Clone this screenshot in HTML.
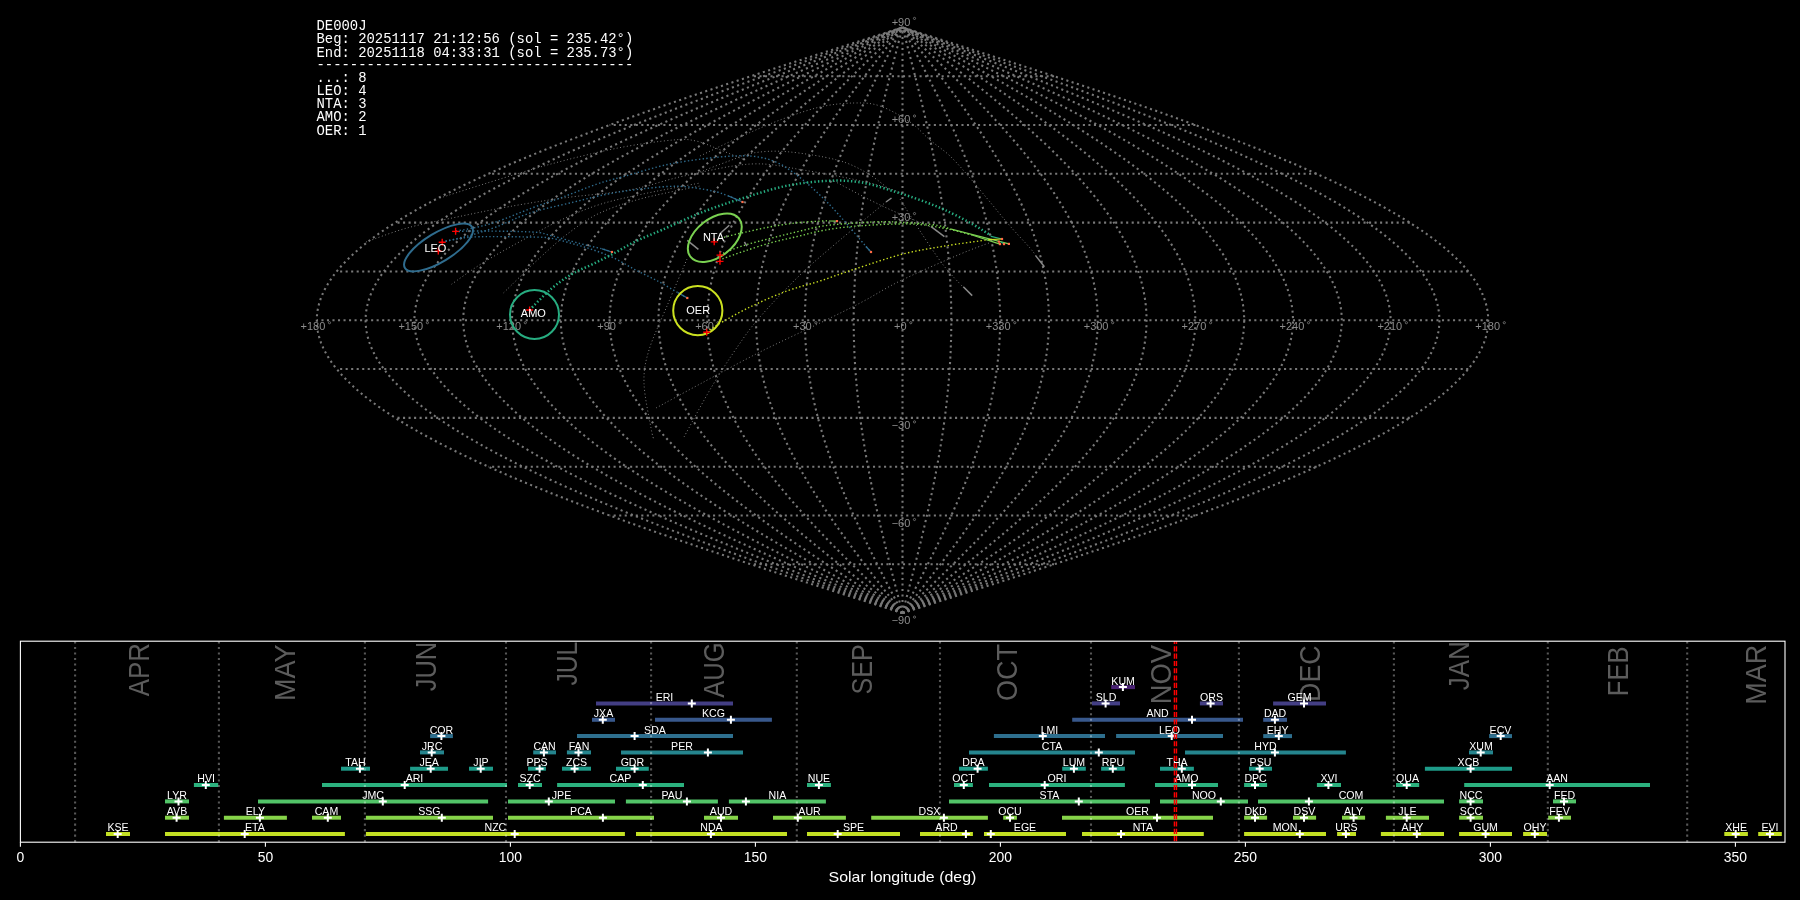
<!DOCTYPE html>
<html><head><meta charset="utf-8"><style>
html,body{margin:0;padding:0;background:#000;width:1800px;height:900px;overflow:hidden}
svg{display:block;will-change:transform}
text{font-family:"Liberation Sans",sans-serif}
.mono{font-family:"Liberation Mono",monospace}
</style></head><body>
<svg width="1800" height="900" viewBox="0 0 1800 900">
<rect x="0" y="0" width="1800" height="900" fill="#000"/>

<g fill="none" stroke="#787878" stroke-width="2.08" stroke-dasharray="2.08 3.44">
<path d="M902.50,613.11 L907.61,611.48 L912.72,609.86 L917.83,608.23 L922.94,606.60 L928.05,604.98 L933.15,603.35 L938.26,601.72 L943.36,600.09 L948.46,598.47 L953.55,596.84 L958.64,595.21 L963.72,593.59 L968.81,591.96 L973.88,590.33 L978.95,588.70 L984.02,587.08 L989.07,585.45 L994.13,583.82 L999.17,582.20 L1004.21,580.57 L1009.24,578.94 L1014.26,577.32 L1019.27,575.69 L1024.28,574.06 L1029.27,572.43 L1034.26,570.81 L1039.23,569.18 L1044.20,567.55 L1049.15,565.93 L1054.10,564.30 L1059.03,562.67 L1063.95,561.05 L1068.85,559.42 L1073.75,557.79 L1078.63,556.16 L1083.50,554.54 L1088.35,552.91 L1093.19,551.28 L1098.02,549.66 L1102.83,548.03 L1107.62,546.40 L1112.40,544.78 L1117.17,543.15 L1121.91,541.52 L1126.65,539.89 L1131.36,538.27 L1136.06,536.64 L1140.73,535.01 L1145.39,533.39 L1150.04,531.76 L1154.66,530.13 L1159.26,528.51 L1163.85,526.88 L1168.41,525.25 L1172.96,523.62 L1177.48,522.00 L1181.98,520.37 L1186.46,518.74 L1190.92,517.12 L1195.36,515.49 L1199.78,513.86 L1204.17,512.24 L1208.54,510.61 L1212.88,508.98 L1217.21,507.36 L1221.51,505.73 L1225.78,504.10 L1230.03,502.47 L1234.26,500.85 L1238.46,499.22 L1242.63,497.59 L1246.78,495.97 L1250.90,494.34 L1255.00,492.71 L1259.06,491.09 L1263.11,489.46 L1267.12,487.83 L1271.11,486.20 L1275.06,484.58 L1278.99,482.95 L1282.89,481.32 L1286.77,479.70 L1290.61,478.07 L1294.42,476.44 L1298.21,474.81 L1301.96,473.19 L1305.68,471.56 L1309.38,469.93 L1313.04,468.31 L1316.67,466.68 L1320.27,465.05 L1323.83,463.43 L1327.37,461.80 L1330.87,460.17 L1334.34,458.54 L1337.77,456.92 L1341.18,455.29 L1344.55,453.66 L1347.88,452.04 L1351.19,450.41 L1354.46,448.78 L1357.69,447.16 L1360.89,445.53 L1364.05,443.90 L1367.18,442.27 L1370.28,440.65 L1373.34,439.02 L1376.36,437.39 L1379.34,435.77 L1382.29,434.14 L1385.21,432.51 L1388.08,430.89 L1390.92,429.26 L1393.73,427.63 L1396.49,426.00 L1399.22,424.38 L1401.91,422.75 L1404.56,421.12 L1407.17,419.50 L1409.75,417.87 L1412.28,416.24 L1414.78,414.62 L1417.24,412.99 L1419.66,411.36 L1422.04,409.74 L1424.38,408.11 L1426.68,406.48 L1428.94,404.85 L1431.16,403.23 L1433.34,401.60 L1435.48,399.97 L1437.58,398.35 L1439.64,396.72 L1441.66,395.09 L1443.63,393.47 L1445.57,391.84 L1447.46,390.21 L1449.32,388.58 L1451.13,386.96 L1452.90,385.33 L1454.62,383.70 L1456.31,382.08 L1457.95,380.45 L1459.55,378.82 L1461.11,377.19 L1462.63,375.57 L1464.10,373.94 L1465.53,372.31 L1466.92,370.69 L1468.26,369.06 L1469.56,367.43 L1470.82,365.81 L1472.04,364.18 L1473.21,362.55 L1474.34,360.93 L1475.42,359.30 L1476.46,357.67 L1477.46,356.04 L1478.41,354.42 L1479.32,352.79 L1480.19,351.16 L1481.01,349.54 L1481.79,347.91 L1482.52,346.28 L1483.21,344.65 L1483.85,343.03 L1484.45,341.40 L1485.01,339.77 L1485.52,338.15 L1485.99,336.52 L1486.41,334.89 L1486.79,333.27 L1487.13,331.64 L1487.42,330.01 L1487.66,328.38 L1487.86,326.76 L1488.02,325.13 L1488.13,323.50 L1488.20,321.88 L1488.22,320.25 L1488.20,318.62 L1488.13,317.00 L1488.02,315.37 L1487.86,313.74 L1487.66,312.12 L1487.42,310.49 L1487.13,308.86 L1486.79,307.23 L1486.41,305.61 L1485.99,303.98 L1485.52,302.35 L1485.01,300.73 L1484.45,299.10 L1483.85,297.47 L1483.21,295.85 L1482.52,294.22 L1481.79,292.59 L1481.01,290.96 L1480.19,289.34 L1479.32,287.71 L1478.41,286.08 L1477.46,284.46 L1476.46,282.83 L1475.42,281.20 L1474.34,279.57 L1473.21,277.95 L1472.04,276.32 L1470.82,274.69 L1469.56,273.07 L1468.26,271.44 L1466.92,269.81 L1465.53,268.19 L1464.10,266.56 L1462.63,264.93 L1461.11,263.31 L1459.55,261.68 L1457.95,260.05 L1456.31,258.42 L1454.62,256.80 L1452.90,255.17 L1451.13,253.54 L1449.32,251.92 L1447.46,250.29 L1445.57,248.66 L1443.63,247.03 L1441.66,245.41 L1439.64,243.78 L1437.58,242.15 L1435.48,240.53 L1433.34,238.90 L1431.16,237.27 L1428.94,235.65 L1426.68,234.02 L1424.38,232.39 L1422.04,230.76 L1419.66,229.14 L1417.24,227.51 L1414.78,225.88 L1412.28,224.26 L1409.75,222.63 L1407.17,221.00 L1404.56,219.38 L1401.91,217.75 L1399.22,216.12 L1396.49,214.50 L1393.73,212.87 L1390.92,211.24 L1388.08,209.61 L1385.21,207.99 L1382.29,206.36 L1379.34,204.73 L1376.36,203.11 L1373.34,201.48 L1370.28,199.85 L1367.18,198.22 L1364.05,196.60 L1360.89,194.97 L1357.69,193.34 L1354.46,191.72 L1351.19,190.09 L1347.88,188.46 L1344.55,186.84 L1341.18,185.21 L1337.77,183.58 L1334.34,181.96 L1330.87,180.33 L1327.37,178.70 L1323.83,177.07 L1320.27,175.45 L1316.67,173.82 L1313.04,172.19 L1309.38,170.57 L1305.68,168.94 L1301.96,167.31 L1298.21,165.69 L1294.42,164.06 L1290.61,162.43 L1286.77,160.80 L1282.89,159.18 L1278.99,157.55 L1275.06,155.92 L1271.11,154.30 L1267.12,152.67 L1263.11,151.04 L1259.06,149.41 L1255.00,147.79 L1250.90,146.16 L1246.78,144.53 L1242.63,142.91 L1238.46,141.28 L1234.26,139.65 L1230.03,138.03 L1225.78,136.40 L1221.51,134.77 L1217.21,133.15 L1212.88,131.52 L1208.54,129.89 L1204.17,128.26 L1199.78,126.64 L1195.36,125.01 L1190.92,123.38 L1186.46,121.76 L1181.98,120.13 L1177.48,118.50 L1172.96,116.88 L1168.41,115.25 L1163.85,113.62 L1159.26,111.99 L1154.66,110.37 L1150.04,108.74 L1145.39,107.11 L1140.73,105.49 L1136.06,103.86 L1131.36,102.23 L1126.65,100.60 L1121.91,98.98 L1117.17,97.35 L1112.40,95.72 L1107.62,94.10 L1102.83,92.47 L1098.02,90.84 L1093.19,89.22 L1088.35,87.59 L1083.50,85.96 L1078.63,84.34 L1073.75,82.71 L1068.85,81.08 L1063.95,79.45 L1059.03,77.83 L1054.10,76.20 L1049.15,74.57 L1044.20,72.95 L1039.23,71.32 L1034.26,69.69 L1029.27,68.06 L1024.28,66.44 L1019.27,64.81 L1014.26,63.18 L1009.24,61.56 L1004.21,59.93 L999.17,58.30 L994.13,56.68 L989.07,55.05 L984.02,53.42 L978.95,51.80 L973.88,50.17 L968.81,48.54 L963.72,46.91 L958.64,45.29 L953.55,43.66 L948.46,42.03 L943.36,40.41 L938.26,38.78 L933.15,37.15 L928.05,35.52 L922.94,33.90 L917.83,32.27 L912.72,30.64 L907.61,29.02 L902.50,27.39"/>
<path d="M902.50,613.11 L907.19,611.48 L911.87,609.86 L916.55,608.23 L921.24,606.60 L925.92,604.98 L930.60,603.35 L935.28,601.72 L939.95,600.09 L944.63,598.47 L949.29,596.84 L953.96,595.21 L958.62,593.59 L963.28,591.96 L967.93,590.33 L972.58,588.70 L977.22,587.08 L981.86,585.45 L986.49,583.82 L991.12,582.20 L995.73,580.57 L1000.34,578.94 L1004.95,577.32 L1009.54,575.69 L1014.13,574.06 L1018.71,572.43 L1023.28,570.81 L1027.84,569.18 L1032.39,567.55 L1036.93,565.93 L1041.46,564.30 L1045.98,562.67 L1050.49,561.05 L1054.99,559.42 L1059.48,557.79 L1063.95,556.16 L1068.41,554.54 L1072.86,552.91 L1077.30,551.28 L1081.72,549.66 L1086.13,548.03 L1090.53,546.40 L1094.91,544.78 L1099.28,543.15 L1103.63,541.52 L1107.97,539.89 L1112.29,538.27 L1116.59,536.64 L1120.88,535.01 L1125.15,533.39 L1129.41,531.76 L1133.65,530.13 L1137.87,528.51 L1142.07,526.88 L1146.25,525.25 L1150.42,523.62 L1154.56,522.00 L1158.69,520.37 L1162.80,518.74 L1166.89,517.12 L1170.95,515.49 L1175.00,513.86 L1179.03,512.24 L1183.03,510.61 L1187.02,508.98 L1190.98,507.36 L1194.92,505.73 L1198.84,504.10 L1202.74,502.47 L1206.61,500.85 L1210.46,499.22 L1214.29,497.59 L1218.09,495.97 L1221.87,494.34 L1225.62,492.71 L1229.35,491.09 L1233.05,489.46 L1236.73,487.83 L1240.39,486.20 L1244.02,484.58 L1247.62,482.95 L1251.20,481.32 L1254.74,479.70 L1258.27,478.07 L1261.76,476.44 L1265.23,474.81 L1268.67,473.19 L1272.08,471.56 L1275.47,469.93 L1278.83,468.31 L1282.15,466.68 L1285.45,465.05 L1288.72,463.43 L1291.96,461.80 L1295.17,460.17 L1298.35,458.54 L1301.50,456.92 L1304.62,455.29 L1307.71,453.66 L1310.77,452.04 L1313.80,450.41 L1316.79,448.78 L1319.76,447.16 L1322.69,445.53 L1325.59,443.90 L1328.46,442.27 L1331.30,440.65 L1334.10,439.02 L1336.87,437.39 L1339.61,435.77 L1342.31,434.14 L1344.98,432.51 L1347.62,430.89 L1350.22,429.26 L1352.79,427.63 L1355.33,426.00 L1357.83,424.38 L1360.29,422.75 L1362.72,421.12 L1365.12,419.50 L1367.48,417.87 L1369.80,416.24 L1372.09,414.62 L1374.35,412.99 L1376.56,411.36 L1378.74,409.74 L1380.89,408.11 L1383.00,406.48 L1385.07,404.85 L1387.11,403.23 L1389.11,401.60 L1391.07,399.97 L1392.99,398.35 L1394.88,396.72 L1396.73,395.09 L1398.54,393.47 L1400.31,391.84 L1402.05,390.21 L1403.75,388.58 L1405.41,386.96 L1407.03,385.33 L1408.61,383.70 L1410.16,382.08 L1411.66,380.45 L1413.13,378.82 L1414.56,377.19 L1415.95,375.57 L1417.30,373.94 L1418.61,372.31 L1419.88,370.69 L1421.12,369.06 L1422.31,367.43 L1423.46,365.81 L1424.58,364.18 L1425.65,362.55 L1426.68,360.93 L1427.68,359.30 L1428.63,357.67 L1429.55,356.04 L1430.42,354.42 L1431.25,352.79 L1432.05,351.16 L1432.80,349.54 L1433.51,347.91 L1434.18,346.28 L1434.82,344.65 L1435.41,343.03 L1435.96,341.40 L1436.47,339.77 L1436.94,338.15 L1437.37,336.52 L1437.75,334.89 L1438.10,333.27 L1438.41,331.64 L1438.67,330.01 L1438.90,328.38 L1439.08,326.76 L1439.23,325.13 L1439.33,323.50 L1439.39,321.88 L1439.41,320.25 L1439.39,318.62 L1439.33,317.00 L1439.23,315.37 L1439.08,313.74 L1438.90,312.12 L1438.67,310.49 L1438.41,308.86 L1438.10,307.23 L1437.75,305.61 L1437.37,303.98 L1436.94,302.35 L1436.47,300.73 L1435.96,299.10 L1435.41,297.47 L1434.82,295.85 L1434.18,294.22 L1433.51,292.59 L1432.80,290.96 L1432.05,289.34 L1431.25,287.71 L1430.42,286.08 L1429.55,284.46 L1428.63,282.83 L1427.68,281.20 L1426.68,279.57 L1425.65,277.95 L1424.58,276.32 L1423.46,274.69 L1422.31,273.07 L1421.12,271.44 L1419.88,269.81 L1418.61,268.19 L1417.30,266.56 L1415.95,264.93 L1414.56,263.31 L1413.13,261.68 L1411.66,260.05 L1410.16,258.42 L1408.61,256.80 L1407.03,255.17 L1405.41,253.54 L1403.75,251.92 L1402.05,250.29 L1400.31,248.66 L1398.54,247.03 L1396.73,245.41 L1394.88,243.78 L1392.99,242.15 L1391.07,240.53 L1389.11,238.90 L1387.11,237.27 L1385.07,235.65 L1383.00,234.02 L1380.89,232.39 L1378.74,230.76 L1376.56,229.14 L1374.35,227.51 L1372.09,225.88 L1369.80,224.26 L1367.48,222.63 L1365.12,221.00 L1362.72,219.38 L1360.29,217.75 L1357.83,216.12 L1355.33,214.50 L1352.79,212.87 L1350.22,211.24 L1347.62,209.61 L1344.98,207.99 L1342.31,206.36 L1339.61,204.73 L1336.87,203.11 L1334.10,201.48 L1331.30,199.85 L1328.46,198.22 L1325.59,196.60 L1322.69,194.97 L1319.76,193.34 L1316.79,191.72 L1313.80,190.09 L1310.77,188.46 L1307.71,186.84 L1304.62,185.21 L1301.50,183.58 L1298.35,181.96 L1295.17,180.33 L1291.96,178.70 L1288.72,177.07 L1285.45,175.45 L1282.15,173.82 L1278.83,172.19 L1275.47,170.57 L1272.08,168.94 L1268.67,167.31 L1265.23,165.69 L1261.76,164.06 L1258.27,162.43 L1254.74,160.80 L1251.20,159.18 L1247.62,157.55 L1244.02,155.92 L1240.39,154.30 L1236.73,152.67 L1233.05,151.04 L1229.35,149.41 L1225.62,147.79 L1221.87,146.16 L1218.09,144.53 L1214.29,142.91 L1210.46,141.28 L1206.61,139.65 L1202.74,138.03 L1198.84,136.40 L1194.92,134.77 L1190.98,133.15 L1187.02,131.52 L1183.03,129.89 L1179.03,128.26 L1175.00,126.64 L1170.95,125.01 L1166.89,123.38 L1162.80,121.76 L1158.69,120.13 L1154.56,118.50 L1150.42,116.88 L1146.25,115.25 L1142.07,113.62 L1137.87,111.99 L1133.65,110.37 L1129.41,108.74 L1125.15,107.11 L1120.88,105.49 L1116.59,103.86 L1112.29,102.23 L1107.97,100.60 L1103.63,98.98 L1099.28,97.35 L1094.91,95.72 L1090.53,94.10 L1086.13,92.47 L1081.72,90.84 L1077.30,89.22 L1072.86,87.59 L1068.41,85.96 L1063.95,84.34 L1059.48,82.71 L1054.99,81.08 L1050.49,79.45 L1045.98,77.83 L1041.46,76.20 L1036.93,74.57 L1032.39,72.95 L1027.84,71.32 L1023.28,69.69 L1018.71,68.06 L1014.13,66.44 L1009.54,64.81 L1004.95,63.18 L1000.34,61.56 L995.73,59.93 L991.12,58.30 L986.49,56.68 L981.86,55.05 L977.22,53.42 L972.58,51.80 L967.93,50.17 L963.28,48.54 L958.62,46.91 L953.96,45.29 L949.29,43.66 L944.63,42.03 L939.95,40.41 L935.28,38.78 L930.60,37.15 L925.92,35.52 L921.24,33.90 L916.55,32.27 L911.87,30.64 L907.19,29.02 L902.50,27.39"/>
<path d="M902.50,613.11 L906.76,611.48 L911.02,609.86 L915.28,608.23 L919.53,606.60 L923.79,604.98 L928.05,603.35 L932.30,601.72 L936.55,600.09 L940.80,598.47 L945.04,596.84 L949.28,595.21 L953.52,593.59 L957.75,591.96 L961.98,590.33 L966.21,588.70 L970.43,587.08 L974.65,585.45 L978.86,583.82 L983.06,582.20 L987.26,580.57 L991.45,578.94 L995.63,577.32 L999.81,575.69 L1003.98,574.06 L1008.14,572.43 L1012.30,570.81 L1016.44,569.18 L1020.58,567.55 L1024.71,565.93 L1028.83,564.30 L1032.94,562.67 L1037.04,561.05 L1041.13,559.42 L1045.21,557.79 L1049.27,556.16 L1053.33,554.54 L1057.38,552.91 L1061.41,551.28 L1065.43,549.66 L1069.44,548.03 L1073.44,546.40 L1077.42,544.78 L1081.39,543.15 L1085.35,541.52 L1089.29,539.89 L1093.22,538.27 L1097.13,536.64 L1101.03,535.01 L1104.91,533.39 L1108.78,531.76 L1112.63,530.13 L1116.47,528.51 L1120.29,526.88 L1124.09,525.25 L1127.88,523.62 L1131.65,522.00 L1135.40,520.37 L1139.14,518.74 L1142.85,517.12 L1146.55,515.49 L1150.23,513.86 L1153.89,512.24 L1157.53,510.61 L1161.15,508.98 L1164.76,507.36 L1168.34,505.73 L1171.90,504.10 L1175.44,502.47 L1178.96,500.85 L1182.46,499.22 L1185.94,497.59 L1189.40,495.97 L1192.83,494.34 L1196.25,492.71 L1199.64,491.09 L1203.00,489.46 L1206.35,487.83 L1209.67,486.20 L1212.97,484.58 L1216.24,482.95 L1219.50,481.32 L1222.72,479.70 L1225.92,478.07 L1229.10,476.44 L1232.26,474.81 L1235.38,473.19 L1238.49,471.56 L1241.56,469.93 L1244.61,468.31 L1247.64,466.68 L1250.64,465.05 L1253.61,463.43 L1256.56,461.80 L1259.47,460.17 L1262.37,458.54 L1265.23,456.92 L1268.07,455.29 L1270.87,453.66 L1273.65,452.04 L1276.41,450.41 L1279.13,448.78 L1281.82,447.16 L1284.49,445.53 L1287.13,443.90 L1289.74,442.27 L1292.31,440.65 L1294.86,439.02 L1297.38,437.39 L1299.87,435.77 L1302.33,434.14 L1304.76,432.51 L1307.15,430.89 L1309.52,429.26 L1311.86,427.63 L1314.16,426.00 L1316.43,424.38 L1318.67,422.75 L1320.88,421.12 L1323.06,419.50 L1325.21,417.87 L1327.32,416.24 L1329.40,414.62 L1331.45,412.99 L1333.47,411.36 L1335.45,409.74 L1337.40,408.11 L1339.32,406.48 L1341.20,404.85 L1343.05,403.23 L1344.87,401.60 L1346.65,399.97 L1348.40,398.35 L1350.12,396.72 L1351.80,395.09 L1353.45,393.47 L1355.06,391.84 L1356.64,390.21 L1358.18,388.58 L1359.69,386.96 L1361.16,385.33 L1362.60,383.70 L1364.01,382.08 L1365.38,380.45 L1366.71,378.82 L1368.01,377.19 L1369.27,375.57 L1370.50,373.94 L1371.69,372.31 L1372.85,370.69 L1373.97,369.06 L1375.05,367.43 L1376.10,365.81 L1377.11,364.18 L1378.09,362.55 L1379.03,360.93 L1379.93,359.30 L1380.80,357.67 L1381.63,356.04 L1382.43,354.42 L1383.18,352.79 L1383.91,351.16 L1384.59,349.54 L1385.24,347.91 L1385.85,346.28 L1386.42,344.65 L1386.96,343.03 L1387.46,341.40 L1387.93,339.77 L1388.35,338.15 L1388.74,336.52 L1389.10,334.89 L1389.41,333.27 L1389.69,331.64 L1389.93,330.01 L1390.14,328.38 L1390.30,326.76 L1390.43,325.13 L1390.53,323.50 L1390.58,321.88 L1390.60,320.25 L1390.58,318.62 L1390.53,317.00 L1390.43,315.37 L1390.30,313.74 L1390.14,312.12 L1389.93,310.49 L1389.69,308.86 L1389.41,307.23 L1389.10,305.61 L1388.74,303.98 L1388.35,302.35 L1387.93,300.73 L1387.46,299.10 L1386.96,297.47 L1386.42,295.85 L1385.85,294.22 L1385.24,292.59 L1384.59,290.96 L1383.91,289.34 L1383.18,287.71 L1382.43,286.08 L1381.63,284.46 L1380.80,282.83 L1379.93,281.20 L1379.03,279.57 L1378.09,277.95 L1377.11,276.32 L1376.10,274.69 L1375.05,273.07 L1373.97,271.44 L1372.85,269.81 L1371.69,268.19 L1370.50,266.56 L1369.27,264.93 L1368.01,263.31 L1366.71,261.68 L1365.38,260.05 L1364.01,258.42 L1362.60,256.80 L1361.16,255.17 L1359.69,253.54 L1358.18,251.92 L1356.64,250.29 L1355.06,248.66 L1353.45,247.03 L1351.80,245.41 L1350.12,243.78 L1348.40,242.15 L1346.65,240.53 L1344.87,238.90 L1343.05,237.27 L1341.20,235.65 L1339.32,234.02 L1337.40,232.39 L1335.45,230.76 L1333.47,229.14 L1331.45,227.51 L1329.40,225.88 L1327.32,224.26 L1325.21,222.63 L1323.06,221.00 L1320.88,219.38 L1318.67,217.75 L1316.43,216.12 L1314.16,214.50 L1311.86,212.87 L1309.52,211.24 L1307.15,209.61 L1304.76,207.99 L1302.33,206.36 L1299.87,204.73 L1297.38,203.11 L1294.86,201.48 L1292.31,199.85 L1289.74,198.22 L1287.13,196.60 L1284.49,194.97 L1281.82,193.34 L1279.13,191.72 L1276.41,190.09 L1273.65,188.46 L1270.87,186.84 L1268.07,185.21 L1265.23,183.58 L1262.37,181.96 L1259.47,180.33 L1256.56,178.70 L1253.61,177.07 L1250.64,175.45 L1247.64,173.82 L1244.61,172.19 L1241.56,170.57 L1238.49,168.94 L1235.38,167.31 L1232.26,165.69 L1229.10,164.06 L1225.92,162.43 L1222.72,160.80 L1219.50,159.18 L1216.24,157.55 L1212.97,155.92 L1209.67,154.30 L1206.35,152.67 L1203.00,151.04 L1199.64,149.41 L1196.25,147.79 L1192.83,146.16 L1189.40,144.53 L1185.94,142.91 L1182.46,141.28 L1178.96,139.65 L1175.44,138.03 L1171.90,136.40 L1168.34,134.77 L1164.76,133.15 L1161.15,131.52 L1157.53,129.89 L1153.89,128.26 L1150.23,126.64 L1146.55,125.01 L1142.85,123.38 L1139.14,121.76 L1135.40,120.13 L1131.65,118.50 L1127.88,116.88 L1124.09,115.25 L1120.29,113.62 L1116.47,111.99 L1112.63,110.37 L1108.78,108.74 L1104.91,107.11 L1101.03,105.49 L1097.13,103.86 L1093.22,102.23 L1089.29,100.60 L1085.35,98.98 L1081.39,97.35 L1077.42,95.72 L1073.44,94.10 L1069.44,92.47 L1065.43,90.84 L1061.41,89.22 L1057.38,87.59 L1053.33,85.96 L1049.27,84.34 L1045.21,82.71 L1041.13,81.08 L1037.04,79.45 L1032.94,77.83 L1028.83,76.20 L1024.71,74.57 L1020.58,72.95 L1016.44,71.32 L1012.30,69.69 L1008.14,68.06 L1003.98,66.44 L999.81,64.81 L995.63,63.18 L991.45,61.56 L987.26,59.93 L983.06,58.30 L978.86,56.68 L974.65,55.05 L970.43,53.42 L966.21,51.80 L961.98,50.17 L957.75,48.54 L953.52,46.91 L949.28,45.29 L945.04,43.66 L940.80,42.03 L936.55,40.41 L932.30,38.78 L928.05,37.15 L923.79,35.52 L919.53,33.90 L915.28,32.27 L911.02,30.64 L906.76,29.02 L902.50,27.39"/>
<path d="M902.50,613.11 L906.33,611.48 L910.17,609.86 L914.00,608.23 L917.83,606.60 L921.66,604.98 L925.49,603.35 L929.32,601.72 L933.14,600.09 L936.97,598.47 L940.79,596.84 L944.60,595.21 L948.42,593.59 L952.23,591.96 L956.04,590.33 L959.84,588.70 L963.64,587.08 L967.43,585.45 L971.22,583.82 L975.00,582.20 L978.78,580.57 L982.55,578.94 L986.32,577.32 L990.08,575.69 L993.83,574.06 L997.58,572.43 L1001.32,570.81 L1005.05,569.18 L1008.77,567.55 L1012.49,565.93 L1016.20,564.30 L1019.90,562.67 L1023.58,561.05 L1027.27,559.42 L1030.94,557.79 L1034.60,556.16 L1038.25,554.54 L1041.89,552.91 L1045.52,551.28 L1049.14,549.66 L1052.75,548.03 L1056.34,546.40 L1059.93,544.78 L1063.50,543.15 L1067.06,541.52 L1070.61,539.89 L1074.14,538.27 L1077.67,536.64 L1081.18,535.01 L1084.67,533.39 L1088.15,531.76 L1091.62,530.13 L1095.07,528.51 L1098.51,526.88 L1101.93,525.25 L1105.34,523.62 L1108.73,522.00 L1112.11,520.37 L1115.47,518.74 L1118.82,517.12 L1122.14,515.49 L1125.46,513.86 L1128.75,512.24 L1132.03,510.61 L1135.29,508.98 L1138.53,507.36 L1141.75,505.73 L1144.96,504.10 L1148.15,502.47 L1151.32,500.85 L1154.47,499.22 L1157.60,497.59 L1160.71,495.97 L1163.80,494.34 L1166.87,492.71 L1169.92,491.09 L1172.95,489.46 L1175.96,487.83 L1178.95,486.20 L1181.92,484.58 L1184.87,482.95 L1187.80,481.32 L1190.70,479.70 L1193.58,478.07 L1196.44,476.44 L1199.28,474.81 L1202.10,473.19 L1204.89,471.56 L1207.66,469.93 L1210.40,468.31 L1213.12,466.68 L1215.82,465.05 L1218.50,463.43 L1221.15,461.80 L1223.78,460.17 L1226.38,458.54 L1228.96,456.92 L1231.51,455.29 L1234.04,453.66 L1236.54,452.04 L1239.02,450.41 L1241.47,448.78 L1243.89,447.16 L1246.29,445.53 L1248.67,443.90 L1251.01,442.27 L1253.33,440.65 L1255.63,439.02 L1257.89,437.39 L1260.13,435.77 L1262.35,434.14 L1264.53,432.51 L1266.69,430.89 L1268.82,429.26 L1270.92,427.63 L1272.99,426.00 L1275.04,424.38 L1277.06,422.75 L1279.05,421.12 L1281.01,419.50 L1282.94,417.87 L1284.84,416.24 L1286.71,414.62 L1288.56,412.99 L1290.37,411.36 L1292.15,409.74 L1293.91,408.11 L1295.64,406.48 L1297.33,404.85 L1299.00,403.23 L1300.63,401.60 L1302.24,399.97 L1303.81,398.35 L1305.36,396.72 L1306.87,395.09 L1308.35,393.47 L1309.80,391.84 L1311.22,390.21 L1312.61,388.58 L1313.97,386.96 L1315.30,385.33 L1316.59,383.70 L1317.86,382.08 L1319.09,380.45 L1320.29,378.82 L1321.46,377.19 L1322.60,375.57 L1323.70,373.94 L1324.77,372.31 L1325.81,370.69 L1326.82,369.06 L1327.80,367.43 L1328.74,365.81 L1329.65,364.18 L1330.53,362.55 L1331.38,360.93 L1332.19,359.30 L1332.97,357.67 L1333.72,356.04 L1334.43,354.42 L1335.12,352.79 L1335.77,351.16 L1336.38,349.54 L1336.96,347.91 L1337.51,346.28 L1338.03,344.65 L1338.52,343.03 L1338.97,341.40 L1339.38,339.77 L1339.77,338.15 L1340.12,336.52 L1340.44,334.89 L1340.72,333.27 L1340.97,331.64 L1341.19,330.01 L1341.37,328.38 L1341.52,326.76 L1341.64,325.13 L1341.72,323.50 L1341.77,321.88 L1341.79,320.25 L1341.77,318.62 L1341.72,317.00 L1341.64,315.37 L1341.52,313.74 L1341.37,312.12 L1341.19,310.49 L1340.97,308.86 L1340.72,307.23 L1340.44,305.61 L1340.12,303.98 L1339.77,302.35 L1339.38,300.73 L1338.97,299.10 L1338.52,297.47 L1338.03,295.85 L1337.51,294.22 L1336.96,292.59 L1336.38,290.96 L1335.77,289.34 L1335.12,287.71 L1334.43,286.08 L1333.72,284.46 L1332.97,282.83 L1332.19,281.20 L1331.38,279.57 L1330.53,277.95 L1329.65,276.32 L1328.74,274.69 L1327.80,273.07 L1326.82,271.44 L1325.81,269.81 L1324.77,268.19 L1323.70,266.56 L1322.60,264.93 L1321.46,263.31 L1320.29,261.68 L1319.09,260.05 L1317.86,258.42 L1316.59,256.80 L1315.30,255.17 L1313.97,253.54 L1312.61,251.92 L1311.22,250.29 L1309.80,248.66 L1308.35,247.03 L1306.87,245.41 L1305.36,243.78 L1303.81,242.15 L1302.24,240.53 L1300.63,238.90 L1299.00,237.27 L1297.33,235.65 L1295.64,234.02 L1293.91,232.39 L1292.15,230.76 L1290.37,229.14 L1288.56,227.51 L1286.71,225.88 L1284.84,224.26 L1282.94,222.63 L1281.01,221.00 L1279.05,219.38 L1277.06,217.75 L1275.04,216.12 L1272.99,214.50 L1270.92,212.87 L1268.82,211.24 L1266.69,209.61 L1264.53,207.99 L1262.35,206.36 L1260.13,204.73 L1257.89,203.11 L1255.63,201.48 L1253.33,199.85 L1251.01,198.22 L1248.67,196.60 L1246.29,194.97 L1243.89,193.34 L1241.47,191.72 L1239.02,190.09 L1236.54,188.46 L1234.04,186.84 L1231.51,185.21 L1228.96,183.58 L1226.38,181.96 L1223.78,180.33 L1221.15,178.70 L1218.50,177.07 L1215.82,175.45 L1213.12,173.82 L1210.40,172.19 L1207.66,170.57 L1204.89,168.94 L1202.10,167.31 L1199.28,165.69 L1196.44,164.06 L1193.58,162.43 L1190.70,160.80 L1187.80,159.18 L1184.87,157.55 L1181.92,155.92 L1178.95,154.30 L1175.96,152.67 L1172.95,151.04 L1169.92,149.41 L1166.87,147.79 L1163.80,146.16 L1160.71,144.53 L1157.60,142.91 L1154.47,141.28 L1151.32,139.65 L1148.15,138.03 L1144.96,136.40 L1141.75,134.77 L1138.53,133.15 L1135.29,131.52 L1132.03,129.89 L1128.75,128.26 L1125.46,126.64 L1122.14,125.01 L1118.82,123.38 L1115.47,121.76 L1112.11,120.13 L1108.73,118.50 L1105.34,116.88 L1101.93,115.25 L1098.51,113.62 L1095.07,111.99 L1091.62,110.37 L1088.15,108.74 L1084.67,107.11 L1081.18,105.49 L1077.67,103.86 L1074.14,102.23 L1070.61,100.60 L1067.06,98.98 L1063.50,97.35 L1059.93,95.72 L1056.34,94.10 L1052.75,92.47 L1049.14,90.84 L1045.52,89.22 L1041.89,87.59 L1038.25,85.96 L1034.60,84.34 L1030.94,82.71 L1027.27,81.08 L1023.58,79.45 L1019.90,77.83 L1016.20,76.20 L1012.49,74.57 L1008.77,72.95 L1005.05,71.32 L1001.32,69.69 L997.58,68.06 L993.83,66.44 L990.08,64.81 L986.32,63.18 L982.55,61.56 L978.78,59.93 L975.00,58.30 L971.22,56.68 L967.43,55.05 L963.64,53.42 L959.84,51.80 L956.04,50.17 L952.23,48.54 L948.42,46.91 L944.60,45.29 L940.79,43.66 L936.97,42.03 L933.14,40.41 L929.32,38.78 L925.49,37.15 L921.66,35.52 L917.83,33.90 L914.00,32.27 L910.17,30.64 L906.33,29.02 L902.50,27.39"/>
<path d="M902.50,613.11 L905.91,611.48 L909.31,609.86 L912.72,608.23 L916.13,606.60 L919.53,604.98 L922.94,603.35 L926.34,601.72 L929.74,600.09 L933.14,598.47 L936.53,596.84 L939.93,595.21 L943.32,593.59 L946.70,591.96 L950.09,590.33 L953.47,588.70 L956.84,587.08 L960.22,585.45 L963.58,583.82 L966.95,582.20 L970.31,580.57 L973.66,578.94 L977.01,577.32 L980.35,575.69 L983.69,574.06 L987.02,572.43 L990.34,570.81 L993.66,569.18 L996.97,567.55 L1000.27,565.93 L1003.56,564.30 L1006.85,562.67 L1010.13,561.05 L1013.40,559.42 L1016.67,557.79 L1019.92,556.16 L1023.16,554.54 L1026.40,552.91 L1029.63,551.28 L1032.84,549.66 L1036.05,548.03 L1039.25,546.40 L1042.44,544.78 L1045.61,543.15 L1048.78,541.52 L1051.93,539.89 L1055.07,538.27 L1058.20,536.64 L1061.32,535.01 L1064.43,533.39 L1067.52,531.76 L1070.61,530.13 L1073.68,528.51 L1076.73,526.88 L1079.77,525.25 L1082.80,523.62 L1085.82,522.00 L1088.82,520.37 L1091.81,518.74 L1094.78,517.12 L1097.74,515.49 L1100.68,513.86 L1103.61,512.24 L1106.53,510.61 L1109.42,508.98 L1112.30,507.36 L1115.17,505.73 L1118.02,504.10 L1120.85,502.47 L1123.67,500.85 L1126.47,499.22 L1129.25,497.59 L1132.02,495.97 L1134.77,494.34 L1137.50,492.71 L1140.21,491.09 L1142.90,489.46 L1145.58,487.83 L1148.24,486.20 L1150.88,484.58 L1153.50,482.95 L1156.10,481.32 L1158.68,479.70 L1161.24,478.07 L1163.78,476.44 L1166.30,474.81 L1168.81,473.19 L1171.29,471.56 L1173.75,469.93 L1176.19,468.31 L1178.61,466.68 L1181.01,465.05 L1183.39,463.43 L1185.74,461.80 L1188.08,460.17 L1190.39,458.54 L1192.68,456.92 L1194.95,455.29 L1197.20,453.66 L1199.42,452.04 L1201.63,450.41 L1203.80,448.78 L1205.96,447.16 L1208.09,445.53 L1210.20,443.90 L1212.29,442.27 L1214.35,440.65 L1216.39,439.02 L1218.40,437.39 L1220.40,435.77 L1222.36,434.14 L1224.30,432.51 L1226.22,430.89 L1228.12,429.26 L1229.98,427.63 L1231.83,426.00 L1233.65,424.38 L1235.44,422.75 L1237.21,421.12 L1238.95,419.50 L1240.67,417.87 L1242.36,416.24 L1244.02,414.62 L1245.66,412.99 L1247.27,411.36 L1248.86,409.74 L1250.42,408.11 L1251.95,406.48 L1253.46,404.85 L1254.94,403.23 L1256.40,401.60 L1257.82,399.97 L1259.22,398.35 L1260.59,396.72 L1261.94,395.09 L1263.26,393.47 L1264.55,391.84 L1265.81,390.21 L1267.04,388.58 L1268.25,386.96 L1269.43,385.33 L1270.58,383.70 L1271.71,382.08 L1272.80,380.45 L1273.87,378.82 L1274.91,377.19 L1275.92,375.57 L1276.90,373.94 L1277.85,372.31 L1278.78,370.69 L1279.67,369.06 L1280.54,367.43 L1281.38,365.81 L1282.19,364.18 L1282.97,362.55 L1283.72,360.93 L1284.45,359.30 L1285.14,357.67 L1285.81,356.04 L1286.44,354.42 L1287.05,352.79 L1287.62,351.16 L1288.17,349.54 L1288.69,347.91 L1289.18,346.28 L1289.64,344.65 L1290.07,343.03 L1290.47,341.40 L1290.84,339.77 L1291.18,338.15 L1291.49,336.52 L1291.78,334.89 L1292.03,333.27 L1292.25,331.64 L1292.44,330.01 L1292.61,328.38 L1292.74,326.76 L1292.85,325.13 L1292.92,323.50 L1292.97,321.88 L1292.98,320.25 L1292.97,318.62 L1292.92,317.00 L1292.85,315.37 L1292.74,313.74 L1292.61,312.12 L1292.44,310.49 L1292.25,308.86 L1292.03,307.23 L1291.78,305.61 L1291.49,303.98 L1291.18,302.35 L1290.84,300.73 L1290.47,299.10 L1290.07,297.47 L1289.64,295.85 L1289.18,294.22 L1288.69,292.59 L1288.17,290.96 L1287.62,289.34 L1287.05,287.71 L1286.44,286.08 L1285.81,284.46 L1285.14,282.83 L1284.45,281.20 L1283.72,279.57 L1282.97,277.95 L1282.19,276.32 L1281.38,274.69 L1280.54,273.07 L1279.67,271.44 L1278.78,269.81 L1277.85,268.19 L1276.90,266.56 L1275.92,264.93 L1274.91,263.31 L1273.87,261.68 L1272.80,260.05 L1271.71,258.42 L1270.58,256.80 L1269.43,255.17 L1268.25,253.54 L1267.04,251.92 L1265.81,250.29 L1264.55,248.66 L1263.26,247.03 L1261.94,245.41 L1260.59,243.78 L1259.22,242.15 L1257.82,240.53 L1256.40,238.90 L1254.94,237.27 L1253.46,235.65 L1251.95,234.02 L1250.42,232.39 L1248.86,230.76 L1247.27,229.14 L1245.66,227.51 L1244.02,225.88 L1242.36,224.26 L1240.67,222.63 L1238.95,221.00 L1237.21,219.38 L1235.44,217.75 L1233.65,216.12 L1231.83,214.50 L1229.98,212.87 L1228.12,211.24 L1226.22,209.61 L1224.30,207.99 L1222.36,206.36 L1220.40,204.73 L1218.40,203.11 L1216.39,201.48 L1214.35,199.85 L1212.29,198.22 L1210.20,196.60 L1208.09,194.97 L1205.96,193.34 L1203.80,191.72 L1201.63,190.09 L1199.42,188.46 L1197.20,186.84 L1194.95,185.21 L1192.68,183.58 L1190.39,181.96 L1188.08,180.33 L1185.74,178.70 L1183.39,177.07 L1181.01,175.45 L1178.61,173.82 L1176.19,172.19 L1173.75,170.57 L1171.29,168.94 L1168.81,167.31 L1166.30,165.69 L1163.78,164.06 L1161.24,162.43 L1158.68,160.80 L1156.10,159.18 L1153.50,157.55 L1150.88,155.92 L1148.24,154.30 L1145.58,152.67 L1142.90,151.04 L1140.21,149.41 L1137.50,147.79 L1134.77,146.16 L1132.02,144.53 L1129.25,142.91 L1126.47,141.28 L1123.67,139.65 L1120.85,138.03 L1118.02,136.40 L1115.17,134.77 L1112.30,133.15 L1109.42,131.52 L1106.53,129.89 L1103.61,128.26 L1100.68,126.64 L1097.74,125.01 L1094.78,123.38 L1091.81,121.76 L1088.82,120.13 L1085.82,118.50 L1082.80,116.88 L1079.77,115.25 L1076.73,113.62 L1073.68,111.99 L1070.61,110.37 L1067.52,108.74 L1064.43,107.11 L1061.32,105.49 L1058.20,103.86 L1055.07,102.23 L1051.93,100.60 L1048.78,98.98 L1045.61,97.35 L1042.44,95.72 L1039.25,94.10 L1036.05,92.47 L1032.84,90.84 L1029.63,89.22 L1026.40,87.59 L1023.16,85.96 L1019.92,84.34 L1016.67,82.71 L1013.40,81.08 L1010.13,79.45 L1006.85,77.83 L1003.56,76.20 L1000.27,74.57 L996.97,72.95 L993.66,71.32 L990.34,69.69 L987.02,68.06 L983.69,66.44 L980.35,64.81 L977.01,63.18 L973.66,61.56 L970.31,59.93 L966.95,58.30 L963.58,56.68 L960.22,55.05 L956.84,53.42 L953.47,51.80 L950.09,50.17 L946.70,48.54 L943.32,46.91 L939.93,45.29 L936.53,43.66 L933.14,42.03 L929.74,40.41 L926.34,38.78 L922.94,37.15 L919.53,35.52 L916.13,33.90 L912.72,32.27 L909.31,30.64 L905.91,29.02 L902.50,27.39"/>
<path d="M902.50,613.11 L905.48,611.48 L908.46,609.86 L911.44,608.23 L914.42,606.60 L917.40,604.98 L920.38,603.35 L923.36,601.72 L926.33,600.09 L929.31,598.47 L932.28,596.84 L935.25,595.21 L938.21,593.59 L941.18,591.96 L944.14,590.33 L947.10,588.70 L950.05,587.08 L953.00,585.45 L955.95,583.82 L958.89,582.20 L961.83,580.57 L964.76,578.94 L967.69,577.32 L970.62,575.69 L973.54,574.06 L976.45,572.43 L979.36,570.81 L982.26,569.18 L985.16,567.55 L988.05,565.93 L990.93,564.30 L993.81,562.67 L996.68,561.05 L999.54,559.42 L1002.39,557.79 L1005.24,556.16 L1008.08,554.54 L1010.91,552.91 L1013.74,551.28 L1016.55,549.66 L1019.36,548.03 L1022.16,546.40 L1024.94,544.78 L1027.72,543.15 L1030.49,541.52 L1033.25,539.89 L1036.00,538.27 L1038.74,536.64 L1041.47,535.01 L1044.19,533.39 L1046.90,531.76 L1049.59,530.13 L1052.28,528.51 L1054.95,526.88 L1057.61,525.25 L1060.27,523.62 L1062.90,522.00 L1065.53,520.37 L1068.14,518.74 L1070.75,517.12 L1073.34,515.49 L1075.91,513.86 L1078.47,512.24 L1081.02,510.61 L1083.56,508.98 L1086.08,507.36 L1088.59,505.73 L1091.08,504.10 L1093.56,502.47 L1096.02,500.85 L1098.47,499.22 L1100.91,497.59 L1103.33,495.97 L1105.73,494.34 L1108.12,492.71 L1110.50,491.09 L1112.85,489.46 L1115.19,487.83 L1117.52,486.20 L1119.83,484.58 L1122.12,482.95 L1124.40,481.32 L1126.66,479.70 L1128.90,478.07 L1131.12,476.44 L1133.33,474.81 L1135.52,473.19 L1137.69,471.56 L1139.84,469.93 L1141.98,468.31 L1144.10,466.68 L1146.20,465.05 L1148.28,463.43 L1150.34,461.80 L1152.38,460.17 L1154.41,458.54 L1156.41,456.92 L1158.40,455.29 L1160.36,453.66 L1162.31,452.04 L1164.23,450.41 L1166.14,448.78 L1168.03,447.16 L1169.89,445.53 L1171.74,443.90 L1173.57,442.27 L1175.37,440.65 L1177.15,439.02 L1178.92,437.39 L1180.66,435.77 L1182.38,434.14 L1184.08,432.51 L1185.76,430.89 L1187.41,429.26 L1189.05,427.63 L1190.66,426.00 L1192.25,424.38 L1193.82,422.75 L1195.37,421.12 L1196.89,419.50 L1198.39,417.87 L1199.87,416.24 L1201.33,414.62 L1202.77,412.99 L1204.18,411.36 L1205.56,409.74 L1206.93,408.11 L1208.27,406.48 L1209.59,404.85 L1210.89,403.23 L1212.16,401.60 L1213.41,399.97 L1214.63,398.35 L1215.83,396.72 L1217.01,395.09 L1218.16,393.47 L1219.29,391.84 L1220.40,390.21 L1221.48,388.58 L1222.53,386.96 L1223.56,385.33 L1224.57,383.70 L1225.56,382.08 L1226.51,380.45 L1227.45,378.82 L1228.36,377.19 L1229.24,375.57 L1230.10,373.94 L1230.93,372.31 L1231.74,370.69 L1232.53,369.06 L1233.29,367.43 L1234.02,365.81 L1234.73,364.18 L1235.41,362.55 L1236.07,360.93 L1236.70,359.30 L1237.31,357.67 L1237.89,356.04 L1238.45,354.42 L1238.98,352.79 L1239.48,351.16 L1239.96,349.54 L1240.42,347.91 L1240.84,346.28 L1241.25,344.65 L1241.62,343.03 L1241.97,341.40 L1242.30,339.77 L1242.60,338.15 L1242.87,336.52 L1243.12,334.89 L1243.34,333.27 L1243.53,331.64 L1243.70,330.01 L1243.84,328.38 L1243.96,326.76 L1244.05,325.13 L1244.12,323.50 L1244.16,321.88 L1244.17,320.25 L1244.16,318.62 L1244.12,317.00 L1244.05,315.37 L1243.96,313.74 L1243.84,312.12 L1243.70,310.49 L1243.53,308.86 L1243.34,307.23 L1243.12,305.61 L1242.87,303.98 L1242.60,302.35 L1242.30,300.73 L1241.97,299.10 L1241.62,297.47 L1241.25,295.85 L1240.84,294.22 L1240.42,292.59 L1239.96,290.96 L1239.48,289.34 L1238.98,287.71 L1238.45,286.08 L1237.89,284.46 L1237.31,282.83 L1236.70,281.20 L1236.07,279.57 L1235.41,277.95 L1234.73,276.32 L1234.02,274.69 L1233.29,273.07 L1232.53,271.44 L1231.74,269.81 L1230.93,268.19 L1230.10,266.56 L1229.24,264.93 L1228.36,263.31 L1227.45,261.68 L1226.51,260.05 L1225.56,258.42 L1224.57,256.80 L1223.56,255.17 L1222.53,253.54 L1221.48,251.92 L1220.40,250.29 L1219.29,248.66 L1218.16,247.03 L1217.01,245.41 L1215.83,243.78 L1214.63,242.15 L1213.41,240.53 L1212.16,238.90 L1210.89,237.27 L1209.59,235.65 L1208.27,234.02 L1206.93,232.39 L1205.56,230.76 L1204.18,229.14 L1202.77,227.51 L1201.33,225.88 L1199.87,224.26 L1198.39,222.63 L1196.89,221.00 L1195.37,219.38 L1193.82,217.75 L1192.25,216.12 L1190.66,214.50 L1189.05,212.87 L1187.41,211.24 L1185.76,209.61 L1184.08,207.99 L1182.38,206.36 L1180.66,204.73 L1178.92,203.11 L1177.15,201.48 L1175.37,199.85 L1173.57,198.22 L1171.74,196.60 L1169.89,194.97 L1168.03,193.34 L1166.14,191.72 L1164.23,190.09 L1162.31,188.46 L1160.36,186.84 L1158.40,185.21 L1156.41,183.58 L1154.41,181.96 L1152.38,180.33 L1150.34,178.70 L1148.28,177.07 L1146.20,175.45 L1144.10,173.82 L1141.98,172.19 L1139.84,170.57 L1137.69,168.94 L1135.52,167.31 L1133.33,165.69 L1131.12,164.06 L1128.90,162.43 L1126.66,160.80 L1124.40,159.18 L1122.12,157.55 L1119.83,155.92 L1117.52,154.30 L1115.19,152.67 L1112.85,151.04 L1110.50,149.41 L1108.12,147.79 L1105.73,146.16 L1103.33,144.53 L1100.91,142.91 L1098.47,141.28 L1096.02,139.65 L1093.56,138.03 L1091.08,136.40 L1088.59,134.77 L1086.08,133.15 L1083.56,131.52 L1081.02,129.89 L1078.47,128.26 L1075.91,126.64 L1073.34,125.01 L1070.75,123.38 L1068.14,121.76 L1065.53,120.13 L1062.90,118.50 L1060.27,116.88 L1057.61,115.25 L1054.95,113.62 L1052.28,111.99 L1049.59,110.37 L1046.90,108.74 L1044.19,107.11 L1041.47,105.49 L1038.74,103.86 L1036.00,102.23 L1033.25,100.60 L1030.49,98.98 L1027.72,97.35 L1024.94,95.72 L1022.16,94.10 L1019.36,92.47 L1016.55,90.84 L1013.74,89.22 L1010.91,87.59 L1008.08,85.96 L1005.24,84.34 L1002.39,82.71 L999.54,81.08 L996.68,79.45 L993.81,77.83 L990.93,76.20 L988.05,74.57 L985.16,72.95 L982.26,71.32 L979.36,69.69 L976.45,68.06 L973.54,66.44 L970.62,64.81 L967.69,63.18 L964.76,61.56 L961.83,59.93 L958.89,58.30 L955.95,56.68 L953.00,55.05 L950.05,53.42 L947.10,51.80 L944.14,50.17 L941.18,48.54 L938.21,46.91 L935.25,45.29 L932.28,43.66 L929.31,42.03 L926.33,40.41 L923.36,38.78 L920.38,37.15 L917.40,35.52 L914.42,33.90 L911.44,32.27 L908.46,30.64 L905.48,29.02 L902.50,27.39"/>
<path d="M902.50,613.11 L905.06,611.48 L907.61,609.86 L910.17,608.23 L912.72,606.60 L915.27,604.98 L917.83,603.35 L920.38,601.72 L922.93,600.09 L925.48,598.47 L928.02,596.84 L930.57,595.21 L933.11,593.59 L935.65,591.96 L938.19,590.33 L940.73,588.70 L943.26,587.08 L945.79,585.45 L948.31,583.82 L950.84,582.20 L953.35,580.57 L955.87,578.94 L958.38,577.32 L960.89,575.69 L963.39,574.06 L965.89,572.43 L968.38,570.81 L970.87,569.18 L973.35,567.55 L975.83,565.93 L978.30,564.30 L980.76,562.67 L983.22,561.05 L985.68,559.42 L988.12,557.79 L990.56,556.16 L993.00,554.54 L995.43,552.91 L997.85,551.28 L1000.26,549.66 L1002.66,548.03 L1005.06,546.40 L1007.45,544.78 L1009.83,543.15 L1012.21,541.52 L1014.57,539.89 L1016.93,538.27 L1019.28,536.64 L1021.62,535.01 L1023.95,533.39 L1026.27,531.76 L1028.58,530.13 L1030.88,528.51 L1033.17,526.88 L1035.46,525.25 L1037.73,523.62 L1039.99,522.00 L1042.24,520.37 L1044.48,518.74 L1046.71,517.12 L1048.93,515.49 L1051.14,513.86 L1053.33,512.24 L1055.52,510.61 L1057.69,508.98 L1059.85,507.36 L1062.00,505.73 L1064.14,504.10 L1066.27,502.47 L1068.38,500.85 L1070.48,499.22 L1072.56,497.59 L1074.64,495.97 L1076.70,494.34 L1078.75,492.71 L1080.78,491.09 L1082.80,489.46 L1084.81,487.83 L1086.80,486.20 L1088.78,484.58 L1090.75,482.95 L1092.70,481.32 L1094.63,479.70 L1096.55,478.07 L1098.46,476.44 L1100.35,474.81 L1102.23,473.19 L1104.09,471.56 L1105.94,469.93 L1107.77,468.31 L1109.58,466.68 L1111.38,465.05 L1113.17,463.43 L1114.93,461.80 L1116.68,460.17 L1118.42,458.54 L1120.14,456.92 L1121.84,455.29 L1123.52,453.66 L1125.19,452.04 L1126.84,450.41 L1128.48,448.78 L1130.09,447.16 L1131.69,445.53 L1133.28,443.90 L1134.84,442.27 L1136.39,440.65 L1137.92,439.02 L1139.43,437.39 L1140.92,435.77 L1142.40,434.14 L1143.85,432.51 L1145.29,430.89 L1146.71,429.26 L1148.11,427.63 L1149.50,426.00 L1150.86,424.38 L1152.20,422.75 L1153.53,421.12 L1154.84,419.50 L1156.12,417.87 L1157.39,416.24 L1158.64,414.62 L1159.87,412.99 L1161.08,411.36 L1162.27,409.74 L1163.44,408.11 L1164.59,406.48 L1165.72,404.85 L1166.83,403.23 L1167.92,401.60 L1168.99,399.97 L1170.04,398.35 L1171.07,396.72 L1172.08,395.09 L1173.07,393.47 L1174.04,391.84 L1174.98,390.21 L1175.91,388.58 L1176.81,386.96 L1177.70,385.33 L1178.56,383.70 L1179.40,382.08 L1180.23,380.45 L1181.03,378.82 L1181.81,377.19 L1182.56,375.57 L1183.30,373.94 L1184.02,372.31 L1184.71,370.69 L1185.38,369.06 L1186.03,367.43 L1186.66,365.81 L1187.27,364.18 L1187.85,362.55 L1188.42,360.93 L1188.96,359.30 L1189.48,357.67 L1189.98,356.04 L1190.46,354.42 L1190.91,352.79 L1191.34,351.16 L1191.75,349.54 L1192.14,347.91 L1192.51,346.28 L1192.85,344.65 L1193.18,343.03 L1193.48,341.40 L1193.76,339.77 L1194.01,338.15 L1194.25,336.52 L1194.46,334.89 L1194.65,333.27 L1194.81,331.64 L1194.96,330.01 L1195.08,328.38 L1195.18,326.76 L1195.26,325.13 L1195.32,323.50 L1195.35,321.88 L1195.36,320.25 L1195.35,318.62 L1195.32,317.00 L1195.26,315.37 L1195.18,313.74 L1195.08,312.12 L1194.96,310.49 L1194.81,308.86 L1194.65,307.23 L1194.46,305.61 L1194.25,303.98 L1194.01,302.35 L1193.76,300.73 L1193.48,299.10 L1193.18,297.47 L1192.85,295.85 L1192.51,294.22 L1192.14,292.59 L1191.75,290.96 L1191.34,289.34 L1190.91,287.71 L1190.46,286.08 L1189.98,284.46 L1189.48,282.83 L1188.96,281.20 L1188.42,279.57 L1187.85,277.95 L1187.27,276.32 L1186.66,274.69 L1186.03,273.07 L1185.38,271.44 L1184.71,269.81 L1184.02,268.19 L1183.30,266.56 L1182.56,264.93 L1181.81,263.31 L1181.03,261.68 L1180.23,260.05 L1179.40,258.42 L1178.56,256.80 L1177.70,255.17 L1176.81,253.54 L1175.91,251.92 L1174.98,250.29 L1174.04,248.66 L1173.07,247.03 L1172.08,245.41 L1171.07,243.78 L1170.04,242.15 L1168.99,240.53 L1167.92,238.90 L1166.83,237.27 L1165.72,235.65 L1164.59,234.02 L1163.44,232.39 L1162.27,230.76 L1161.08,229.14 L1159.87,227.51 L1158.64,225.88 L1157.39,224.26 L1156.12,222.63 L1154.84,221.00 L1153.53,219.38 L1152.20,217.75 L1150.86,216.12 L1149.50,214.50 L1148.11,212.87 L1146.71,211.24 L1145.29,209.61 L1143.85,207.99 L1142.40,206.36 L1140.92,204.73 L1139.43,203.11 L1137.92,201.48 L1136.39,199.85 L1134.84,198.22 L1133.28,196.60 L1131.69,194.97 L1130.09,193.34 L1128.48,191.72 L1126.84,190.09 L1125.19,188.46 L1123.52,186.84 L1121.84,185.21 L1120.14,183.58 L1118.42,181.96 L1116.68,180.33 L1114.93,178.70 L1113.17,177.07 L1111.38,175.45 L1109.58,173.82 L1107.77,172.19 L1105.94,170.57 L1104.09,168.94 L1102.23,167.31 L1100.35,165.69 L1098.46,164.06 L1096.55,162.43 L1094.63,160.80 L1092.70,159.18 L1090.75,157.55 L1088.78,155.92 L1086.80,154.30 L1084.81,152.67 L1082.80,151.04 L1080.78,149.41 L1078.75,147.79 L1076.70,146.16 L1074.64,144.53 L1072.56,142.91 L1070.48,141.28 L1068.38,139.65 L1066.27,138.03 L1064.14,136.40 L1062.00,134.77 L1059.85,133.15 L1057.69,131.52 L1055.52,129.89 L1053.33,128.26 L1051.14,126.64 L1048.93,125.01 L1046.71,123.38 L1044.48,121.76 L1042.24,120.13 L1039.99,118.50 L1037.73,116.88 L1035.46,115.25 L1033.17,113.62 L1030.88,111.99 L1028.58,110.37 L1026.27,108.74 L1023.95,107.11 L1021.62,105.49 L1019.28,103.86 L1016.93,102.23 L1014.57,100.60 L1012.21,98.98 L1009.83,97.35 L1007.45,95.72 L1005.06,94.10 L1002.66,92.47 L1000.26,90.84 L997.85,89.22 L995.43,87.59 L993.00,85.96 L990.56,84.34 L988.12,82.71 L985.68,81.08 L983.22,79.45 L980.76,77.83 L978.30,76.20 L975.83,74.57 L973.35,72.95 L970.87,71.32 L968.38,69.69 L965.89,68.06 L963.39,66.44 L960.89,64.81 L958.38,63.18 L955.87,61.56 L953.35,59.93 L950.84,58.30 L948.31,56.68 L945.79,55.05 L943.26,53.42 L940.73,51.80 L938.19,50.17 L935.65,48.54 L933.11,46.91 L930.57,45.29 L928.02,43.66 L925.48,42.03 L922.93,40.41 L920.38,38.78 L917.83,37.15 L915.27,35.52 L912.72,33.90 L910.17,32.27 L907.61,30.64 L905.06,29.02 L902.50,27.39"/>
<path d="M902.50,613.11 L904.63,611.48 L906.76,609.86 L908.89,608.23 L911.02,606.60 L913.15,604.98 L915.27,603.35 L917.40,601.72 L919.52,600.09 L921.65,598.47 L923.77,596.84 L925.89,595.21 L928.01,593.59 L930.13,591.96 L932.24,590.33 L934.35,588.70 L936.47,587.08 L938.57,585.45 L940.68,583.82 L942.78,582.20 L944.88,580.57 L946.97,578.94 L949.07,577.32 L951.16,575.69 L953.24,574.06 L955.32,572.43 L957.40,570.81 L959.47,569.18 L961.54,567.55 L963.61,565.93 L965.66,564.30 L967.72,562.67 L969.77,561.05 L971.81,559.42 L973.85,557.79 L975.89,556.16 L977.92,554.54 L979.94,552.91 L981.95,551.28 L983.97,549.66 L985.97,548.03 L987.97,546.40 L989.96,544.78 L991.94,543.15 L993.92,541.52 L995.89,539.89 L997.86,538.27 L999.81,536.64 L1001.76,535.01 L1003.71,533.39 L1005.64,531.76 L1007.57,530.13 L1009.48,528.51 L1011.39,526.88 L1013.30,525.25 L1015.19,523.62 L1017.07,522.00 L1018.95,520.37 L1020.82,518.74 L1022.68,517.12 L1024.53,515.49 L1026.36,513.86 L1028.20,512.24 L1030.02,510.61 L1031.83,508.98 L1033.63,507.36 L1035.42,505.73 L1037.20,504.10 L1038.97,502.47 L1040.73,500.85 L1042.48,499.22 L1044.22,497.59 L1045.95,495.97 L1047.67,494.34 L1049.37,492.71 L1051.07,491.09 L1052.75,489.46 L1054.42,487.83 L1056.09,486.20 L1057.73,484.58 L1059.37,482.95 L1061.00,481.32 L1062.61,479.70 L1064.21,478.07 L1065.80,476.44 L1067.38,474.81 L1068.94,473.19 L1070.49,471.56 L1072.03,469.93 L1073.56,468.31 L1075.07,466.68 L1076.57,465.05 L1078.05,463.43 L1079.53,461.80 L1080.99,460.17 L1082.43,458.54 L1083.86,456.92 L1085.28,455.29 L1086.69,453.66 L1088.08,452.04 L1089.45,450.41 L1090.81,448.78 L1092.16,447.16 L1093.50,445.53 L1094.81,443.90 L1096.12,442.27 L1097.41,440.65 L1098.68,439.02 L1099.94,437.39 L1101.18,435.77 L1102.41,434.14 L1103.63,432.51 L1104.83,430.89 L1106.01,429.26 L1107.18,427.63 L1108.33,426.00 L1109.47,424.38 L1110.59,422.75 L1111.69,421.12 L1112.78,419.50 L1113.85,417.87 L1114.91,416.24 L1115.95,414.62 L1116.98,412.99 L1117.98,411.36 L1118.97,409.74 L1119.95,408.11 L1120.91,406.48 L1121.85,404.85 L1122.78,403.23 L1123.68,401.60 L1124.58,399.97 L1125.45,398.35 L1126.31,396.72 L1127.15,395.09 L1127.97,393.47 L1128.78,391.84 L1129.57,390.21 L1130.34,388.58 L1131.09,386.96 L1131.83,385.33 L1132.55,383.70 L1133.25,382.08 L1133.94,380.45 L1134.61,378.82 L1135.25,377.19 L1135.89,375.57 L1136.50,373.94 L1137.10,372.31 L1137.67,370.69 L1138.23,369.06 L1138.78,367.43 L1139.30,365.81 L1139.81,364.18 L1140.30,362.55 L1140.77,360.93 L1141.22,359.30 L1141.65,357.67 L1142.07,356.04 L1142.46,354.42 L1142.84,352.79 L1143.20,351.16 L1143.55,349.54 L1143.87,347.91 L1144.17,346.28 L1144.46,344.65 L1144.73,343.03 L1144.98,341.40 L1145.21,339.77 L1145.43,338.15 L1145.62,336.52 L1145.80,334.89 L1145.96,333.27 L1146.09,331.64 L1146.22,330.01 L1146.32,328.38 L1146.40,326.76 L1146.47,325.13 L1146.51,323.50 L1146.54,321.88 L1146.55,320.25 L1146.54,318.62 L1146.51,317.00 L1146.47,315.37 L1146.40,313.74 L1146.32,312.12 L1146.22,310.49 L1146.09,308.86 L1145.96,307.23 L1145.80,305.61 L1145.62,303.98 L1145.43,302.35 L1145.21,300.73 L1144.98,299.10 L1144.73,297.47 L1144.46,295.85 L1144.17,294.22 L1143.87,292.59 L1143.55,290.96 L1143.20,289.34 L1142.84,287.71 L1142.46,286.08 L1142.07,284.46 L1141.65,282.83 L1141.22,281.20 L1140.77,279.57 L1140.30,277.95 L1139.81,276.32 L1139.30,274.69 L1138.78,273.07 L1138.23,271.44 L1137.67,269.81 L1137.10,268.19 L1136.50,266.56 L1135.89,264.93 L1135.25,263.31 L1134.61,261.68 L1133.94,260.05 L1133.25,258.42 L1132.55,256.80 L1131.83,255.17 L1131.09,253.54 L1130.34,251.92 L1129.57,250.29 L1128.78,248.66 L1127.97,247.03 L1127.15,245.41 L1126.31,243.78 L1125.45,242.15 L1124.58,240.53 L1123.68,238.90 L1122.78,237.27 L1121.85,235.65 L1120.91,234.02 L1119.95,232.39 L1118.97,230.76 L1117.98,229.14 L1116.98,227.51 L1115.95,225.88 L1114.91,224.26 L1113.85,222.63 L1112.78,221.00 L1111.69,219.38 L1110.59,217.75 L1109.47,216.12 L1108.33,214.50 L1107.18,212.87 L1106.01,211.24 L1104.83,209.61 L1103.63,207.99 L1102.41,206.36 L1101.18,204.73 L1099.94,203.11 L1098.68,201.48 L1097.41,199.85 L1096.12,198.22 L1094.81,196.60 L1093.50,194.97 L1092.16,193.34 L1090.81,191.72 L1089.45,190.09 L1088.08,188.46 L1086.69,186.84 L1085.28,185.21 L1083.86,183.58 L1082.43,181.96 L1080.99,180.33 L1079.53,178.70 L1078.05,177.07 L1076.57,175.45 L1075.07,173.82 L1073.56,172.19 L1072.03,170.57 L1070.49,168.94 L1068.94,167.31 L1067.38,165.69 L1065.80,164.06 L1064.21,162.43 L1062.61,160.80 L1061.00,159.18 L1059.37,157.55 L1057.73,155.92 L1056.09,154.30 L1054.42,152.67 L1052.75,151.04 L1051.07,149.41 L1049.37,147.79 L1047.67,146.16 L1045.95,144.53 L1044.22,142.91 L1042.48,141.28 L1040.73,139.65 L1038.97,138.03 L1037.20,136.40 L1035.42,134.77 L1033.63,133.15 L1031.83,131.52 L1030.02,129.89 L1028.20,128.26 L1026.36,126.64 L1024.53,125.01 L1022.68,123.38 L1020.82,121.76 L1018.95,120.13 L1017.07,118.50 L1015.19,116.88 L1013.30,115.25 L1011.39,113.62 L1009.48,111.99 L1007.57,110.37 L1005.64,108.74 L1003.71,107.11 L1001.76,105.49 L999.81,103.86 L997.86,102.23 L995.89,100.60 L993.92,98.98 L991.94,97.35 L989.96,95.72 L987.97,94.10 L985.97,92.47 L983.97,90.84 L981.95,89.22 L979.94,87.59 L977.92,85.96 L975.89,84.34 L973.85,82.71 L971.81,81.08 L969.77,79.45 L967.72,77.83 L965.66,76.20 L963.61,74.57 L961.54,72.95 L959.47,71.32 L957.40,69.69 L955.32,68.06 L953.24,66.44 L951.16,64.81 L949.07,63.18 L946.97,61.56 L944.88,59.93 L942.78,58.30 L940.68,56.68 L938.57,55.05 L936.47,53.42 L934.35,51.80 L932.24,50.17 L930.13,48.54 L928.01,46.91 L925.89,45.29 L923.77,43.66 L921.65,42.03 L919.52,40.41 L917.40,38.78 L915.27,37.15 L913.15,35.52 L911.02,33.90 L908.89,32.27 L906.76,30.64 L904.63,29.02 L902.50,27.39"/>
<path d="M902.50,613.11 L904.20,611.48 L905.91,609.86 L907.61,608.23 L909.31,606.60 L911.02,604.98 L912.72,603.35 L914.42,601.72 L916.12,600.09 L917.82,598.47 L919.52,596.84 L921.21,595.21 L922.91,593.59 L924.60,591.96 L926.29,590.33 L927.98,588.70 L929.67,587.08 L931.36,585.45 L933.04,583.82 L934.72,582.20 L936.40,580.57 L938.08,578.94 L939.75,577.32 L941.42,575.69 L943.09,574.06 L944.76,572.43 L946.42,570.81 L948.08,569.18 L949.73,567.55 L951.38,565.93 L953.03,564.30 L954.68,562.67 L956.32,561.05 L957.95,559.42 L959.58,557.79 L961.21,556.16 L962.83,554.54 L964.45,552.91 L966.06,551.28 L967.67,549.66 L969.28,548.03 L970.87,546.40 L972.47,544.78 L974.06,543.15 L975.64,541.52 L977.22,539.89 L978.79,538.27 L980.35,536.64 L981.91,535.01 L983.46,533.39 L985.01,531.76 L986.55,530.13 L988.09,528.51 L989.62,526.88 L991.14,525.25 L992.65,523.62 L994.16,522.00 L995.66,520.37 L997.15,518.74 L998.64,517.12 L1000.12,515.49 L1001.59,513.86 L1003.06,512.24 L1004.51,510.61 L1005.96,508.98 L1007.40,507.36 L1008.84,505.73 L1010.26,504.10 L1011.68,502.47 L1013.09,500.85 L1014.49,499.22 L1015.88,497.59 L1017.26,495.97 L1018.63,494.34 L1020.00,492.71 L1021.35,491.09 L1022.70,489.46 L1024.04,487.83 L1025.37,486.20 L1026.69,484.58 L1028.00,482.95 L1029.30,481.32 L1030.59,479.70 L1031.87,478.07 L1033.14,476.44 L1034.40,474.81 L1035.65,473.19 L1036.89,471.56 L1038.13,469.93 L1039.35,468.31 L1040.56,466.68 L1041.76,465.05 L1042.94,463.43 L1044.12,461.80 L1045.29,460.17 L1046.45,458.54 L1047.59,456.92 L1048.73,455.29 L1049.85,453.66 L1050.96,452.04 L1052.06,450.41 L1053.15,448.78 L1054.23,447.16 L1055.30,445.53 L1056.35,443.90 L1057.39,442.27 L1058.43,440.65 L1059.45,439.02 L1060.45,437.39 L1061.45,435.77 L1062.43,434.14 L1063.40,432.51 L1064.36,430.89 L1065.31,429.26 L1066.24,427.63 L1067.16,426.00 L1068.07,424.38 L1068.97,422.75 L1069.85,421.12 L1070.72,419.50 L1071.58,417.87 L1072.43,416.24 L1073.26,414.62 L1074.08,412.99 L1074.89,411.36 L1075.68,409.74 L1076.46,408.11 L1077.23,406.48 L1077.98,404.85 L1078.72,403.23 L1079.45,401.60 L1080.16,399.97 L1080.86,398.35 L1081.55,396.72 L1082.22,395.09 L1082.88,393.47 L1083.52,391.84 L1084.15,390.21 L1084.77,388.58 L1085.38,386.96 L1085.97,385.33 L1086.54,383.70 L1087.10,382.08 L1087.65,380.45 L1088.18,378.82 L1088.70,377.19 L1089.21,375.57 L1089.70,373.94 L1090.18,372.31 L1090.64,370.69 L1091.09,369.06 L1091.52,367.43 L1091.94,365.81 L1092.35,364.18 L1092.74,362.55 L1093.11,360.93 L1093.47,359.30 L1093.82,357.67 L1094.15,356.04 L1094.47,354.42 L1094.77,352.79 L1095.06,351.16 L1095.34,349.54 L1095.60,347.91 L1095.84,346.28 L1096.07,344.65 L1096.28,343.03 L1096.48,341.40 L1096.67,339.77 L1096.84,338.15 L1097.00,336.52 L1097.14,334.89 L1097.26,333.27 L1097.38,331.64 L1097.47,330.01 L1097.55,328.38 L1097.62,326.76 L1097.67,325.13 L1097.71,323.50 L1097.73,321.88 L1097.74,320.25 L1097.73,318.62 L1097.71,317.00 L1097.67,315.37 L1097.62,313.74 L1097.55,312.12 L1097.47,310.49 L1097.38,308.86 L1097.26,307.23 L1097.14,305.61 L1097.00,303.98 L1096.84,302.35 L1096.67,300.73 L1096.48,299.10 L1096.28,297.47 L1096.07,295.85 L1095.84,294.22 L1095.60,292.59 L1095.34,290.96 L1095.06,289.34 L1094.77,287.71 L1094.47,286.08 L1094.15,284.46 L1093.82,282.83 L1093.47,281.20 L1093.11,279.57 L1092.74,277.95 L1092.35,276.32 L1091.94,274.69 L1091.52,273.07 L1091.09,271.44 L1090.64,269.81 L1090.18,268.19 L1089.70,266.56 L1089.21,264.93 L1088.70,263.31 L1088.18,261.68 L1087.65,260.05 L1087.10,258.42 L1086.54,256.80 L1085.97,255.17 L1085.38,253.54 L1084.77,251.92 L1084.15,250.29 L1083.52,248.66 L1082.88,247.03 L1082.22,245.41 L1081.55,243.78 L1080.86,242.15 L1080.16,240.53 L1079.45,238.90 L1078.72,237.27 L1077.98,235.65 L1077.23,234.02 L1076.46,232.39 L1075.68,230.76 L1074.89,229.14 L1074.08,227.51 L1073.26,225.88 L1072.43,224.26 L1071.58,222.63 L1070.72,221.00 L1069.85,219.38 L1068.97,217.75 L1068.07,216.12 L1067.16,214.50 L1066.24,212.87 L1065.31,211.24 L1064.36,209.61 L1063.40,207.99 L1062.43,206.36 L1061.45,204.73 L1060.45,203.11 L1059.45,201.48 L1058.43,199.85 L1057.39,198.22 L1056.35,196.60 L1055.30,194.97 L1054.23,193.34 L1053.15,191.72 L1052.06,190.09 L1050.96,188.46 L1049.85,186.84 L1048.73,185.21 L1047.59,183.58 L1046.45,181.96 L1045.29,180.33 L1044.12,178.70 L1042.94,177.07 L1041.76,175.45 L1040.56,173.82 L1039.35,172.19 L1038.13,170.57 L1036.89,168.94 L1035.65,167.31 L1034.40,165.69 L1033.14,164.06 L1031.87,162.43 L1030.59,160.80 L1029.30,159.18 L1028.00,157.55 L1026.69,155.92 L1025.37,154.30 L1024.04,152.67 L1022.70,151.04 L1021.35,149.41 L1020.00,147.79 L1018.63,146.16 L1017.26,144.53 L1015.88,142.91 L1014.49,141.28 L1013.09,139.65 L1011.68,138.03 L1010.26,136.40 L1008.84,134.77 L1007.40,133.15 L1005.96,131.52 L1004.51,129.89 L1003.06,128.26 L1001.59,126.64 L1000.12,125.01 L998.64,123.38 L997.15,121.76 L995.66,120.13 L994.16,118.50 L992.65,116.88 L991.14,115.25 L989.62,113.62 L988.09,111.99 L986.55,110.37 L985.01,108.74 L983.46,107.11 L981.91,105.49 L980.35,103.86 L978.79,102.23 L977.22,100.60 L975.64,98.98 L974.06,97.35 L972.47,95.72 L970.87,94.10 L969.28,92.47 L967.67,90.84 L966.06,89.22 L964.45,87.59 L962.83,85.96 L961.21,84.34 L959.58,82.71 L957.95,81.08 L956.32,79.45 L954.68,77.83 L953.03,76.20 L951.38,74.57 L949.73,72.95 L948.08,71.32 L946.42,69.69 L944.76,68.06 L943.09,66.44 L941.42,64.81 L939.75,63.18 L938.08,61.56 L936.40,59.93 L934.72,58.30 L933.04,56.68 L931.36,55.05 L929.67,53.42 L927.98,51.80 L926.29,50.17 L924.60,48.54 L922.91,46.91 L921.21,45.29 L919.52,43.66 L917.82,42.03 L916.12,40.41 L914.42,38.78 L912.72,37.15 L911.02,35.52 L909.31,33.90 L907.61,32.27 L905.91,30.64 L904.20,29.02 L902.50,27.39"/>
<path d="M902.50,613.11 L903.78,611.48 L905.06,609.86 L906.33,608.23 L907.61,606.60 L908.89,604.98 L910.16,603.35 L911.44,601.72 L912.71,600.09 L913.99,598.47 L915.26,596.84 L916.53,595.21 L917.81,593.59 L919.08,591.96 L920.35,590.33 L921.61,588.70 L922.88,587.08 L924.14,585.45 L925.41,583.82 L926.67,582.20 L927.93,580.57 L929.18,578.94 L930.44,577.32 L931.69,575.69 L932.94,574.06 L934.19,572.43 L935.44,570.81 L936.68,569.18 L937.92,567.55 L939.16,565.93 L940.40,564.30 L941.63,562.67 L942.86,561.05 L944.09,559.42 L945.31,557.79 L946.53,556.16 L947.75,554.54 L948.96,552.91 L950.17,551.28 L951.38,549.66 L952.58,548.03 L953.78,546.40 L954.98,544.78 L956.17,543.15 L957.35,541.52 L958.54,539.89 L959.71,538.27 L960.89,536.64 L962.06,535.01 L963.22,533.39 L964.38,531.76 L965.54,530.13 L966.69,528.51 L967.84,526.88 L968.98,525.25 L970.11,523.62 L971.24,522.00 L972.37,520.37 L973.49,518.74 L974.61,517.12 L975.72,515.49 L976.82,513.86 L977.92,512.24 L979.01,510.61 L980.10,508.98 L981.18,507.36 L982.25,505.73 L983.32,504.10 L984.38,502.47 L985.44,500.85 L986.49,499.22 L987.53,497.59 L988.57,495.97 L989.60,494.34 L990.62,492.71 L991.64,491.09 L992.65,489.46 L993.65,487.83 L994.65,486.20 L995.64,484.58 L996.62,482.95 L997.60,481.32 L998.57,479.70 L999.53,478.07 L1000.48,476.44 L1001.43,474.81 L1002.37,473.19 L1003.30,471.56 L1004.22,469.93 L1005.13,468.31 L1006.04,466.68 L1006.94,465.05 L1007.83,463.43 L1008.72,461.80 L1009.59,460.17 L1010.46,458.54 L1011.32,456.92 L1012.17,455.29 L1013.01,453.66 L1013.85,452.04 L1014.67,450.41 L1015.49,448.78 L1016.30,447.16 L1017.10,445.53 L1017.89,443.90 L1018.67,442.27 L1019.44,440.65 L1020.21,439.02 L1020.96,437.39 L1021.71,435.77 L1022.45,434.14 L1023.18,432.51 L1023.90,430.89 L1024.61,429.26 L1025.31,427.63 L1026.00,426.00 L1026.68,424.38 L1027.35,422.75 L1028.02,421.12 L1028.67,419.50 L1029.31,417.87 L1029.95,416.24 L1030.57,414.62 L1031.19,412.99 L1031.79,411.36 L1032.38,409.74 L1032.97,408.11 L1033.55,406.48 L1034.11,404.85 L1034.67,403.23 L1035.21,401.60 L1035.75,399.97 L1036.27,398.35 L1036.79,396.72 L1037.29,395.09 L1037.78,393.47 L1038.27,391.84 L1038.74,390.21 L1039.20,388.58 L1039.66,386.96 L1040.10,385.33 L1040.53,383.70 L1040.95,382.08 L1041.36,380.45 L1041.76,378.82 L1042.15,377.19 L1042.53,375.57 L1042.90,373.94 L1043.26,372.31 L1043.60,370.69 L1043.94,369.06 L1044.27,367.43 L1044.58,365.81 L1044.88,364.18 L1045.18,362.55 L1045.46,360.93 L1045.73,359.30 L1045.99,357.67 L1046.24,356.04 L1046.48,354.42 L1046.71,352.79 L1046.92,351.16 L1047.13,349.54 L1047.32,347.91 L1047.50,346.28 L1047.68,344.65 L1047.84,343.03 L1047.99,341.40 L1048.13,339.77 L1048.26,338.15 L1048.37,336.52 L1048.48,334.89 L1048.57,333.27 L1048.66,331.64 L1048.73,330.01 L1048.79,328.38 L1048.84,326.76 L1048.88,325.13 L1048.91,323.50 L1048.92,321.88 L1048.93,320.25 L1048.92,318.62 L1048.91,317.00 L1048.88,315.37 L1048.84,313.74 L1048.79,312.12 L1048.73,310.49 L1048.66,308.86 L1048.57,307.23 L1048.48,305.61 L1048.37,303.98 L1048.26,302.35 L1048.13,300.73 L1047.99,299.10 L1047.84,297.47 L1047.68,295.85 L1047.50,294.22 L1047.32,292.59 L1047.13,290.96 L1046.92,289.34 L1046.71,287.71 L1046.48,286.08 L1046.24,284.46 L1045.99,282.83 L1045.73,281.20 L1045.46,279.57 L1045.18,277.95 L1044.88,276.32 L1044.58,274.69 L1044.27,273.07 L1043.94,271.44 L1043.60,269.81 L1043.26,268.19 L1042.90,266.56 L1042.53,264.93 L1042.15,263.31 L1041.76,261.68 L1041.36,260.05 L1040.95,258.42 L1040.53,256.80 L1040.10,255.17 L1039.66,253.54 L1039.20,251.92 L1038.74,250.29 L1038.27,248.66 L1037.78,247.03 L1037.29,245.41 L1036.79,243.78 L1036.27,242.15 L1035.75,240.53 L1035.21,238.90 L1034.67,237.27 L1034.11,235.65 L1033.55,234.02 L1032.97,232.39 L1032.38,230.76 L1031.79,229.14 L1031.19,227.51 L1030.57,225.88 L1029.95,224.26 L1029.31,222.63 L1028.67,221.00 L1028.02,219.38 L1027.35,217.75 L1026.68,216.12 L1026.00,214.50 L1025.31,212.87 L1024.61,211.24 L1023.90,209.61 L1023.18,207.99 L1022.45,206.36 L1021.71,204.73 L1020.96,203.11 L1020.21,201.48 L1019.44,199.85 L1018.67,198.22 L1017.89,196.60 L1017.10,194.97 L1016.30,193.34 L1015.49,191.72 L1014.67,190.09 L1013.85,188.46 L1013.01,186.84 L1012.17,185.21 L1011.32,183.58 L1010.46,181.96 L1009.59,180.33 L1008.72,178.70 L1007.83,177.07 L1006.94,175.45 L1006.04,173.82 L1005.13,172.19 L1004.22,170.57 L1003.30,168.94 L1002.37,167.31 L1001.43,165.69 L1000.48,164.06 L999.53,162.43 L998.57,160.80 L997.60,159.18 L996.62,157.55 L995.64,155.92 L994.65,154.30 L993.65,152.67 L992.65,151.04 L991.64,149.41 L990.62,147.79 L989.60,146.16 L988.57,144.53 L987.53,142.91 L986.49,141.28 L985.44,139.65 L984.38,138.03 L983.32,136.40 L982.25,134.77 L981.18,133.15 L980.10,131.52 L979.01,129.89 L977.92,128.26 L976.82,126.64 L975.72,125.01 L974.61,123.38 L973.49,121.76 L972.37,120.13 L971.24,118.50 L970.11,116.88 L968.98,115.25 L967.84,113.62 L966.69,111.99 L965.54,110.37 L964.38,108.74 L963.22,107.11 L962.06,105.49 L960.89,103.86 L959.71,102.23 L958.54,100.60 L957.35,98.98 L956.17,97.35 L954.98,95.72 L953.78,94.10 L952.58,92.47 L951.38,90.84 L950.17,89.22 L948.96,87.59 L947.75,85.96 L946.53,84.34 L945.31,82.71 L944.09,81.08 L942.86,79.45 L941.63,77.83 L940.40,76.20 L939.16,74.57 L937.92,72.95 L936.68,71.32 L935.44,69.69 L934.19,68.06 L932.94,66.44 L931.69,64.81 L930.44,63.18 L929.18,61.56 L927.93,59.93 L926.67,58.30 L925.41,56.68 L924.14,55.05 L922.88,53.42 L921.61,51.80 L920.35,50.17 L919.08,48.54 L917.81,46.91 L916.53,45.29 L915.26,43.66 L913.99,42.03 L912.71,40.41 L911.44,38.78 L910.16,37.15 L908.89,35.52 L907.61,33.90 L906.33,32.27 L905.06,30.64 L903.78,29.02 L902.50,27.39"/>
<path d="M902.50,613.11 L903.35,611.48 L904.20,609.86 L905.06,608.23 L905.91,606.60 L906.76,604.98 L907.61,603.35 L908.46,601.72 L909.31,600.09 L910.16,598.47 L911.01,596.84 L911.86,595.21 L912.70,593.59 L913.55,591.96 L914.40,590.33 L915.24,588.70 L916.09,587.08 L916.93,585.45 L917.77,583.82 L918.61,582.20 L919.45,580.57 L920.29,578.94 L921.13,577.32 L921.96,575.69 L922.80,574.06 L923.63,572.43 L924.46,570.81 L925.29,569.18 L926.12,567.55 L926.94,565.93 L927.77,564.30 L928.59,562.67 L929.41,561.05 L930.23,559.42 L931.04,557.79 L931.85,556.16 L932.67,554.54 L933.48,552.91 L934.28,551.28 L935.09,549.66 L935.89,548.03 L936.69,546.40 L937.48,544.78 L938.28,543.15 L939.07,541.52 L939.86,539.89 L940.64,538.27 L941.43,536.64 L942.21,535.01 L942.98,533.39 L943.76,531.76 L944.53,530.13 L945.29,528.51 L946.06,526.88 L946.82,525.25 L947.58,523.62 L948.33,522.00 L949.08,520.37 L949.83,518.74 L950.57,517.12 L951.31,515.49 L952.05,513.86 L952.78,512.24 L953.51,510.61 L954.23,508.98 L954.95,507.36 L955.67,505.73 L956.38,504.10 L957.09,502.47 L957.79,500.85 L958.49,499.22 L959.19,497.59 L959.88,495.97 L960.57,494.34 L961.25,492.71 L961.93,491.09 L962.60,489.46 L963.27,487.83 L963.93,486.20 L964.59,484.58 L965.25,482.95 L965.90,481.32 L966.54,479.70 L967.18,478.07 L967.82,476.44 L968.45,474.81 L969.08,473.19 L969.70,471.56 L970.31,469.93 L970.92,468.31 L971.53,466.68 L972.13,465.05 L972.72,463.43 L973.31,461.80 L973.89,460.17 L974.47,458.54 L975.05,456.92 L975.61,455.29 L976.17,453.66 L976.73,452.04 L977.28,450.41 L977.83,448.78 L978.36,447.16 L978.90,445.53 L979.43,443.90 L979.95,442.27 L980.46,440.65 L980.97,439.02 L981.48,437.39 L981.97,435.77 L982.47,434.14 L982.95,432.51 L983.43,430.89 L983.90,429.26 L984.37,427.63 L984.83,426.00 L985.29,424.38 L985.73,422.75 L986.18,421.12 L986.61,419.50 L987.04,417.87 L987.46,416.24 L987.88,414.62 L988.29,412.99 L988.69,411.36 L989.09,409.74 L989.48,408.11 L989.86,406.48 L990.24,404.85 L990.61,403.23 L990.97,401.60 L991.33,399.97 L991.68,398.35 L992.02,396.72 L992.36,395.09 L992.69,393.47 L993.01,391.84 L993.33,390.21 L993.64,388.58 L993.94,386.96 L994.23,385.33 L994.52,383.70 L994.80,382.08 L995.08,380.45 L995.34,378.82 L995.60,377.19 L995.85,375.57 L996.10,373.94 L996.34,372.31 L996.57,370.69 L996.79,369.06 L997.01,367.43 L997.22,365.81 L997.42,364.18 L997.62,362.55 L997.81,360.93 L997.99,359.30 L998.16,357.67 L998.33,356.04 L998.49,354.42 L998.64,352.79 L998.78,351.16 L998.92,349.54 L999.05,347.91 L999.17,346.28 L999.28,344.65 L999.39,343.03 L999.49,341.40 L999.59,339.77 L999.67,338.15 L999.75,336.52 L999.82,334.89 L999.88,333.27 L999.94,331.64 L999.99,330.01 L1000.03,328.38 L1000.06,326.76 L1000.09,325.13 L1000.11,323.50 L1000.12,321.88 L1000.12,320.25 L1000.12,318.62 L1000.11,317.00 L1000.09,315.37 L1000.06,313.74 L1000.03,312.12 L999.99,310.49 L999.94,308.86 L999.88,307.23 L999.82,305.61 L999.75,303.98 L999.67,302.35 L999.59,300.73 L999.49,299.10 L999.39,297.47 L999.28,295.85 L999.17,294.22 L999.05,292.59 L998.92,290.96 L998.78,289.34 L998.64,287.71 L998.49,286.08 L998.33,284.46 L998.16,282.83 L997.99,281.20 L997.81,279.57 L997.62,277.95 L997.42,276.32 L997.22,274.69 L997.01,273.07 L996.79,271.44 L996.57,269.81 L996.34,268.19 L996.10,266.56 L995.85,264.93 L995.60,263.31 L995.34,261.68 L995.08,260.05 L994.80,258.42 L994.52,256.80 L994.23,255.17 L993.94,253.54 L993.64,251.92 L993.33,250.29 L993.01,248.66 L992.69,247.03 L992.36,245.41 L992.02,243.78 L991.68,242.15 L991.33,240.53 L990.97,238.90 L990.61,237.27 L990.24,235.65 L989.86,234.02 L989.48,232.39 L989.09,230.76 L988.69,229.14 L988.29,227.51 L987.88,225.88 L987.46,224.26 L987.04,222.63 L986.61,221.00 L986.18,219.38 L985.73,217.75 L985.29,216.12 L984.83,214.50 L984.37,212.87 L983.90,211.24 L983.43,209.61 L982.95,207.99 L982.47,206.36 L981.97,204.73 L981.48,203.11 L980.97,201.48 L980.46,199.85 L979.95,198.22 L979.43,196.60 L978.90,194.97 L978.36,193.34 L977.83,191.72 L977.28,190.09 L976.73,188.46 L976.17,186.84 L975.61,185.21 L975.05,183.58 L974.47,181.96 L973.89,180.33 L973.31,178.70 L972.72,177.07 L972.13,175.45 L971.53,173.82 L970.92,172.19 L970.31,170.57 L969.70,168.94 L969.08,167.31 L968.45,165.69 L967.82,164.06 L967.18,162.43 L966.54,160.80 L965.90,159.18 L965.25,157.55 L964.59,155.92 L963.93,154.30 L963.27,152.67 L962.60,151.04 L961.93,149.41 L961.25,147.79 L960.57,146.16 L959.88,144.53 L959.19,142.91 L958.49,141.28 L957.79,139.65 L957.09,138.03 L956.38,136.40 L955.67,134.77 L954.95,133.15 L954.23,131.52 L953.51,129.89 L952.78,128.26 L952.05,126.64 L951.31,125.01 L950.57,123.38 L949.83,121.76 L949.08,120.13 L948.33,118.50 L947.58,116.88 L946.82,115.25 L946.06,113.62 L945.29,111.99 L944.53,110.37 L943.76,108.74 L942.98,107.11 L942.21,105.49 L941.43,103.86 L940.64,102.23 L939.86,100.60 L939.07,98.98 L938.28,97.35 L937.48,95.72 L936.69,94.10 L935.89,92.47 L935.09,90.84 L934.28,89.22 L933.48,87.59 L932.67,85.96 L931.85,84.34 L931.04,82.71 L930.23,81.08 L929.41,79.45 L928.59,77.83 L927.77,76.20 L926.94,74.57 L926.12,72.95 L925.29,71.32 L924.46,69.69 L923.63,68.06 L922.80,66.44 L921.96,64.81 L921.13,63.18 L920.29,61.56 L919.45,59.93 L918.61,58.30 L917.77,56.68 L916.93,55.05 L916.09,53.42 L915.24,51.80 L914.40,50.17 L913.55,48.54 L912.70,46.91 L911.86,45.29 L911.01,43.66 L910.16,42.03 L909.31,40.41 L908.46,38.78 L907.61,37.15 L906.76,35.52 L905.91,33.90 L905.06,32.27 L904.20,30.64 L903.35,29.02 L902.50,27.39"/>
<path d="M902.50,613.11 L902.93,611.48 L903.35,609.86 L903.78,608.23 L904.20,606.60 L904.63,604.98 L905.05,603.35 L905.48,601.72 L905.90,600.09 L906.33,598.47 L906.75,596.84 L907.18,595.21 L907.60,593.59 L908.03,591.96 L908.45,590.33 L908.87,588.70 L909.29,587.08 L909.71,585.45 L910.14,583.82 L910.56,582.20 L910.98,580.57 L911.39,578.94 L911.81,577.32 L912.23,575.69 L912.65,574.06 L913.06,572.43 L913.48,570.81 L913.89,569.18 L914.31,567.55 L914.72,565.93 L915.13,564.30 L915.54,562.67 L915.95,561.05 L916.36,559.42 L916.77,557.79 L917.18,556.16 L917.58,554.54 L917.99,552.91 L918.39,551.28 L918.79,549.66 L919.19,548.03 L919.59,546.40 L919.99,544.78 L920.39,543.15 L920.78,541.52 L921.18,539.89 L921.57,538.27 L921.96,536.64 L922.35,535.01 L922.74,533.39 L923.13,531.76 L923.51,530.13 L923.90,528.51 L924.28,526.88 L924.66,525.25 L925.04,523.62 L925.41,522.00 L925.79,520.37 L926.16,518.74 L926.54,517.12 L926.90,515.49 L927.27,513.86 L927.64,512.24 L928.00,510.61 L928.37,508.98 L928.73,507.36 L929.08,505.73 L929.44,504.10 L929.79,502.47 L930.15,500.85 L930.50,499.22 L930.84,497.59 L931.19,495.97 L931.53,494.34 L931.87,492.71 L932.21,491.09 L932.55,489.46 L932.88,487.83 L933.22,486.20 L933.55,484.58 L933.87,482.95 L934.20,481.32 L934.52,479.70 L934.84,478.07 L935.16,476.44 L935.48,474.81 L935.79,473.19 L936.10,471.56 L936.41,469.93 L936.71,468.31 L937.01,466.68 L937.31,465.05 L937.61,463.43 L937.91,461.80 L938.20,460.17 L938.49,458.54 L938.77,456.92 L939.06,455.29 L939.34,453.66 L939.62,452.04 L939.89,450.41 L940.16,448.78 L940.43,447.16 L940.70,445.53 L940.96,443.90 L941.22,442.27 L941.48,440.65 L941.74,439.02 L941.99,437.39 L942.24,435.77 L942.48,434.14 L942.73,432.51 L942.97,430.89 L943.20,429.26 L943.44,427.63 L943.67,426.00 L943.89,424.38 L944.12,422.75 L944.34,421.12 L944.56,419.50 L944.77,417.87 L944.98,416.24 L945.19,414.62 L945.40,412.99 L945.60,411.36 L945.79,409.74 L945.99,408.11 L946.18,406.48 L946.37,404.85 L946.56,403.23 L946.74,401.60 L946.92,399.97 L947.09,398.35 L947.26,396.72 L947.43,395.09 L947.59,393.47 L947.76,391.84 L947.91,390.21 L948.07,388.58 L948.22,386.96 L948.37,385.33 L948.51,383.70 L948.65,382.08 L948.79,380.45 L948.92,378.82 L949.05,377.19 L949.18,375.57 L949.30,373.94 L949.42,372.31 L949.53,370.69 L949.65,369.06 L949.76,367.43 L949.86,365.81 L949.96,364.18 L950.06,362.55 L950.15,360.93 L950.24,359.30 L950.33,357.67 L950.41,356.04 L950.49,354.42 L950.57,352.79 L950.64,351.16 L950.71,349.54 L950.77,347.91 L950.83,346.28 L950.89,344.65 L950.95,343.03 L951.00,341.40 L951.04,339.77 L951.09,338.15 L951.12,336.52 L951.16,334.89 L951.19,333.27 L951.22,331.64 L951.24,330.01 L951.26,328.38 L951.28,326.76 L951.29,325.13 L951.30,323.50 L951.31,321.88 L951.31,320.25 L951.31,318.62 L951.30,317.00 L951.29,315.37 L951.28,313.74 L951.26,312.12 L951.24,310.49 L951.22,308.86 L951.19,307.23 L951.16,305.61 L951.12,303.98 L951.09,302.35 L951.04,300.73 L951.00,299.10 L950.95,297.47 L950.89,295.85 L950.83,294.22 L950.77,292.59 L950.71,290.96 L950.64,289.34 L950.57,287.71 L950.49,286.08 L950.41,284.46 L950.33,282.83 L950.24,281.20 L950.15,279.57 L950.06,277.95 L949.96,276.32 L949.86,274.69 L949.76,273.07 L949.65,271.44 L949.53,269.81 L949.42,268.19 L949.30,266.56 L949.18,264.93 L949.05,263.31 L948.92,261.68 L948.79,260.05 L948.65,258.42 L948.51,256.80 L948.37,255.17 L948.22,253.54 L948.07,251.92 L947.91,250.29 L947.76,248.66 L947.59,247.03 L947.43,245.41 L947.26,243.78 L947.09,242.15 L946.92,240.53 L946.74,238.90 L946.56,237.27 L946.37,235.65 L946.18,234.02 L945.99,232.39 L945.79,230.76 L945.60,229.14 L945.40,227.51 L945.19,225.88 L944.98,224.26 L944.77,222.63 L944.56,221.00 L944.34,219.38 L944.12,217.75 L943.89,216.12 L943.67,214.50 L943.44,212.87 L943.20,211.24 L942.97,209.61 L942.73,207.99 L942.48,206.36 L942.24,204.73 L941.99,203.11 L941.74,201.48 L941.48,199.85 L941.22,198.22 L940.96,196.60 L940.70,194.97 L940.43,193.34 L940.16,191.72 L939.89,190.09 L939.62,188.46 L939.34,186.84 L939.06,185.21 L938.77,183.58 L938.49,181.96 L938.20,180.33 L937.91,178.70 L937.61,177.07 L937.31,175.45 L937.01,173.82 L936.71,172.19 L936.41,170.57 L936.10,168.94 L935.79,167.31 L935.48,165.69 L935.16,164.06 L934.84,162.43 L934.52,160.80 L934.20,159.18 L933.87,157.55 L933.55,155.92 L933.22,154.30 L932.88,152.67 L932.55,151.04 L932.21,149.41 L931.87,147.79 L931.53,146.16 L931.19,144.53 L930.84,142.91 L930.50,141.28 L930.15,139.65 L929.79,138.03 L929.44,136.40 L929.08,134.77 L928.73,133.15 L928.37,131.52 L928.00,129.89 L927.64,128.26 L927.27,126.64 L926.90,125.01 L926.54,123.38 L926.16,121.76 L925.79,120.13 L925.41,118.50 L925.04,116.88 L924.66,115.25 L924.28,113.62 L923.90,111.99 L923.51,110.37 L923.13,108.74 L922.74,107.11 L922.35,105.49 L921.96,103.86 L921.57,102.23 L921.18,100.60 L920.78,98.98 L920.39,97.35 L919.99,95.72 L919.59,94.10 L919.19,92.47 L918.79,90.84 L918.39,89.22 L917.99,87.59 L917.58,85.96 L917.18,84.34 L916.77,82.71 L916.36,81.08 L915.95,79.45 L915.54,77.83 L915.13,76.20 L914.72,74.57 L914.31,72.95 L913.89,71.32 L913.48,69.69 L913.06,68.06 L912.65,66.44 L912.23,64.81 L911.81,63.18 L911.39,61.56 L910.98,59.93 L910.56,58.30 L910.14,56.68 L909.71,55.05 L909.29,53.42 L908.87,51.80 L908.45,50.17 L908.03,48.54 L907.60,46.91 L907.18,45.29 L906.75,43.66 L906.33,42.03 L905.90,40.41 L905.48,38.78 L905.05,37.15 L904.63,35.52 L904.20,33.90 L903.78,32.27 L903.35,30.64 L902.93,29.02 L902.50,27.39"/>
<path d="M902.50,613.11 L902.50,611.48 L902.50,609.86 L902.50,608.23 L902.50,606.60 L902.50,604.98 L902.50,603.35 L902.50,601.72 L902.50,600.09 L902.50,598.47 L902.50,596.84 L902.50,595.21 L902.50,593.59 L902.50,591.96 L902.50,590.33 L902.50,588.70 L902.50,587.08 L902.50,585.45 L902.50,583.82 L902.50,582.20 L902.50,580.57 L902.50,578.94 L902.50,577.32 L902.50,575.69 L902.50,574.06 L902.50,572.43 L902.50,570.81 L902.50,569.18 L902.50,567.55 L902.50,565.93 L902.50,564.30 L902.50,562.67 L902.50,561.05 L902.50,559.42 L902.50,557.79 L902.50,556.16 L902.50,554.54 L902.50,552.91 L902.50,551.28 L902.50,549.66 L902.50,548.03 L902.50,546.40 L902.50,544.78 L902.50,543.15 L902.50,541.52 L902.50,539.89 L902.50,538.27 L902.50,536.64 L902.50,535.01 L902.50,533.39 L902.50,531.76 L902.50,530.13 L902.50,528.51 L902.50,526.88 L902.50,525.25 L902.50,523.62 L902.50,522.00 L902.50,520.37 L902.50,518.74 L902.50,517.12 L902.50,515.49 L902.50,513.86 L902.50,512.24 L902.50,510.61 L902.50,508.98 L902.50,507.36 L902.50,505.73 L902.50,504.10 L902.50,502.47 L902.50,500.85 L902.50,499.22 L902.50,497.59 L902.50,495.97 L902.50,494.34 L902.50,492.71 L902.50,491.09 L902.50,489.46 L902.50,487.83 L902.50,486.20 L902.50,484.58 L902.50,482.95 L902.50,481.32 L902.50,479.70 L902.50,478.07 L902.50,476.44 L902.50,474.81 L902.50,473.19 L902.50,471.56 L902.50,469.93 L902.50,468.31 L902.50,466.68 L902.50,465.05 L902.50,463.43 L902.50,461.80 L902.50,460.17 L902.50,458.54 L902.50,456.92 L902.50,455.29 L902.50,453.66 L902.50,452.04 L902.50,450.41 L902.50,448.78 L902.50,447.16 L902.50,445.53 L902.50,443.90 L902.50,442.27 L902.50,440.65 L902.50,439.02 L902.50,437.39 L902.50,435.77 L902.50,434.14 L902.50,432.51 L902.50,430.89 L902.50,429.26 L902.50,427.63 L902.50,426.00 L902.50,424.38 L902.50,422.75 L902.50,421.12 L902.50,419.50 L902.50,417.87 L902.50,416.24 L902.50,414.62 L902.50,412.99 L902.50,411.36 L902.50,409.74 L902.50,408.11 L902.50,406.48 L902.50,404.85 L902.50,403.23 L902.50,401.60 L902.50,399.97 L902.50,398.35 L902.50,396.72 L902.50,395.09 L902.50,393.47 L902.50,391.84 L902.50,390.21 L902.50,388.58 L902.50,386.96 L902.50,385.33 L902.50,383.70 L902.50,382.08 L902.50,380.45 L902.50,378.82 L902.50,377.19 L902.50,375.57 L902.50,373.94 L902.50,372.31 L902.50,370.69 L902.50,369.06 L902.50,367.43 L902.50,365.81 L902.50,364.18 L902.50,362.55 L902.50,360.93 L902.50,359.30 L902.50,357.67 L902.50,356.04 L902.50,354.42 L902.50,352.79 L902.50,351.16 L902.50,349.54 L902.50,347.91 L902.50,346.28 L902.50,344.65 L902.50,343.03 L902.50,341.40 L902.50,339.77 L902.50,338.15 L902.50,336.52 L902.50,334.89 L902.50,333.27 L902.50,331.64 L902.50,330.01 L902.50,328.38 L902.50,326.76 L902.50,325.13 L902.50,323.50 L902.50,321.88 L902.50,320.25 L902.50,318.62 L902.50,317.00 L902.50,315.37 L902.50,313.74 L902.50,312.12 L902.50,310.49 L902.50,308.86 L902.50,307.23 L902.50,305.61 L902.50,303.98 L902.50,302.35 L902.50,300.73 L902.50,299.10 L902.50,297.47 L902.50,295.85 L902.50,294.22 L902.50,292.59 L902.50,290.96 L902.50,289.34 L902.50,287.71 L902.50,286.08 L902.50,284.46 L902.50,282.83 L902.50,281.20 L902.50,279.57 L902.50,277.95 L902.50,276.32 L902.50,274.69 L902.50,273.07 L902.50,271.44 L902.50,269.81 L902.50,268.19 L902.50,266.56 L902.50,264.93 L902.50,263.31 L902.50,261.68 L902.50,260.05 L902.50,258.42 L902.50,256.80 L902.50,255.17 L902.50,253.54 L902.50,251.92 L902.50,250.29 L902.50,248.66 L902.50,247.03 L902.50,245.41 L902.50,243.78 L902.50,242.15 L902.50,240.53 L902.50,238.90 L902.50,237.27 L902.50,235.65 L902.50,234.02 L902.50,232.39 L902.50,230.76 L902.50,229.14 L902.50,227.51 L902.50,225.88 L902.50,224.26 L902.50,222.63 L902.50,221.00 L902.50,219.38 L902.50,217.75 L902.50,216.12 L902.50,214.50 L902.50,212.87 L902.50,211.24 L902.50,209.61 L902.50,207.99 L902.50,206.36 L902.50,204.73 L902.50,203.11 L902.50,201.48 L902.50,199.85 L902.50,198.22 L902.50,196.60 L902.50,194.97 L902.50,193.34 L902.50,191.72 L902.50,190.09 L902.50,188.46 L902.50,186.84 L902.50,185.21 L902.50,183.58 L902.50,181.96 L902.50,180.33 L902.50,178.70 L902.50,177.07 L902.50,175.45 L902.50,173.82 L902.50,172.19 L902.50,170.57 L902.50,168.94 L902.50,167.31 L902.50,165.69 L902.50,164.06 L902.50,162.43 L902.50,160.80 L902.50,159.18 L902.50,157.55 L902.50,155.92 L902.50,154.30 L902.50,152.67 L902.50,151.04 L902.50,149.41 L902.50,147.79 L902.50,146.16 L902.50,144.53 L902.50,142.91 L902.50,141.28 L902.50,139.65 L902.50,138.03 L902.50,136.40 L902.50,134.77 L902.50,133.15 L902.50,131.52 L902.50,129.89 L902.50,128.26 L902.50,126.64 L902.50,125.01 L902.50,123.38 L902.50,121.76 L902.50,120.13 L902.50,118.50 L902.50,116.88 L902.50,115.25 L902.50,113.62 L902.50,111.99 L902.50,110.37 L902.50,108.74 L902.50,107.11 L902.50,105.49 L902.50,103.86 L902.50,102.23 L902.50,100.60 L902.50,98.98 L902.50,97.35 L902.50,95.72 L902.50,94.10 L902.50,92.47 L902.50,90.84 L902.50,89.22 L902.50,87.59 L902.50,85.96 L902.50,84.34 L902.50,82.71 L902.50,81.08 L902.50,79.45 L902.50,77.83 L902.50,76.20 L902.50,74.57 L902.50,72.95 L902.50,71.32 L902.50,69.69 L902.50,68.06 L902.50,66.44 L902.50,64.81 L902.50,63.18 L902.50,61.56 L902.50,59.93 L902.50,58.30 L902.50,56.68 L902.50,55.05 L902.50,53.42 L902.50,51.80 L902.50,50.17 L902.50,48.54 L902.50,46.91 L902.50,45.29 L902.50,43.66 L902.50,42.03 L902.50,40.41 L902.50,38.78 L902.50,37.15 L902.50,35.52 L902.50,33.90 L902.50,32.27 L902.50,30.64 L902.50,29.02 L902.50,27.39"/>
<path d="M902.50,613.11 L902.07,611.48 L901.65,609.86 L901.22,608.23 L900.80,606.60 L900.37,604.98 L899.95,603.35 L899.52,601.72 L899.10,600.09 L898.67,598.47 L898.25,596.84 L897.82,595.21 L897.40,593.59 L896.97,591.96 L896.55,590.33 L896.13,588.70 L895.71,587.08 L895.29,585.45 L894.86,583.82 L894.44,582.20 L894.02,580.57 L893.61,578.94 L893.19,577.32 L892.77,575.69 L892.35,574.06 L891.94,572.43 L891.52,570.81 L891.11,569.18 L890.69,567.55 L890.28,565.93 L889.87,564.30 L889.46,562.67 L889.05,561.05 L888.64,559.42 L888.23,557.79 L887.82,556.16 L887.42,554.54 L887.01,552.91 L886.61,551.28 L886.21,549.66 L885.81,548.03 L885.41,546.40 L885.01,544.78 L884.61,543.15 L884.22,541.52 L883.82,539.89 L883.43,538.27 L883.04,536.64 L882.65,535.01 L882.26,533.39 L881.87,531.76 L881.49,530.13 L881.10,528.51 L880.72,526.88 L880.34,525.25 L879.96,523.62 L879.59,522.00 L879.21,520.37 L878.84,518.74 L878.46,517.12 L878.10,515.49 L877.73,513.86 L877.36,512.24 L877.00,510.61 L876.63,508.98 L876.27,507.36 L875.92,505.73 L875.56,504.10 L875.21,502.47 L874.85,500.85 L874.50,499.22 L874.16,497.59 L873.81,495.97 L873.47,494.34 L873.13,492.71 L872.79,491.09 L872.45,489.46 L872.12,487.83 L871.78,486.20 L871.45,484.58 L871.13,482.95 L870.80,481.32 L870.48,479.70 L870.16,478.07 L869.84,476.44 L869.52,474.81 L869.21,473.19 L868.90,471.56 L868.59,469.93 L868.29,468.31 L867.99,466.68 L867.69,465.05 L867.39,463.43 L867.09,461.80 L866.80,460.17 L866.51,458.54 L866.23,456.92 L865.94,455.29 L865.66,453.66 L865.38,452.04 L865.11,450.41 L864.84,448.78 L864.57,447.16 L864.30,445.53 L864.04,443.90 L863.78,442.27 L863.52,440.65 L863.26,439.02 L863.01,437.39 L862.76,435.77 L862.52,434.14 L862.27,432.51 L862.03,430.89 L861.80,429.26 L861.56,427.63 L861.33,426.00 L861.11,424.38 L860.88,422.75 L860.66,421.12 L860.44,419.50 L860.23,417.87 L860.02,416.24 L859.81,414.62 L859.60,412.99 L859.40,411.36 L859.21,409.74 L859.01,408.11 L858.82,406.48 L858.63,404.85 L858.44,403.23 L858.26,401.60 L858.08,399.97 L857.91,398.35 L857.74,396.72 L857.57,395.09 L857.41,393.47 L857.24,391.84 L857.09,390.21 L856.93,388.58 L856.78,386.96 L856.63,385.33 L856.49,383.70 L856.35,382.08 L856.21,380.45 L856.08,378.82 L855.95,377.19 L855.82,375.57 L855.70,373.94 L855.58,372.31 L855.47,370.69 L855.35,369.06 L855.24,367.43 L855.14,365.81 L855.04,364.18 L854.94,362.55 L854.85,360.93 L854.76,359.30 L854.67,357.67 L854.59,356.04 L854.51,354.42 L854.43,352.79 L854.36,351.16 L854.29,349.54 L854.23,347.91 L854.17,346.28 L854.11,344.65 L854.05,343.03 L854.00,341.40 L853.96,339.77 L853.91,338.15 L853.88,336.52 L853.84,334.89 L853.81,333.27 L853.78,331.64 L853.76,330.01 L853.74,328.38 L853.72,326.76 L853.71,325.13 L853.70,323.50 L853.69,321.88 L853.69,320.25 L853.69,318.62 L853.70,317.00 L853.71,315.37 L853.72,313.74 L853.74,312.12 L853.76,310.49 L853.78,308.86 L853.81,307.23 L853.84,305.61 L853.88,303.98 L853.91,302.35 L853.96,300.73 L854.00,299.10 L854.05,297.47 L854.11,295.85 L854.17,294.22 L854.23,292.59 L854.29,290.96 L854.36,289.34 L854.43,287.71 L854.51,286.08 L854.59,284.46 L854.67,282.83 L854.76,281.20 L854.85,279.57 L854.94,277.95 L855.04,276.32 L855.14,274.69 L855.24,273.07 L855.35,271.44 L855.47,269.81 L855.58,268.19 L855.70,266.56 L855.82,264.93 L855.95,263.31 L856.08,261.68 L856.21,260.05 L856.35,258.42 L856.49,256.80 L856.63,255.17 L856.78,253.54 L856.93,251.92 L857.09,250.29 L857.24,248.66 L857.41,247.03 L857.57,245.41 L857.74,243.78 L857.91,242.15 L858.08,240.53 L858.26,238.90 L858.44,237.27 L858.63,235.65 L858.82,234.02 L859.01,232.39 L859.21,230.76 L859.40,229.14 L859.60,227.51 L859.81,225.88 L860.02,224.26 L860.23,222.63 L860.44,221.00 L860.66,219.38 L860.88,217.75 L861.11,216.12 L861.33,214.50 L861.56,212.87 L861.80,211.24 L862.03,209.61 L862.27,207.99 L862.52,206.36 L862.76,204.73 L863.01,203.11 L863.26,201.48 L863.52,199.85 L863.78,198.22 L864.04,196.60 L864.30,194.97 L864.57,193.34 L864.84,191.72 L865.11,190.09 L865.38,188.46 L865.66,186.84 L865.94,185.21 L866.23,183.58 L866.51,181.96 L866.80,180.33 L867.09,178.70 L867.39,177.07 L867.69,175.45 L867.99,173.82 L868.29,172.19 L868.59,170.57 L868.90,168.94 L869.21,167.31 L869.52,165.69 L869.84,164.06 L870.16,162.43 L870.48,160.80 L870.80,159.18 L871.13,157.55 L871.45,155.92 L871.78,154.30 L872.12,152.67 L872.45,151.04 L872.79,149.41 L873.13,147.79 L873.47,146.16 L873.81,144.53 L874.16,142.91 L874.50,141.28 L874.85,139.65 L875.21,138.03 L875.56,136.40 L875.92,134.77 L876.27,133.15 L876.63,131.52 L877.00,129.89 L877.36,128.26 L877.73,126.64 L878.10,125.01 L878.46,123.38 L878.84,121.76 L879.21,120.13 L879.59,118.50 L879.96,116.88 L880.34,115.25 L880.72,113.62 L881.10,111.99 L881.49,110.37 L881.87,108.74 L882.26,107.11 L882.65,105.49 L883.04,103.86 L883.43,102.23 L883.82,100.60 L884.22,98.98 L884.61,97.35 L885.01,95.72 L885.41,94.10 L885.81,92.47 L886.21,90.84 L886.61,89.22 L887.01,87.59 L887.42,85.96 L887.82,84.34 L888.23,82.71 L888.64,81.08 L889.05,79.45 L889.46,77.83 L889.87,76.20 L890.28,74.57 L890.69,72.95 L891.11,71.32 L891.52,69.69 L891.94,68.06 L892.35,66.44 L892.77,64.81 L893.19,63.18 L893.61,61.56 L894.02,59.93 L894.44,58.30 L894.86,56.68 L895.29,55.05 L895.71,53.42 L896.13,51.80 L896.55,50.17 L896.97,48.54 L897.40,46.91 L897.82,45.29 L898.25,43.66 L898.67,42.03 L899.10,40.41 L899.52,38.78 L899.95,37.15 L900.37,35.52 L900.80,33.90 L901.22,32.27 L901.65,30.64 L902.07,29.02 L902.50,27.39"/>
<path d="M902.50,613.11 L901.65,611.48 L900.80,609.86 L899.94,608.23 L899.09,606.60 L898.24,604.98 L897.39,603.35 L896.54,601.72 L895.69,600.09 L894.84,598.47 L893.99,596.84 L893.14,595.21 L892.30,593.59 L891.45,591.96 L890.60,590.33 L889.76,588.70 L888.91,587.08 L888.07,585.45 L887.23,583.82 L886.39,582.20 L885.55,580.57 L884.71,578.94 L883.87,577.32 L883.04,575.69 L882.20,574.06 L881.37,572.43 L880.54,570.81 L879.71,569.18 L878.88,567.55 L878.06,565.93 L877.23,564.30 L876.41,562.67 L875.59,561.05 L874.77,559.42 L873.96,557.79 L873.15,556.16 L872.33,554.54 L871.52,552.91 L870.72,551.28 L869.91,549.66 L869.11,548.03 L868.31,546.40 L867.52,544.78 L866.72,543.15 L865.93,541.52 L865.14,539.89 L864.36,538.27 L863.57,536.64 L862.79,535.01 L862.02,533.39 L861.24,531.76 L860.47,530.13 L859.71,528.51 L858.94,526.88 L858.18,525.25 L857.42,523.62 L856.67,522.00 L855.92,520.37 L855.17,518.74 L854.43,517.12 L853.69,515.49 L852.95,513.86 L852.22,512.24 L851.49,510.61 L850.77,508.98 L850.05,507.36 L849.33,505.73 L848.62,504.10 L847.91,502.47 L847.21,500.85 L846.51,499.22 L845.81,497.59 L845.12,495.97 L844.43,494.34 L843.75,492.71 L843.07,491.09 L842.40,489.46 L841.73,487.83 L841.07,486.20 L840.41,484.58 L839.75,482.95 L839.10,481.32 L838.46,479.70 L837.82,478.07 L837.18,476.44 L836.55,474.81 L835.92,473.19 L835.30,471.56 L834.69,469.93 L834.08,468.31 L833.47,466.68 L832.87,465.05 L832.28,463.43 L831.69,461.80 L831.11,460.17 L830.53,458.54 L829.95,456.92 L829.39,455.29 L828.83,453.66 L828.27,452.04 L827.72,450.41 L827.17,448.78 L826.64,447.16 L826.10,445.53 L825.57,443.90 L825.05,442.27 L824.54,440.65 L824.03,439.02 L823.52,437.39 L823.03,435.77 L822.53,434.14 L822.05,432.51 L821.57,430.89 L821.10,429.26 L820.63,427.63 L820.17,426.00 L819.71,424.38 L819.27,422.75 L818.82,421.12 L818.39,419.50 L817.96,417.87 L817.54,416.24 L817.12,414.62 L816.71,412.99 L816.31,411.36 L815.91,409.74 L815.52,408.11 L815.14,406.48 L814.76,404.85 L814.39,403.23 L814.03,401.60 L813.67,399.97 L813.32,398.35 L812.98,396.72 L812.64,395.09 L812.31,393.47 L811.99,391.84 L811.67,390.21 L811.36,388.58 L811.06,386.96 L810.77,385.33 L810.48,383.70 L810.20,382.08 L809.92,380.45 L809.66,378.82 L809.40,377.19 L809.15,375.57 L808.90,373.94 L808.66,372.31 L808.43,370.69 L808.21,369.06 L807.99,367.43 L807.78,365.81 L807.58,364.18 L807.38,362.55 L807.19,360.93 L807.01,359.30 L806.84,357.67 L806.67,356.04 L806.51,354.42 L806.36,352.79 L806.22,351.16 L806.08,349.54 L805.95,347.91 L805.83,346.28 L805.72,344.65 L805.61,343.03 L805.51,341.40 L805.41,339.77 L805.33,338.15 L805.25,336.52 L805.18,334.89 L805.12,333.27 L805.06,331.64 L805.01,330.01 L804.97,328.38 L804.94,326.76 L804.91,325.13 L804.89,323.50 L804.88,321.88 L804.88,320.25 L804.88,318.62 L804.89,317.00 L804.91,315.37 L804.94,313.74 L804.97,312.12 L805.01,310.49 L805.06,308.86 L805.12,307.23 L805.18,305.61 L805.25,303.98 L805.33,302.35 L805.41,300.73 L805.51,299.10 L805.61,297.47 L805.72,295.85 L805.83,294.22 L805.95,292.59 L806.08,290.96 L806.22,289.34 L806.36,287.71 L806.51,286.08 L806.67,284.46 L806.84,282.83 L807.01,281.20 L807.19,279.57 L807.38,277.95 L807.58,276.32 L807.78,274.69 L807.99,273.07 L808.21,271.44 L808.43,269.81 L808.66,268.19 L808.90,266.56 L809.15,264.93 L809.40,263.31 L809.66,261.68 L809.92,260.05 L810.20,258.42 L810.48,256.80 L810.77,255.17 L811.06,253.54 L811.36,251.92 L811.67,250.29 L811.99,248.66 L812.31,247.03 L812.64,245.41 L812.98,243.78 L813.32,242.15 L813.67,240.53 L814.03,238.90 L814.39,237.27 L814.76,235.65 L815.14,234.02 L815.52,232.39 L815.91,230.76 L816.31,229.14 L816.71,227.51 L817.12,225.88 L817.54,224.26 L817.96,222.63 L818.39,221.00 L818.82,219.38 L819.27,217.75 L819.71,216.12 L820.17,214.50 L820.63,212.87 L821.10,211.24 L821.57,209.61 L822.05,207.99 L822.53,206.36 L823.03,204.73 L823.52,203.11 L824.03,201.48 L824.54,199.85 L825.05,198.22 L825.57,196.60 L826.10,194.97 L826.64,193.34 L827.17,191.72 L827.72,190.09 L828.27,188.46 L828.83,186.84 L829.39,185.21 L829.95,183.58 L830.53,181.96 L831.11,180.33 L831.69,178.70 L832.28,177.07 L832.87,175.45 L833.47,173.82 L834.08,172.19 L834.69,170.57 L835.30,168.94 L835.92,167.31 L836.55,165.69 L837.18,164.06 L837.82,162.43 L838.46,160.80 L839.10,159.18 L839.75,157.55 L840.41,155.92 L841.07,154.30 L841.73,152.67 L842.40,151.04 L843.07,149.41 L843.75,147.79 L844.43,146.16 L845.12,144.53 L845.81,142.91 L846.51,141.28 L847.21,139.65 L847.91,138.03 L848.62,136.40 L849.33,134.77 L850.05,133.15 L850.77,131.52 L851.49,129.89 L852.22,128.26 L852.95,126.64 L853.69,125.01 L854.43,123.38 L855.17,121.76 L855.92,120.13 L856.67,118.50 L857.42,116.88 L858.18,115.25 L858.94,113.62 L859.71,111.99 L860.47,110.37 L861.24,108.74 L862.02,107.11 L862.79,105.49 L863.57,103.86 L864.36,102.23 L865.14,100.60 L865.93,98.98 L866.72,97.35 L867.52,95.72 L868.31,94.10 L869.11,92.47 L869.91,90.84 L870.72,89.22 L871.52,87.59 L872.33,85.96 L873.15,84.34 L873.96,82.71 L874.77,81.08 L875.59,79.45 L876.41,77.83 L877.23,76.20 L878.06,74.57 L878.88,72.95 L879.71,71.32 L880.54,69.69 L881.37,68.06 L882.20,66.44 L883.04,64.81 L883.87,63.18 L884.71,61.56 L885.55,59.93 L886.39,58.30 L887.23,56.68 L888.07,55.05 L888.91,53.42 L889.76,51.80 L890.60,50.17 L891.45,48.54 L892.30,46.91 L893.14,45.29 L893.99,43.66 L894.84,42.03 L895.69,40.41 L896.54,38.78 L897.39,37.15 L898.24,35.52 L899.09,33.90 L899.94,32.27 L900.80,30.64 L901.65,29.02 L902.50,27.39"/>
<path d="M902.50,613.11 L901.22,611.48 L899.94,609.86 L898.67,608.23 L897.39,606.60 L896.11,604.98 L894.84,603.35 L893.56,601.72 L892.29,600.09 L891.01,598.47 L889.74,596.84 L888.47,595.21 L887.19,593.59 L885.92,591.96 L884.65,590.33 L883.39,588.70 L882.12,587.08 L880.86,585.45 L879.59,583.82 L878.33,582.20 L877.07,580.57 L875.82,578.94 L874.56,577.32 L873.31,575.69 L872.06,574.06 L870.81,572.43 L869.56,570.81 L868.32,569.18 L867.08,567.55 L865.84,565.93 L864.60,564.30 L863.37,562.67 L862.14,561.05 L860.91,559.42 L859.69,557.79 L858.47,556.16 L857.25,554.54 L856.04,552.91 L854.83,551.28 L853.62,549.66 L852.42,548.03 L851.22,546.40 L850.02,544.78 L848.83,543.15 L847.65,541.52 L846.46,539.89 L845.29,538.27 L844.11,536.64 L842.94,535.01 L841.78,533.39 L840.62,531.76 L839.46,530.13 L838.31,528.51 L837.16,526.88 L836.02,525.25 L834.89,523.62 L833.76,522.00 L832.63,520.37 L831.51,518.74 L830.39,517.12 L829.28,515.49 L828.18,513.86 L827.08,512.24 L825.99,510.61 L824.90,508.98 L823.82,507.36 L822.75,505.73 L821.68,504.10 L820.62,502.47 L819.56,500.85 L818.51,499.22 L817.47,497.59 L816.43,495.97 L815.40,494.34 L814.38,492.71 L813.36,491.09 L812.35,489.46 L811.35,487.83 L810.35,486.20 L809.36,484.58 L808.38,482.95 L807.40,481.32 L806.43,479.70 L805.47,478.07 L804.52,476.44 L803.57,474.81 L802.63,473.19 L801.70,471.56 L800.78,469.93 L799.87,468.31 L798.96,466.68 L798.06,465.05 L797.17,463.43 L796.28,461.80 L795.41,460.17 L794.54,458.54 L793.68,456.92 L792.83,455.29 L791.99,453.66 L791.15,452.04 L790.33,450.41 L789.51,448.78 L788.70,447.16 L787.90,445.53 L787.11,443.90 L786.33,442.27 L785.56,440.65 L784.79,439.02 L784.04,437.39 L783.29,435.77 L782.55,434.14 L781.82,432.51 L781.10,430.89 L780.39,429.26 L779.69,427.63 L779.00,426.00 L778.32,424.38 L777.65,422.75 L776.98,421.12 L776.33,419.50 L775.69,417.87 L775.05,416.24 L774.43,414.62 L773.81,412.99 L773.21,411.36 L772.62,409.74 L772.03,408.11 L771.45,406.48 L770.89,404.85 L770.33,403.23 L769.79,401.60 L769.25,399.97 L768.73,398.35 L768.21,396.72 L767.71,395.09 L767.22,393.47 L766.73,391.84 L766.26,390.21 L765.80,388.58 L765.34,386.96 L764.90,385.33 L764.47,383.70 L764.05,382.08 L763.64,380.45 L763.24,378.82 L762.85,377.19 L762.47,375.57 L762.10,373.94 L761.74,372.31 L761.40,370.69 L761.06,369.06 L760.73,367.43 L760.42,365.81 L760.12,364.18 L759.82,362.55 L759.54,360.93 L759.27,359.30 L759.01,357.67 L758.76,356.04 L758.52,354.42 L758.29,352.79 L758.08,351.16 L757.87,349.54 L757.68,347.91 L757.50,346.28 L757.32,344.65 L757.16,343.03 L757.01,341.40 L756.87,339.77 L756.74,338.15 L756.63,336.52 L756.52,334.89 L756.43,333.27 L756.34,331.64 L756.27,330.01 L756.21,328.38 L756.16,326.76 L756.12,325.13 L756.09,323.50 L756.08,321.88 L756.07,320.25 L756.08,318.62 L756.09,317.00 L756.12,315.37 L756.16,313.74 L756.21,312.12 L756.27,310.49 L756.34,308.86 L756.43,307.23 L756.52,305.61 L756.63,303.98 L756.74,302.35 L756.87,300.73 L757.01,299.10 L757.16,297.47 L757.32,295.85 L757.50,294.22 L757.68,292.59 L757.87,290.96 L758.08,289.34 L758.29,287.71 L758.52,286.08 L758.76,284.46 L759.01,282.83 L759.27,281.20 L759.54,279.57 L759.82,277.95 L760.12,276.32 L760.42,274.69 L760.73,273.07 L761.06,271.44 L761.40,269.81 L761.74,268.19 L762.10,266.56 L762.47,264.93 L762.85,263.31 L763.24,261.68 L763.64,260.05 L764.05,258.42 L764.47,256.80 L764.90,255.17 L765.34,253.54 L765.80,251.92 L766.26,250.29 L766.73,248.66 L767.22,247.03 L767.71,245.41 L768.21,243.78 L768.73,242.15 L769.25,240.53 L769.79,238.90 L770.33,237.27 L770.89,235.65 L771.45,234.02 L772.03,232.39 L772.62,230.76 L773.21,229.14 L773.81,227.51 L774.43,225.88 L775.05,224.26 L775.69,222.63 L776.33,221.00 L776.98,219.38 L777.65,217.75 L778.32,216.12 L779.00,214.50 L779.69,212.87 L780.39,211.24 L781.10,209.61 L781.82,207.99 L782.55,206.36 L783.29,204.73 L784.04,203.11 L784.79,201.48 L785.56,199.85 L786.33,198.22 L787.11,196.60 L787.90,194.97 L788.70,193.34 L789.51,191.72 L790.33,190.09 L791.15,188.46 L791.99,186.84 L792.83,185.21 L793.68,183.58 L794.54,181.96 L795.41,180.33 L796.28,178.70 L797.17,177.07 L798.06,175.45 L798.96,173.82 L799.87,172.19 L800.78,170.57 L801.70,168.94 L802.63,167.31 L803.57,165.69 L804.52,164.06 L805.47,162.43 L806.43,160.80 L807.40,159.18 L808.38,157.55 L809.36,155.92 L810.35,154.30 L811.35,152.67 L812.35,151.04 L813.36,149.41 L814.38,147.79 L815.40,146.16 L816.43,144.53 L817.47,142.91 L818.51,141.28 L819.56,139.65 L820.62,138.03 L821.68,136.40 L822.75,134.77 L823.82,133.15 L824.90,131.52 L825.99,129.89 L827.08,128.26 L828.18,126.64 L829.28,125.01 L830.39,123.38 L831.51,121.76 L832.63,120.13 L833.76,118.50 L834.89,116.88 L836.02,115.25 L837.16,113.62 L838.31,111.99 L839.46,110.37 L840.62,108.74 L841.78,107.11 L842.94,105.49 L844.11,103.86 L845.29,102.23 L846.46,100.60 L847.65,98.98 L848.83,97.35 L850.02,95.72 L851.22,94.10 L852.42,92.47 L853.62,90.84 L854.83,89.22 L856.04,87.59 L857.25,85.96 L858.47,84.34 L859.69,82.71 L860.91,81.08 L862.14,79.45 L863.37,77.83 L864.60,76.20 L865.84,74.57 L867.08,72.95 L868.32,71.32 L869.56,69.69 L870.81,68.06 L872.06,66.44 L873.31,64.81 L874.56,63.18 L875.82,61.56 L877.07,59.93 L878.33,58.30 L879.59,56.68 L880.86,55.05 L882.12,53.42 L883.39,51.80 L884.65,50.17 L885.92,48.54 L887.19,46.91 L888.47,45.29 L889.74,43.66 L891.01,42.03 L892.29,40.41 L893.56,38.78 L894.84,37.15 L896.11,35.52 L897.39,33.90 L898.67,32.27 L899.94,30.64 L901.22,29.02 L902.50,27.39"/>
<path d="M902.50,613.11 L900.80,611.48 L899.09,609.86 L897.39,608.23 L895.69,606.60 L893.98,604.98 L892.28,603.35 L890.58,601.72 L888.88,600.09 L887.18,598.47 L885.48,596.84 L883.79,595.21 L882.09,593.59 L880.40,591.96 L878.71,590.33 L877.02,588.70 L875.33,587.08 L873.64,585.45 L871.96,583.82 L870.28,582.20 L868.60,580.57 L866.92,578.94 L865.25,577.32 L863.58,575.69 L861.91,574.06 L860.24,572.43 L858.58,570.81 L856.92,569.18 L855.27,567.55 L853.62,565.93 L851.97,564.30 L850.32,562.67 L848.68,561.05 L847.05,559.42 L845.42,557.79 L843.79,556.16 L842.17,554.54 L840.55,552.91 L838.94,551.28 L837.33,549.66 L835.72,548.03 L834.13,546.40 L832.53,544.78 L830.94,543.15 L829.36,541.52 L827.78,539.89 L826.21,538.27 L824.65,536.64 L823.09,535.01 L821.54,533.39 L819.99,531.76 L818.45,530.13 L816.91,528.51 L815.38,526.88 L813.86,525.25 L812.35,523.62 L810.84,522.00 L809.34,520.37 L807.85,518.74 L806.36,517.12 L804.88,515.49 L803.41,513.86 L801.94,512.24 L800.49,510.61 L799.04,508.98 L797.60,507.36 L796.16,505.73 L794.74,504.10 L793.32,502.47 L791.91,500.85 L790.51,499.22 L789.12,497.59 L787.74,495.97 L786.37,494.34 L785.00,492.71 L783.65,491.09 L782.30,489.46 L780.96,487.83 L779.63,486.20 L778.31,484.58 L777.00,482.95 L775.70,481.32 L774.41,479.70 L773.13,478.07 L771.86,476.44 L770.60,474.81 L769.35,473.19 L768.11,471.56 L766.87,469.93 L765.65,468.31 L764.44,466.68 L763.24,465.05 L762.06,463.43 L760.88,461.80 L759.71,460.17 L758.55,458.54 L757.41,456.92 L756.27,455.29 L755.15,453.66 L754.04,452.04 L752.94,450.41 L751.85,448.78 L750.77,447.16 L749.70,445.53 L748.65,443.90 L747.61,442.27 L746.57,440.65 L745.55,439.02 L744.55,437.39 L743.55,435.77 L742.57,434.14 L741.60,432.51 L740.64,430.89 L739.69,429.26 L738.76,427.63 L737.84,426.00 L736.93,424.38 L736.03,422.75 L735.15,421.12 L734.28,419.50 L733.42,417.87 L732.57,416.24 L731.74,414.62 L730.92,412.99 L730.11,411.36 L729.32,409.74 L728.54,408.11 L727.77,406.48 L727.02,404.85 L726.28,403.23 L725.55,401.60 L724.84,399.97 L724.14,398.35 L723.45,396.72 L722.78,395.09 L722.12,393.47 L721.48,391.84 L720.85,390.21 L720.23,388.58 L719.62,386.96 L719.03,385.33 L718.46,383.70 L717.90,382.08 L717.35,380.45 L716.82,378.82 L716.30,377.19 L715.79,375.57 L715.30,373.94 L714.82,372.31 L714.36,370.69 L713.91,369.06 L713.48,367.43 L713.06,365.81 L712.65,364.18 L712.26,362.55 L711.89,360.93 L711.53,359.30 L711.18,357.67 L710.85,356.04 L710.53,354.42 L710.23,352.79 L709.94,351.16 L709.66,349.54 L709.40,347.91 L709.16,346.28 L708.93,344.65 L708.72,343.03 L708.52,341.40 L708.33,339.77 L708.16,338.15 L708.00,336.52 L707.86,334.89 L707.74,333.27 L707.62,331.64 L707.53,330.01 L707.45,328.38 L707.38,326.76 L707.33,325.13 L707.29,323.50 L707.27,321.88 L707.26,320.25 L707.27,318.62 L707.29,317.00 L707.33,315.37 L707.38,313.74 L707.45,312.12 L707.53,310.49 L707.62,308.86 L707.74,307.23 L707.86,305.61 L708.00,303.98 L708.16,302.35 L708.33,300.73 L708.52,299.10 L708.72,297.47 L708.93,295.85 L709.16,294.22 L709.40,292.59 L709.66,290.96 L709.94,289.34 L710.23,287.71 L710.53,286.08 L710.85,284.46 L711.18,282.83 L711.53,281.20 L711.89,279.57 L712.26,277.95 L712.65,276.32 L713.06,274.69 L713.48,273.07 L713.91,271.44 L714.36,269.81 L714.82,268.19 L715.30,266.56 L715.79,264.93 L716.30,263.31 L716.82,261.68 L717.35,260.05 L717.90,258.42 L718.46,256.80 L719.03,255.17 L719.62,253.54 L720.23,251.92 L720.85,250.29 L721.48,248.66 L722.12,247.03 L722.78,245.41 L723.45,243.78 L724.14,242.15 L724.84,240.53 L725.55,238.90 L726.28,237.27 L727.02,235.65 L727.77,234.02 L728.54,232.39 L729.32,230.76 L730.11,229.14 L730.92,227.51 L731.74,225.88 L732.57,224.26 L733.42,222.63 L734.28,221.00 L735.15,219.38 L736.03,217.75 L736.93,216.12 L737.84,214.50 L738.76,212.87 L739.69,211.24 L740.64,209.61 L741.60,207.99 L742.57,206.36 L743.55,204.73 L744.55,203.11 L745.55,201.48 L746.57,199.85 L747.61,198.22 L748.65,196.60 L749.70,194.97 L750.77,193.34 L751.85,191.72 L752.94,190.09 L754.04,188.46 L755.15,186.84 L756.27,185.21 L757.41,183.58 L758.55,181.96 L759.71,180.33 L760.88,178.70 L762.06,177.07 L763.24,175.45 L764.44,173.82 L765.65,172.19 L766.87,170.57 L768.11,168.94 L769.35,167.31 L770.60,165.69 L771.86,164.06 L773.13,162.43 L774.41,160.80 L775.70,159.18 L777.00,157.55 L778.31,155.92 L779.63,154.30 L780.96,152.67 L782.30,151.04 L783.65,149.41 L785.00,147.79 L786.37,146.16 L787.74,144.53 L789.12,142.91 L790.51,141.28 L791.91,139.65 L793.32,138.03 L794.74,136.40 L796.16,134.77 L797.60,133.15 L799.04,131.52 L800.49,129.89 L801.94,128.26 L803.41,126.64 L804.88,125.01 L806.36,123.38 L807.85,121.76 L809.34,120.13 L810.84,118.50 L812.35,116.88 L813.86,115.25 L815.38,113.62 L816.91,111.99 L818.45,110.37 L819.99,108.74 L821.54,107.11 L823.09,105.49 L824.65,103.86 L826.21,102.23 L827.78,100.60 L829.36,98.98 L830.94,97.35 L832.53,95.72 L834.13,94.10 L835.72,92.47 L837.33,90.84 L838.94,89.22 L840.55,87.59 L842.17,85.96 L843.79,84.34 L845.42,82.71 L847.05,81.08 L848.68,79.45 L850.32,77.83 L851.97,76.20 L853.62,74.57 L855.27,72.95 L856.92,71.32 L858.58,69.69 L860.24,68.06 L861.91,66.44 L863.58,64.81 L865.25,63.18 L866.92,61.56 L868.60,59.93 L870.28,58.30 L871.96,56.68 L873.64,55.05 L875.33,53.42 L877.02,51.80 L878.71,50.17 L880.40,48.54 L882.09,46.91 L883.79,45.29 L885.48,43.66 L887.18,42.03 L888.88,40.41 L890.58,38.78 L892.28,37.15 L893.98,35.52 L895.69,33.90 L897.39,32.27 L899.09,30.64 L900.80,29.02 L902.50,27.39"/>
<path d="M902.50,613.11 L900.37,611.48 L898.24,609.86 L896.11,608.23 L893.98,606.60 L891.85,604.98 L889.73,603.35 L887.60,601.72 L885.48,600.09 L883.35,598.47 L881.23,596.84 L879.11,595.21 L876.99,593.59 L874.87,591.96 L872.76,590.33 L870.65,588.70 L868.53,587.08 L866.43,585.45 L864.32,583.82 L862.22,582.20 L860.12,580.57 L858.03,578.94 L855.93,577.32 L853.84,575.69 L851.76,574.06 L849.68,572.43 L847.60,570.81 L845.53,569.18 L843.46,567.55 L841.39,565.93 L839.34,564.30 L837.28,562.67 L835.23,561.05 L833.19,559.42 L831.15,557.79 L829.11,556.16 L827.08,554.54 L825.06,552.91 L823.05,551.28 L821.03,549.66 L819.03,548.03 L817.03,546.40 L815.04,544.78 L813.06,543.15 L811.08,541.52 L809.11,539.89 L807.14,538.27 L805.19,536.64 L803.24,535.01 L801.29,533.39 L799.36,531.76 L797.43,530.13 L795.52,528.51 L793.61,526.88 L791.70,525.25 L789.81,523.62 L787.93,522.00 L786.05,520.37 L784.18,518.74 L782.32,517.12 L780.47,515.49 L778.64,513.86 L776.80,512.24 L774.98,510.61 L773.17,508.98 L771.37,507.36 L769.58,505.73 L767.80,504.10 L766.03,502.47 L764.27,500.85 L762.52,499.22 L760.78,497.59 L759.05,495.97 L757.33,494.34 L755.63,492.71 L753.93,491.09 L752.25,489.46 L750.58,487.83 L748.91,486.20 L747.27,484.58 L745.63,482.95 L744.00,481.32 L742.39,479.70 L740.79,478.07 L739.20,476.44 L737.62,474.81 L736.06,473.19 L734.51,471.56 L732.97,469.93 L731.44,468.31 L729.93,466.68 L728.43,465.05 L726.95,463.43 L725.47,461.80 L724.01,460.17 L722.57,458.54 L721.14,456.92 L719.72,455.29 L718.31,453.66 L716.92,452.04 L715.55,450.41 L714.19,448.78 L712.84,447.16 L711.50,445.53 L710.19,443.90 L708.88,442.27 L707.59,440.65 L706.32,439.02 L705.06,437.39 L703.82,435.77 L702.59,434.14 L701.37,432.51 L700.17,430.89 L698.99,429.26 L697.82,427.63 L696.67,426.00 L695.53,424.38 L694.41,422.75 L693.31,421.12 L692.22,419.50 L691.15,417.87 L690.09,416.24 L689.05,414.62 L688.02,412.99 L687.02,411.36 L686.03,409.74 L685.05,408.11 L684.09,406.48 L683.15,404.85 L682.22,403.23 L681.32,401.60 L680.42,399.97 L679.55,398.35 L678.69,396.72 L677.85,395.09 L677.03,393.47 L676.22,391.84 L675.43,390.21 L674.66,388.58 L673.91,386.96 L673.17,385.33 L672.45,383.70 L671.75,382.08 L671.06,380.45 L670.39,378.82 L669.75,377.19 L669.11,375.57 L668.50,373.94 L667.90,372.31 L667.33,370.69 L666.77,369.06 L666.22,367.43 L665.70,365.81 L665.19,364.18 L664.70,362.55 L664.23,360.93 L663.78,359.30 L663.35,357.67 L662.93,356.04 L662.54,354.42 L662.16,352.79 L661.80,351.16 L661.45,349.54 L661.13,347.91 L660.83,346.28 L660.54,344.65 L660.27,343.03 L660.02,341.40 L659.79,339.77 L659.57,338.15 L659.38,336.52 L659.20,334.89 L659.04,333.27 L658.91,331.64 L658.78,330.01 L658.68,328.38 L658.60,326.76 L658.53,325.13 L658.49,323.50 L658.46,321.88 L658.45,320.25 L658.46,318.62 L658.49,317.00 L658.53,315.37 L658.60,313.74 L658.68,312.12 L658.78,310.49 L658.91,308.86 L659.04,307.23 L659.20,305.61 L659.38,303.98 L659.57,302.35 L659.79,300.73 L660.02,299.10 L660.27,297.47 L660.54,295.85 L660.83,294.22 L661.13,292.59 L661.45,290.96 L661.80,289.34 L662.16,287.71 L662.54,286.08 L662.93,284.46 L663.35,282.83 L663.78,281.20 L664.23,279.57 L664.70,277.95 L665.19,276.32 L665.70,274.69 L666.22,273.07 L666.77,271.44 L667.33,269.81 L667.90,268.19 L668.50,266.56 L669.11,264.93 L669.75,263.31 L670.39,261.68 L671.06,260.05 L671.75,258.42 L672.45,256.80 L673.17,255.17 L673.91,253.54 L674.66,251.92 L675.43,250.29 L676.22,248.66 L677.03,247.03 L677.85,245.41 L678.69,243.78 L679.55,242.15 L680.42,240.53 L681.32,238.90 L682.22,237.27 L683.15,235.65 L684.09,234.02 L685.05,232.39 L686.03,230.76 L687.02,229.14 L688.02,227.51 L689.05,225.88 L690.09,224.26 L691.15,222.63 L692.22,221.00 L693.31,219.38 L694.41,217.75 L695.53,216.12 L696.67,214.50 L697.82,212.87 L698.99,211.24 L700.17,209.61 L701.37,207.99 L702.59,206.36 L703.82,204.73 L705.06,203.11 L706.32,201.48 L707.59,199.85 L708.88,198.22 L710.19,196.60 L711.50,194.97 L712.84,193.34 L714.19,191.72 L715.55,190.09 L716.92,188.46 L718.31,186.84 L719.72,185.21 L721.14,183.58 L722.57,181.96 L724.01,180.33 L725.47,178.70 L726.95,177.07 L728.43,175.45 L729.93,173.82 L731.44,172.19 L732.97,170.57 L734.51,168.94 L736.06,167.31 L737.62,165.69 L739.20,164.06 L740.79,162.43 L742.39,160.80 L744.00,159.18 L745.63,157.55 L747.27,155.92 L748.91,154.30 L750.58,152.67 L752.25,151.04 L753.93,149.41 L755.63,147.79 L757.33,146.16 L759.05,144.53 L760.78,142.91 L762.52,141.28 L764.27,139.65 L766.03,138.03 L767.80,136.40 L769.58,134.77 L771.37,133.15 L773.17,131.52 L774.98,129.89 L776.80,128.26 L778.64,126.64 L780.47,125.01 L782.32,123.38 L784.18,121.76 L786.05,120.13 L787.93,118.50 L789.81,116.88 L791.70,115.25 L793.61,113.62 L795.52,111.99 L797.43,110.37 L799.36,108.74 L801.29,107.11 L803.24,105.49 L805.19,103.86 L807.14,102.23 L809.11,100.60 L811.08,98.98 L813.06,97.35 L815.04,95.72 L817.03,94.10 L819.03,92.47 L821.03,90.84 L823.05,89.22 L825.06,87.59 L827.08,85.96 L829.11,84.34 L831.15,82.71 L833.19,81.08 L835.23,79.45 L837.28,77.83 L839.34,76.20 L841.39,74.57 L843.46,72.95 L845.53,71.32 L847.60,69.69 L849.68,68.06 L851.76,66.44 L853.84,64.81 L855.93,63.18 L858.03,61.56 L860.12,59.93 L862.22,58.30 L864.32,56.68 L866.43,55.05 L868.53,53.42 L870.65,51.80 L872.76,50.17 L874.87,48.54 L876.99,46.91 L879.11,45.29 L881.23,43.66 L883.35,42.03 L885.48,40.41 L887.60,38.78 L889.73,37.15 L891.85,35.52 L893.98,33.90 L896.11,32.27 L898.24,30.64 L900.37,29.02 L902.50,27.39"/>
<path d="M902.50,613.11 L899.94,611.48 L897.39,609.86 L894.83,608.23 L892.28,606.60 L889.73,604.98 L887.17,603.35 L884.62,601.72 L882.07,600.09 L879.52,598.47 L876.98,596.84 L874.43,595.21 L871.89,593.59 L869.35,591.96 L866.81,590.33 L864.27,588.70 L861.74,587.08 L859.21,585.45 L856.69,583.82 L854.16,582.20 L851.65,580.57 L849.13,578.94 L846.62,577.32 L844.11,575.69 L841.61,574.06 L839.11,572.43 L836.62,570.81 L834.13,569.18 L831.65,567.55 L829.17,565.93 L826.70,564.30 L824.24,562.67 L821.78,561.05 L819.32,559.42 L816.88,557.79 L814.44,556.16 L812.00,554.54 L809.57,552.91 L807.15,551.28 L804.74,549.66 L802.34,548.03 L799.94,546.40 L797.55,544.78 L795.17,543.15 L792.79,541.52 L790.43,539.89 L788.07,538.27 L785.72,536.64 L783.38,535.01 L781.05,533.39 L778.73,531.76 L776.42,530.13 L774.12,528.51 L771.83,526.88 L769.54,525.25 L767.27,523.62 L765.01,522.00 L762.76,520.37 L760.52,518.74 L758.29,517.12 L756.07,515.49 L753.86,513.86 L751.67,512.24 L749.48,510.61 L747.31,508.98 L745.15,507.36 L743.00,505.73 L740.86,504.10 L738.73,502.47 L736.62,500.85 L734.52,499.22 L732.44,497.59 L730.36,495.97 L728.30,494.34 L726.25,492.71 L724.22,491.09 L722.20,489.46 L720.19,487.83 L718.20,486.20 L716.22,484.58 L714.25,482.95 L712.30,481.32 L710.37,479.70 L708.45,478.07 L706.54,476.44 L704.65,474.81 L702.77,473.19 L700.91,471.56 L699.06,469.93 L697.23,468.31 L695.42,466.68 L693.62,465.05 L691.83,463.43 L690.07,461.80 L688.32,460.17 L686.58,458.54 L684.86,456.92 L683.16,455.29 L681.48,453.66 L679.81,452.04 L678.16,450.41 L676.52,448.78 L674.91,447.16 L673.31,445.53 L671.72,443.90 L670.16,442.27 L668.61,440.65 L667.08,439.02 L665.57,437.39 L664.08,435.77 L662.60,434.14 L661.15,432.51 L659.71,430.89 L658.29,429.26 L656.89,427.63 L655.50,426.00 L654.14,424.38 L652.80,422.75 L651.47,421.12 L650.16,419.50 L648.88,417.87 L647.61,416.24 L646.36,414.62 L645.13,412.99 L643.92,411.36 L642.73,409.74 L641.56,408.11 L640.41,406.48 L639.28,404.85 L638.17,403.23 L637.08,401.60 L636.01,399.97 L634.96,398.35 L633.93,396.72 L632.92,395.09 L631.93,393.47 L630.96,391.84 L630.02,390.21 L629.09,388.58 L628.19,386.96 L627.30,385.33 L626.44,383.70 L625.60,382.08 L624.77,380.45 L623.97,378.82 L623.19,377.19 L622.44,375.57 L621.70,373.94 L620.98,372.31 L620.29,370.69 L619.62,369.06 L618.97,367.43 L618.34,365.81 L617.73,364.18 L617.15,362.55 L616.58,360.93 L616.04,359.30 L615.52,357.67 L615.02,356.04 L614.54,354.42 L614.09,352.79 L613.66,351.16 L613.25,349.54 L612.86,347.91 L612.49,346.28 L612.15,344.65 L611.82,343.03 L611.52,341.40 L611.24,339.77 L610.99,338.15 L610.75,336.52 L610.54,334.89 L610.35,333.27 L610.19,331.64 L610.04,330.01 L609.92,328.38 L609.82,326.76 L609.74,325.13 L609.68,323.50 L609.65,321.88 L609.64,320.25 L609.65,318.62 L609.68,317.00 L609.74,315.37 L609.82,313.74 L609.92,312.12 L610.04,310.49 L610.19,308.86 L610.35,307.23 L610.54,305.61 L610.75,303.98 L610.99,302.35 L611.24,300.73 L611.52,299.10 L611.82,297.47 L612.15,295.85 L612.49,294.22 L612.86,292.59 L613.25,290.96 L613.66,289.34 L614.09,287.71 L614.54,286.08 L615.02,284.46 L615.52,282.83 L616.04,281.20 L616.58,279.57 L617.15,277.95 L617.73,276.32 L618.34,274.69 L618.97,273.07 L619.62,271.44 L620.29,269.81 L620.98,268.19 L621.70,266.56 L622.44,264.93 L623.19,263.31 L623.97,261.68 L624.77,260.05 L625.60,258.42 L626.44,256.80 L627.30,255.17 L628.19,253.54 L629.09,251.92 L630.02,250.29 L630.96,248.66 L631.93,247.03 L632.92,245.41 L633.93,243.78 L634.96,242.15 L636.01,240.53 L637.08,238.90 L638.17,237.27 L639.28,235.65 L640.41,234.02 L641.56,232.39 L642.73,230.76 L643.92,229.14 L645.13,227.51 L646.36,225.88 L647.61,224.26 L648.88,222.63 L650.16,221.00 L651.47,219.38 L652.80,217.75 L654.14,216.12 L655.50,214.50 L656.89,212.87 L658.29,211.24 L659.71,209.61 L661.15,207.99 L662.60,206.36 L664.08,204.73 L665.57,203.11 L667.08,201.48 L668.61,199.85 L670.16,198.22 L671.72,196.60 L673.31,194.97 L674.91,193.34 L676.52,191.72 L678.16,190.09 L679.81,188.46 L681.48,186.84 L683.16,185.21 L684.86,183.58 L686.58,181.96 L688.32,180.33 L690.07,178.70 L691.83,177.07 L693.62,175.45 L695.42,173.82 L697.23,172.19 L699.06,170.57 L700.91,168.94 L702.77,167.31 L704.65,165.69 L706.54,164.06 L708.45,162.43 L710.37,160.80 L712.30,159.18 L714.25,157.55 L716.22,155.92 L718.20,154.30 L720.19,152.67 L722.20,151.04 L724.22,149.41 L726.25,147.79 L728.30,146.16 L730.36,144.53 L732.44,142.91 L734.52,141.28 L736.62,139.65 L738.73,138.03 L740.86,136.40 L743.00,134.77 L745.15,133.15 L747.31,131.52 L749.48,129.89 L751.67,128.26 L753.86,126.64 L756.07,125.01 L758.29,123.38 L760.52,121.76 L762.76,120.13 L765.01,118.50 L767.27,116.88 L769.54,115.25 L771.83,113.62 L774.12,111.99 L776.42,110.37 L778.73,108.74 L781.05,107.11 L783.38,105.49 L785.72,103.86 L788.07,102.23 L790.43,100.60 L792.79,98.98 L795.17,97.35 L797.55,95.72 L799.94,94.10 L802.34,92.47 L804.74,90.84 L807.15,89.22 L809.57,87.59 L812.00,85.96 L814.44,84.34 L816.88,82.71 L819.32,81.08 L821.78,79.45 L824.24,77.83 L826.70,76.20 L829.17,74.57 L831.65,72.95 L834.13,71.32 L836.62,69.69 L839.11,68.06 L841.61,66.44 L844.11,64.81 L846.62,63.18 L849.13,61.56 L851.65,59.93 L854.16,58.30 L856.69,56.68 L859.21,55.05 L861.74,53.42 L864.27,51.80 L866.81,50.17 L869.35,48.54 L871.89,46.91 L874.43,45.29 L876.98,43.66 L879.52,42.03 L882.07,40.41 L884.62,38.78 L887.17,37.15 L889.73,35.52 L892.28,33.90 L894.83,32.27 L897.39,30.64 L899.94,29.02 L902.50,27.39"/>
<path d="M902.50,613.11 L899.52,611.48 L896.54,609.86 L893.56,608.23 L890.58,606.60 L887.60,604.98 L884.62,603.35 L881.64,601.72 L878.67,600.09 L875.69,598.47 L872.72,596.84 L869.75,595.21 L866.79,593.59 L863.82,591.96 L860.86,590.33 L857.90,588.70 L854.95,587.08 L852.00,585.45 L849.05,583.82 L846.11,582.20 L843.17,580.57 L840.24,578.94 L837.31,577.32 L834.38,575.69 L831.46,574.06 L828.55,572.43 L825.64,570.81 L822.74,569.18 L819.84,567.55 L816.95,565.93 L814.07,564.30 L811.19,562.67 L808.32,561.05 L805.46,559.42 L802.61,557.79 L799.76,556.16 L796.92,554.54 L794.09,552.91 L791.26,551.28 L788.45,549.66 L785.64,548.03 L782.84,546.40 L780.06,544.78 L777.28,543.15 L774.51,541.52 L771.75,539.89 L769.00,538.27 L766.26,536.64 L763.53,535.01 L760.81,533.39 L758.10,531.76 L755.41,530.13 L752.72,528.51 L750.05,526.88 L747.39,525.25 L744.73,523.62 L742.10,522.00 L739.47,520.37 L736.86,518.74 L734.25,517.12 L731.66,515.49 L729.09,513.86 L726.53,512.24 L723.98,510.61 L721.44,508.98 L718.92,507.36 L716.41,505.73 L713.92,504.10 L711.44,502.47 L708.98,500.85 L706.53,499.22 L704.09,497.59 L701.67,495.97 L699.27,494.34 L696.88,492.71 L694.50,491.09 L692.15,489.46 L689.81,487.83 L687.48,486.20 L685.17,484.58 L682.88,482.95 L680.60,481.32 L678.34,479.70 L676.10,478.07 L673.88,476.44 L671.67,474.81 L669.48,473.19 L667.31,471.56 L665.16,469.93 L663.02,468.31 L660.90,466.68 L658.80,465.05 L656.72,463.43 L654.66,461.80 L652.62,460.17 L650.59,458.54 L648.59,456.92 L646.60,455.29 L644.64,453.66 L642.69,452.04 L640.77,450.41 L638.86,448.78 L636.97,447.16 L635.11,445.53 L633.26,443.90 L631.43,442.27 L629.63,440.65 L627.85,439.02 L626.08,437.39 L624.34,435.77 L622.62,434.14 L620.92,432.51 L619.24,430.89 L617.59,429.26 L615.95,427.63 L614.34,426.00 L612.75,424.38 L611.18,422.75 L609.63,421.12 L608.11,419.50 L606.61,417.87 L605.13,416.24 L603.67,414.62 L602.23,412.99 L600.82,411.36 L599.44,409.74 L598.07,408.11 L596.73,406.48 L595.41,404.85 L594.11,403.23 L592.84,401.60 L591.59,399.97 L590.37,398.35 L589.17,396.72 L587.99,395.09 L586.84,393.47 L585.71,391.84 L584.60,390.21 L583.52,388.58 L582.47,386.96 L581.44,385.33 L580.43,383.70 L579.44,382.08 L578.49,380.45 L577.55,378.82 L576.64,377.19 L575.76,375.57 L574.90,373.94 L574.07,372.31 L573.26,370.69 L572.47,369.06 L571.71,367.43 L570.98,365.81 L570.27,364.18 L569.59,362.55 L568.93,360.93 L568.30,359.30 L567.69,357.67 L567.11,356.04 L566.55,354.42 L566.02,352.79 L565.52,351.16 L565.04,349.54 L564.58,347.91 L564.16,346.28 L563.75,344.65 L563.38,343.03 L563.03,341.40 L562.70,339.77 L562.40,338.15 L562.13,336.52 L561.88,334.89 L561.66,333.27 L561.47,331.64 L561.30,330.01 L561.16,328.38 L561.04,326.76 L560.95,325.13 L560.88,323.50 L560.84,321.88 L560.83,320.25 L560.84,318.62 L560.88,317.00 L560.95,315.37 L561.04,313.74 L561.16,312.12 L561.30,310.49 L561.47,308.86 L561.66,307.23 L561.88,305.61 L562.13,303.98 L562.40,302.35 L562.70,300.73 L563.03,299.10 L563.38,297.47 L563.75,295.85 L564.16,294.22 L564.58,292.59 L565.04,290.96 L565.52,289.34 L566.02,287.71 L566.55,286.08 L567.11,284.46 L567.69,282.83 L568.30,281.20 L568.93,279.57 L569.59,277.95 L570.27,276.32 L570.98,274.69 L571.71,273.07 L572.47,271.44 L573.26,269.81 L574.07,268.19 L574.90,266.56 L575.76,264.93 L576.64,263.31 L577.55,261.68 L578.49,260.05 L579.44,258.42 L580.43,256.80 L581.44,255.17 L582.47,253.54 L583.52,251.92 L584.60,250.29 L585.71,248.66 L586.84,247.03 L587.99,245.41 L589.17,243.78 L590.37,242.15 L591.59,240.53 L592.84,238.90 L594.11,237.27 L595.41,235.65 L596.73,234.02 L598.07,232.39 L599.44,230.76 L600.82,229.14 L602.23,227.51 L603.67,225.88 L605.13,224.26 L606.61,222.63 L608.11,221.00 L609.63,219.38 L611.18,217.75 L612.75,216.12 L614.34,214.50 L615.95,212.87 L617.59,211.24 L619.24,209.61 L620.92,207.99 L622.62,206.36 L624.34,204.73 L626.08,203.11 L627.85,201.48 L629.63,199.85 L631.43,198.22 L633.26,196.60 L635.11,194.97 L636.97,193.34 L638.86,191.72 L640.77,190.09 L642.69,188.46 L644.64,186.84 L646.60,185.21 L648.59,183.58 L650.59,181.96 L652.62,180.33 L654.66,178.70 L656.72,177.07 L658.80,175.45 L660.90,173.82 L663.02,172.19 L665.16,170.57 L667.31,168.94 L669.48,167.31 L671.67,165.69 L673.88,164.06 L676.10,162.43 L678.34,160.80 L680.60,159.18 L682.88,157.55 L685.17,155.92 L687.48,154.30 L689.81,152.67 L692.15,151.04 L694.50,149.41 L696.88,147.79 L699.27,146.16 L701.67,144.53 L704.09,142.91 L706.53,141.28 L708.98,139.65 L711.44,138.03 L713.92,136.40 L716.41,134.77 L718.92,133.15 L721.44,131.52 L723.98,129.89 L726.53,128.26 L729.09,126.64 L731.66,125.01 L734.25,123.38 L736.86,121.76 L739.47,120.13 L742.10,118.50 L744.73,116.88 L747.39,115.25 L750.05,113.62 L752.72,111.99 L755.41,110.37 L758.10,108.74 L760.81,107.11 L763.53,105.49 L766.26,103.86 L769.00,102.23 L771.75,100.60 L774.51,98.98 L777.28,97.35 L780.06,95.72 L782.84,94.10 L785.64,92.47 L788.45,90.84 L791.26,89.22 L794.09,87.59 L796.92,85.96 L799.76,84.34 L802.61,82.71 L805.46,81.08 L808.32,79.45 L811.19,77.83 L814.07,76.20 L816.95,74.57 L819.84,72.95 L822.74,71.32 L825.64,69.69 L828.55,68.06 L831.46,66.44 L834.38,64.81 L837.31,63.18 L840.24,61.56 L843.17,59.93 L846.11,58.30 L849.05,56.68 L852.00,55.05 L854.95,53.42 L857.90,51.80 L860.86,50.17 L863.82,48.54 L866.79,46.91 L869.75,45.29 L872.72,43.66 L875.69,42.03 L878.67,40.41 L881.64,38.78 L884.62,37.15 L887.60,35.52 L890.58,33.90 L893.56,32.27 L896.54,30.64 L899.52,29.02 L902.50,27.39"/>
<path d="M902.50,613.11 L899.09,611.48 L895.69,609.86 L892.28,608.23 L888.87,606.60 L885.47,604.98 L882.06,603.35 L878.66,601.72 L875.26,600.09 L871.86,598.47 L868.47,596.84 L865.07,595.21 L861.68,593.59 L858.30,591.96 L854.91,590.33 L851.53,588.70 L848.16,587.08 L844.78,585.45 L841.42,583.82 L838.05,582.20 L834.69,580.57 L831.34,578.94 L827.99,577.32 L824.65,575.69 L821.31,574.06 L817.98,572.43 L814.66,570.81 L811.34,569.18 L808.03,567.55 L804.73,565.93 L801.44,564.30 L798.15,562.67 L794.87,561.05 L791.60,559.42 L788.33,557.79 L785.08,556.16 L781.84,554.54 L778.60,552.91 L775.37,551.28 L772.16,549.66 L768.95,548.03 L765.75,546.40 L762.56,544.78 L759.39,543.15 L756.22,541.52 L753.07,539.89 L749.93,538.27 L746.80,536.64 L743.68,535.01 L740.57,533.39 L737.48,531.76 L734.39,530.13 L731.32,528.51 L728.27,526.88 L725.23,525.25 L722.20,523.62 L719.18,522.00 L716.18,520.37 L713.19,518.74 L710.22,517.12 L707.26,515.49 L704.32,513.86 L701.39,512.24 L698.47,510.61 L695.58,508.98 L692.70,507.36 L689.83,505.73 L686.98,504.10 L684.15,502.47 L681.33,500.85 L678.53,499.22 L675.75,497.59 L672.98,495.97 L670.23,494.34 L667.50,492.71 L664.79,491.09 L662.10,489.46 L659.42,487.83 L656.76,486.20 L654.12,484.58 L651.50,482.95 L648.90,481.32 L646.32,479.70 L643.76,478.07 L641.22,476.44 L638.70,474.81 L636.19,473.19 L633.71,471.56 L631.25,469.93 L628.81,468.31 L626.39,466.68 L623.99,465.05 L621.61,463.43 L619.26,461.80 L616.92,460.17 L614.61,458.54 L612.32,456.92 L610.05,455.29 L607.80,453.66 L605.58,452.04 L603.37,450.41 L601.20,448.78 L599.04,447.16 L596.91,445.53 L594.80,443.90 L592.71,442.27 L590.65,440.65 L588.61,439.02 L586.60,437.39 L584.60,435.77 L582.64,434.14 L580.70,432.51 L578.78,430.89 L576.88,429.26 L575.02,427.63 L573.17,426.00 L571.35,424.38 L569.56,422.75 L567.79,421.12 L566.05,419.50 L564.33,417.87 L562.64,416.24 L560.98,414.62 L559.34,412.99 L557.73,411.36 L556.14,409.74 L554.58,408.11 L553.05,406.48 L551.54,404.85 L550.06,403.23 L548.60,401.60 L547.18,399.97 L545.78,398.35 L544.41,396.72 L543.06,395.09 L541.74,393.47 L540.45,391.84 L539.19,390.21 L537.96,388.58 L536.75,386.96 L535.57,385.33 L534.42,383.70 L533.29,382.08 L532.20,380.45 L531.13,378.82 L530.09,377.19 L529.08,375.57 L528.10,373.94 L527.15,372.31 L526.22,370.69 L525.33,369.06 L524.46,367.43 L523.62,365.81 L522.81,364.18 L522.03,362.55 L521.28,360.93 L520.55,359.30 L519.86,357.67 L519.19,356.04 L518.56,354.42 L517.95,352.79 L517.38,351.16 L516.83,349.54 L516.31,347.91 L515.82,346.28 L515.36,344.65 L514.93,343.03 L514.53,341.40 L514.16,339.77 L513.82,338.15 L513.51,336.52 L513.22,334.89 L512.97,333.27 L512.75,331.64 L512.56,330.01 L512.39,328.38 L512.26,326.76 L512.15,325.13 L512.08,323.50 L512.03,321.88 L512.02,320.25 L512.03,318.62 L512.08,317.00 L512.15,315.37 L512.26,313.74 L512.39,312.12 L512.56,310.49 L512.75,308.86 L512.97,307.23 L513.22,305.61 L513.51,303.98 L513.82,302.35 L514.16,300.73 L514.53,299.10 L514.93,297.47 L515.36,295.85 L515.82,294.22 L516.31,292.59 L516.83,290.96 L517.38,289.34 L517.95,287.71 L518.56,286.08 L519.19,284.46 L519.86,282.83 L520.55,281.20 L521.28,279.57 L522.03,277.95 L522.81,276.32 L523.62,274.69 L524.46,273.07 L525.33,271.44 L526.22,269.81 L527.15,268.19 L528.10,266.56 L529.08,264.93 L530.09,263.31 L531.13,261.68 L532.20,260.05 L533.29,258.42 L534.42,256.80 L535.57,255.17 L536.75,253.54 L537.96,251.92 L539.19,250.29 L540.45,248.66 L541.74,247.03 L543.06,245.41 L544.41,243.78 L545.78,242.15 L547.18,240.53 L548.60,238.90 L550.06,237.27 L551.54,235.65 L553.05,234.02 L554.58,232.39 L556.14,230.76 L557.73,229.14 L559.34,227.51 L560.98,225.88 L562.64,224.26 L564.33,222.63 L566.05,221.00 L567.79,219.38 L569.56,217.75 L571.35,216.12 L573.17,214.50 L575.02,212.87 L576.88,211.24 L578.78,209.61 L580.70,207.99 L582.64,206.36 L584.60,204.73 L586.60,203.11 L588.61,201.48 L590.65,199.85 L592.71,198.22 L594.80,196.60 L596.91,194.97 L599.04,193.34 L601.20,191.72 L603.37,190.09 L605.58,188.46 L607.80,186.84 L610.05,185.21 L612.32,183.58 L614.61,181.96 L616.92,180.33 L619.26,178.70 L621.61,177.07 L623.99,175.45 L626.39,173.82 L628.81,172.19 L631.25,170.57 L633.71,168.94 L636.19,167.31 L638.70,165.69 L641.22,164.06 L643.76,162.43 L646.32,160.80 L648.90,159.18 L651.50,157.55 L654.12,155.92 L656.76,154.30 L659.42,152.67 L662.10,151.04 L664.79,149.41 L667.50,147.79 L670.23,146.16 L672.98,144.53 L675.75,142.91 L678.53,141.28 L681.33,139.65 L684.15,138.03 L686.98,136.40 L689.83,134.77 L692.70,133.15 L695.58,131.52 L698.47,129.89 L701.39,128.26 L704.32,126.64 L707.26,125.01 L710.22,123.38 L713.19,121.76 L716.18,120.13 L719.18,118.50 L722.20,116.88 L725.23,115.25 L728.27,113.62 L731.32,111.99 L734.39,110.37 L737.48,108.74 L740.57,107.11 L743.68,105.49 L746.80,103.86 L749.93,102.23 L753.07,100.60 L756.22,98.98 L759.39,97.35 L762.56,95.72 L765.75,94.10 L768.95,92.47 L772.16,90.84 L775.37,89.22 L778.60,87.59 L781.84,85.96 L785.08,84.34 L788.33,82.71 L791.60,81.08 L794.87,79.45 L798.15,77.83 L801.44,76.20 L804.73,74.57 L808.03,72.95 L811.34,71.32 L814.66,69.69 L817.98,68.06 L821.31,66.44 L824.65,64.81 L827.99,63.18 L831.34,61.56 L834.69,59.93 L838.05,58.30 L841.42,56.68 L844.78,55.05 L848.16,53.42 L851.53,51.80 L854.91,50.17 L858.30,48.54 L861.68,46.91 L865.07,45.29 L868.47,43.66 L871.86,42.03 L875.26,40.41 L878.66,38.78 L882.06,37.15 L885.47,35.52 L888.87,33.90 L892.28,32.27 L895.69,30.64 L899.09,29.02 L902.50,27.39"/>
<path d="M902.50,613.11 L898.67,611.48 L894.83,609.86 L891.00,608.23 L887.17,606.60 L883.34,604.98 L879.51,603.35 L875.68,601.72 L871.86,600.09 L868.03,598.47 L864.21,596.84 L860.40,595.21 L856.58,593.59 L852.77,591.96 L848.96,590.33 L845.16,588.70 L841.36,587.08 L837.57,585.45 L833.78,583.82 L830.00,582.20 L826.22,580.57 L822.45,578.94 L818.68,577.32 L814.92,575.69 L811.17,574.06 L807.42,572.43 L803.68,570.81 L799.95,569.18 L796.23,567.55 L792.51,565.93 L788.80,564.30 L785.10,562.67 L781.42,561.05 L777.73,559.42 L774.06,557.79 L770.40,556.16 L766.75,554.54 L763.11,552.91 L759.48,551.28 L755.86,549.66 L752.25,548.03 L748.66,546.40 L745.07,544.78 L741.50,543.15 L737.94,541.52 L734.39,539.89 L730.86,538.27 L727.33,536.64 L723.82,535.01 L720.33,533.39 L716.85,531.76 L713.38,530.13 L709.93,528.51 L706.49,526.88 L703.07,525.25 L699.66,523.62 L696.27,522.00 L692.89,520.37 L689.53,518.74 L686.18,517.12 L682.85,515.49 L679.54,513.86 L676.25,512.24 L672.97,510.61 L669.71,508.98 L666.47,507.36 L663.25,505.73 L660.04,504.10 L656.85,502.47 L653.68,500.85 L650.53,499.22 L647.40,497.59 L644.29,495.97 L641.20,494.34 L638.13,492.71 L635.08,491.09 L632.05,489.46 L629.04,487.83 L626.05,486.20 L623.08,484.58 L620.13,482.95 L617.20,481.32 L614.30,479.70 L611.42,478.07 L608.56,476.44 L605.72,474.81 L602.90,473.19 L600.11,471.56 L597.34,469.93 L594.60,468.31 L591.88,466.68 L589.18,465.05 L586.50,463.43 L583.85,461.80 L581.22,460.17 L578.62,458.54 L576.04,456.92 L573.49,455.29 L570.96,453.66 L568.46,452.04 L565.98,450.41 L563.53,448.78 L561.11,447.16 L558.71,445.53 L556.33,443.90 L553.99,442.27 L551.67,440.65 L549.37,439.02 L547.11,437.39 L544.87,435.77 L542.65,434.14 L540.47,432.51 L538.31,430.89 L536.18,429.26 L534.08,427.63 L532.01,426.00 L529.96,424.38 L527.94,422.75 L525.95,421.12 L523.99,419.50 L522.06,417.87 L520.16,416.24 L518.29,414.62 L516.44,412.99 L514.63,411.36 L512.85,409.74 L511.09,408.11 L509.36,406.48 L507.67,404.85 L506.00,403.23 L504.37,401.60 L502.76,399.97 L501.19,398.35 L499.64,396.72 L498.13,395.09 L496.65,393.47 L495.20,391.84 L493.78,390.21 L492.39,388.58 L491.03,386.96 L489.70,385.33 L488.41,383.70 L487.14,382.08 L485.91,380.45 L484.71,378.82 L483.54,377.19 L482.40,375.57 L481.30,373.94 L480.23,372.31 L479.19,370.69 L478.18,369.06 L477.20,367.43 L476.26,365.81 L475.35,364.18 L474.47,362.55 L473.62,360.93 L472.81,359.30 L472.03,357.67 L471.28,356.04 L470.57,354.42 L469.88,352.79 L469.23,351.16 L468.62,349.54 L468.04,347.91 L467.49,346.28 L466.97,344.65 L466.48,343.03 L466.03,341.40 L465.62,339.77 L465.23,338.15 L464.88,336.52 L464.56,334.89 L464.28,333.27 L464.03,331.64 L463.81,330.01 L463.63,328.38 L463.48,326.76 L463.36,325.13 L463.28,323.50 L463.23,321.88 L463.21,320.25 L463.23,318.62 L463.28,317.00 L463.36,315.37 L463.48,313.74 L463.63,312.12 L463.81,310.49 L464.03,308.86 L464.28,307.23 L464.56,305.61 L464.88,303.98 L465.23,302.35 L465.62,300.73 L466.03,299.10 L466.48,297.47 L466.97,295.85 L467.49,294.22 L468.04,292.59 L468.62,290.96 L469.23,289.34 L469.88,287.71 L470.57,286.08 L471.28,284.46 L472.03,282.83 L472.81,281.20 L473.62,279.57 L474.47,277.95 L475.35,276.32 L476.26,274.69 L477.20,273.07 L478.18,271.44 L479.19,269.81 L480.23,268.19 L481.30,266.56 L482.40,264.93 L483.54,263.31 L484.71,261.68 L485.91,260.05 L487.14,258.42 L488.41,256.80 L489.70,255.17 L491.03,253.54 L492.39,251.92 L493.78,250.29 L495.20,248.66 L496.65,247.03 L498.13,245.41 L499.64,243.78 L501.19,242.15 L502.76,240.53 L504.37,238.90 L506.00,237.27 L507.67,235.65 L509.36,234.02 L511.09,232.39 L512.85,230.76 L514.63,229.14 L516.44,227.51 L518.29,225.88 L520.16,224.26 L522.06,222.63 L523.99,221.00 L525.95,219.38 L527.94,217.75 L529.96,216.12 L532.01,214.50 L534.08,212.87 L536.18,211.24 L538.31,209.61 L540.47,207.99 L542.65,206.36 L544.87,204.73 L547.11,203.11 L549.37,201.48 L551.67,199.85 L553.99,198.22 L556.33,196.60 L558.71,194.97 L561.11,193.34 L563.53,191.72 L565.98,190.09 L568.46,188.46 L570.96,186.84 L573.49,185.21 L576.04,183.58 L578.62,181.96 L581.22,180.33 L583.85,178.70 L586.50,177.07 L589.18,175.45 L591.88,173.82 L594.60,172.19 L597.34,170.57 L600.11,168.94 L602.90,167.31 L605.72,165.69 L608.56,164.06 L611.42,162.43 L614.30,160.80 L617.20,159.18 L620.13,157.55 L623.08,155.92 L626.05,154.30 L629.04,152.67 L632.05,151.04 L635.08,149.41 L638.13,147.79 L641.20,146.16 L644.29,144.53 L647.40,142.91 L650.53,141.28 L653.68,139.65 L656.85,138.03 L660.04,136.40 L663.25,134.77 L666.47,133.15 L669.71,131.52 L672.97,129.89 L676.25,128.26 L679.54,126.64 L682.85,125.01 L686.18,123.38 L689.53,121.76 L692.89,120.13 L696.27,118.50 L699.66,116.88 L703.07,115.25 L706.49,113.62 L709.93,111.99 L713.38,110.37 L716.85,108.74 L720.33,107.11 L723.82,105.49 L727.33,103.86 L730.86,102.23 L734.39,100.60 L737.94,98.98 L741.50,97.35 L745.07,95.72 L748.66,94.10 L752.25,92.47 L755.86,90.84 L759.48,89.22 L763.11,87.59 L766.75,85.96 L770.40,84.34 L774.06,82.71 L777.73,81.08 L781.42,79.45 L785.10,77.83 L788.80,76.20 L792.51,74.57 L796.23,72.95 L799.95,71.32 L803.68,69.69 L807.42,68.06 L811.17,66.44 L814.92,64.81 L818.68,63.18 L822.45,61.56 L826.22,59.93 L830.00,58.30 L833.78,56.68 L837.57,55.05 L841.36,53.42 L845.16,51.80 L848.96,50.17 L852.77,48.54 L856.58,46.91 L860.40,45.29 L864.21,43.66 L868.03,42.03 L871.86,40.41 L875.68,38.78 L879.51,37.15 L883.34,35.52 L887.17,33.90 L891.00,32.27 L894.83,30.64 L898.67,29.02 L902.50,27.39"/>
<path d="M902.50,613.11 L898.24,611.48 L893.98,609.86 L889.72,608.23 L885.47,606.60 L881.21,604.98 L876.95,603.35 L872.70,601.72 L868.45,600.09 L864.20,598.47 L859.96,596.84 L855.72,595.21 L851.48,593.59 L847.25,591.96 L843.02,590.33 L838.79,588.70 L834.57,587.08 L830.35,585.45 L826.14,583.82 L821.94,582.20 L817.74,580.57 L813.55,578.94 L809.37,577.32 L805.19,575.69 L801.02,574.06 L796.86,572.43 L792.70,570.81 L788.56,569.18 L784.42,567.55 L780.29,565.93 L776.17,564.30 L772.06,562.67 L767.96,561.05 L763.87,559.42 L759.79,557.79 L755.73,556.16 L751.67,554.54 L747.62,552.91 L743.59,551.28 L739.57,549.66 L735.56,548.03 L731.56,546.40 L727.58,544.78 L723.61,543.15 L719.65,541.52 L715.71,539.89 L711.78,538.27 L707.87,536.64 L703.97,535.01 L700.09,533.39 L696.22,531.76 L692.37,530.13 L688.53,528.51 L684.71,526.88 L680.91,525.25 L677.12,523.62 L673.35,522.00 L669.60,520.37 L665.86,518.74 L662.15,517.12 L658.45,515.49 L654.77,513.86 L651.11,512.24 L647.47,510.61 L643.85,508.98 L640.24,507.36 L636.66,505.73 L633.10,504.10 L629.56,502.47 L626.04,500.85 L622.54,499.22 L619.06,497.59 L615.60,495.97 L612.17,494.34 L608.75,492.71 L605.36,491.09 L602.00,489.46 L598.65,487.83 L595.33,486.20 L592.03,484.58 L588.76,482.95 L585.50,481.32 L582.28,479.70 L579.08,478.07 L575.90,476.44 L572.74,474.81 L569.62,473.19 L566.51,471.56 L563.44,469.93 L560.39,468.31 L557.36,466.68 L554.36,465.05 L551.39,463.43 L548.44,461.80 L545.53,460.17 L542.63,458.54 L539.77,456.92 L536.93,455.29 L534.13,453.66 L531.35,452.04 L528.59,450.41 L525.87,448.78 L523.18,447.16 L520.51,445.53 L517.87,443.90 L515.26,442.27 L512.69,440.65 L510.14,439.02 L507.62,437.39 L505.13,435.77 L502.67,434.14 L500.24,432.51 L497.85,430.89 L495.48,429.26 L493.14,427.63 L490.84,426.00 L488.57,424.38 L486.33,422.75 L484.12,421.12 L481.94,419.50 L479.79,417.87 L477.68,416.24 L475.60,414.62 L473.55,412.99 L471.53,411.36 L469.55,409.74 L467.60,408.11 L465.68,406.48 L463.80,404.85 L461.95,403.23 L460.13,401.60 L458.35,399.97 L456.60,398.35 L454.88,396.72 L453.20,395.09 L451.55,393.47 L449.94,391.84 L448.36,390.21 L446.82,388.58 L445.31,386.96 L443.84,385.33 L442.40,383.70 L440.99,382.08 L439.62,380.45 L438.29,378.82 L436.99,377.19 L435.73,375.57 L434.50,373.94 L433.31,372.31 L432.15,370.69 L431.03,369.06 L429.95,367.43 L428.90,365.81 L427.89,364.18 L426.91,362.55 L425.97,360.93 L425.07,359.30 L424.20,357.67 L423.37,356.04 L422.57,354.42 L421.82,352.79 L421.09,351.16 L420.41,349.54 L419.76,347.91 L419.15,346.28 L418.58,344.65 L418.04,343.03 L417.54,341.40 L417.07,339.77 L416.65,338.15 L416.26,336.52 L415.90,334.89 L415.59,333.27 L415.31,331.64 L415.07,330.01 L414.86,328.38 L414.70,326.76 L414.57,325.13 L414.47,323.50 L414.42,321.88 L414.40,320.25 L414.42,318.62 L414.47,317.00 L414.57,315.37 L414.70,313.74 L414.86,312.12 L415.07,310.49 L415.31,308.86 L415.59,307.23 L415.90,305.61 L416.26,303.98 L416.65,302.35 L417.07,300.73 L417.54,299.10 L418.04,297.47 L418.58,295.85 L419.15,294.22 L419.76,292.59 L420.41,290.96 L421.09,289.34 L421.82,287.71 L422.57,286.08 L423.37,284.46 L424.20,282.83 L425.07,281.20 L425.97,279.57 L426.91,277.95 L427.89,276.32 L428.90,274.69 L429.95,273.07 L431.03,271.44 L432.15,269.81 L433.31,268.19 L434.50,266.56 L435.73,264.93 L436.99,263.31 L438.29,261.68 L439.62,260.05 L440.99,258.42 L442.40,256.80 L443.84,255.17 L445.31,253.54 L446.82,251.92 L448.36,250.29 L449.94,248.66 L451.55,247.03 L453.20,245.41 L454.88,243.78 L456.60,242.15 L458.35,240.53 L460.13,238.90 L461.95,237.27 L463.80,235.65 L465.68,234.02 L467.60,232.39 L469.55,230.76 L471.53,229.14 L473.55,227.51 L475.60,225.88 L477.68,224.26 L479.79,222.63 L481.94,221.00 L484.12,219.38 L486.33,217.75 L488.57,216.12 L490.84,214.50 L493.14,212.87 L495.48,211.24 L497.85,209.61 L500.24,207.99 L502.67,206.36 L505.13,204.73 L507.62,203.11 L510.14,201.48 L512.69,199.85 L515.26,198.22 L517.87,196.60 L520.51,194.97 L523.18,193.34 L525.87,191.72 L528.59,190.09 L531.35,188.46 L534.13,186.84 L536.93,185.21 L539.77,183.58 L542.63,181.96 L545.53,180.33 L548.44,178.70 L551.39,177.07 L554.36,175.45 L557.36,173.82 L560.39,172.19 L563.44,170.57 L566.51,168.94 L569.62,167.31 L572.74,165.69 L575.90,164.06 L579.08,162.43 L582.28,160.80 L585.50,159.18 L588.76,157.55 L592.03,155.92 L595.33,154.30 L598.65,152.67 L602.00,151.04 L605.36,149.41 L608.75,147.79 L612.17,146.16 L615.60,144.53 L619.06,142.91 L622.54,141.28 L626.04,139.65 L629.56,138.03 L633.10,136.40 L636.66,134.77 L640.24,133.15 L643.85,131.52 L647.47,129.89 L651.11,128.26 L654.77,126.64 L658.45,125.01 L662.15,123.38 L665.86,121.76 L669.60,120.13 L673.35,118.50 L677.12,116.88 L680.91,115.25 L684.71,113.62 L688.53,111.99 L692.37,110.37 L696.22,108.74 L700.09,107.11 L703.97,105.49 L707.87,103.86 L711.78,102.23 L715.71,100.60 L719.65,98.98 L723.61,97.35 L727.58,95.72 L731.56,94.10 L735.56,92.47 L739.57,90.84 L743.59,89.22 L747.62,87.59 L751.67,85.96 L755.73,84.34 L759.79,82.71 L763.87,81.08 L767.96,79.45 L772.06,77.83 L776.17,76.20 L780.29,74.57 L784.42,72.95 L788.56,71.32 L792.70,69.69 L796.86,68.06 L801.02,66.44 L805.19,64.81 L809.37,63.18 L813.55,61.56 L817.74,59.93 L821.94,58.30 L826.14,56.68 L830.35,55.05 L834.57,53.42 L838.79,51.80 L843.02,50.17 L847.25,48.54 L851.48,46.91 L855.72,45.29 L859.96,43.66 L864.20,42.03 L868.45,40.41 L872.70,38.78 L876.95,37.15 L881.21,35.52 L885.47,33.90 L889.72,32.27 L893.98,30.64 L898.24,29.02 L902.50,27.39"/>
<path d="M902.50,613.11 L897.81,611.48 L893.13,609.86 L888.45,608.23 L883.76,606.60 L879.08,604.98 L874.40,603.35 L869.72,601.72 L865.05,600.09 L860.37,598.47 L855.71,596.84 L851.04,595.21 L846.38,593.59 L841.72,591.96 L837.07,590.33 L832.42,588.70 L827.78,587.08 L823.14,585.45 L818.51,583.82 L813.88,582.20 L809.27,580.57 L804.66,578.94 L800.05,577.32 L795.46,575.69 L790.87,574.06 L786.29,572.43 L781.72,570.81 L777.16,569.18 L772.61,567.55 L768.07,565.93 L763.54,564.30 L759.02,562.67 L754.51,561.05 L750.01,559.42 L745.52,557.79 L741.05,556.16 L736.59,554.54 L732.14,552.91 L727.70,551.28 L723.28,549.66 L718.87,548.03 L714.47,546.40 L710.09,544.78 L705.72,543.15 L701.37,541.52 L697.03,539.89 L692.71,538.27 L688.41,536.64 L684.12,535.01 L679.85,533.39 L675.59,531.76 L671.35,530.13 L667.13,528.51 L662.93,526.88 L658.75,525.25 L654.58,523.62 L650.44,522.00 L646.31,520.37 L642.20,518.74 L638.11,517.12 L634.04,515.49 L630.00,513.86 L625.97,512.24 L621.97,510.61 L617.98,508.98 L614.02,507.36 L610.08,505.73 L606.16,504.10 L602.26,502.47 L598.39,500.85 L594.54,499.22 L590.71,497.59 L586.91,495.97 L583.13,494.34 L579.38,492.71 L575.65,491.09 L571.95,489.46 L568.27,487.83 L564.61,486.20 L560.98,484.58 L557.38,482.95 L553.80,481.32 L550.26,479.70 L546.73,478.07 L543.24,476.44 L539.77,474.81 L536.33,473.19 L532.92,471.56 L529.53,469.93 L526.17,468.31 L522.85,466.68 L519.55,465.05 L516.28,463.43 L513.04,461.80 L509.83,460.17 L506.65,458.54 L503.50,456.92 L500.38,455.29 L497.29,453.66 L494.23,452.04 L491.20,450.41 L488.21,448.78 L485.24,447.16 L482.31,445.53 L479.41,443.90 L476.54,442.27 L473.70,440.65 L470.90,439.02 L468.13,437.39 L465.39,435.77 L462.69,434.14 L460.02,432.51 L457.38,430.89 L454.78,429.26 L452.21,427.63 L449.67,426.00 L447.17,424.38 L444.71,422.75 L442.28,421.12 L439.88,419.50 L437.52,417.87 L435.20,416.24 L432.91,414.62 L430.65,412.99 L428.44,411.36 L426.26,409.74 L424.11,408.11 L422.00,406.48 L419.93,404.85 L417.89,403.23 L415.89,401.60 L413.93,399.97 L412.01,398.35 L410.12,396.72 L408.27,395.09 L406.46,393.47 L404.69,391.84 L402.95,390.21 L401.25,388.58 L399.59,386.96 L397.97,385.33 L396.39,383.70 L394.84,382.08 L393.34,380.45 L391.87,378.82 L390.44,377.19 L389.05,375.57 L387.70,373.94 L386.39,372.31 L385.12,370.69 L383.88,369.06 L382.69,367.43 L381.54,365.81 L380.42,364.18 L379.35,362.55 L378.32,360.93 L377.32,359.30 L376.37,357.67 L375.45,356.04 L374.58,354.42 L373.75,352.79 L372.95,351.16 L372.20,349.54 L371.49,347.91 L370.82,346.28 L370.18,344.65 L369.59,343.03 L369.04,341.40 L368.53,339.77 L368.06,338.15 L367.63,336.52 L367.25,334.89 L366.90,333.27 L366.59,331.64 L366.33,330.01 L366.10,328.38 L365.92,326.76 L365.77,325.13 L365.67,323.50 L365.61,321.88 L365.59,320.25 L365.61,318.62 L365.67,317.00 L365.77,315.37 L365.92,313.74 L366.10,312.12 L366.33,310.49 L366.59,308.86 L366.90,307.23 L367.25,305.61 L367.63,303.98 L368.06,302.35 L368.53,300.73 L369.04,299.10 L369.59,297.47 L370.18,295.85 L370.82,294.22 L371.49,292.59 L372.20,290.96 L372.95,289.34 L373.75,287.71 L374.58,286.08 L375.45,284.46 L376.37,282.83 L377.32,281.20 L378.32,279.57 L379.35,277.95 L380.42,276.32 L381.54,274.69 L382.69,273.07 L383.88,271.44 L385.12,269.81 L386.39,268.19 L387.70,266.56 L389.05,264.93 L390.44,263.31 L391.87,261.68 L393.34,260.05 L394.84,258.42 L396.39,256.80 L397.97,255.17 L399.59,253.54 L401.25,251.92 L402.95,250.29 L404.69,248.66 L406.46,247.03 L408.27,245.41 L410.12,243.78 L412.01,242.15 L413.93,240.53 L415.89,238.90 L417.89,237.27 L419.93,235.65 L422.00,234.02 L424.11,232.39 L426.26,230.76 L428.44,229.14 L430.65,227.51 L432.91,225.88 L435.20,224.26 L437.52,222.63 L439.88,221.00 L442.28,219.38 L444.71,217.75 L447.17,216.12 L449.67,214.50 L452.21,212.87 L454.78,211.24 L457.38,209.61 L460.02,207.99 L462.69,206.36 L465.39,204.73 L468.13,203.11 L470.90,201.48 L473.70,199.85 L476.54,198.22 L479.41,196.60 L482.31,194.97 L485.24,193.34 L488.21,191.72 L491.20,190.09 L494.23,188.46 L497.29,186.84 L500.38,185.21 L503.50,183.58 L506.65,181.96 L509.83,180.33 L513.04,178.70 L516.28,177.07 L519.55,175.45 L522.85,173.82 L526.17,172.19 L529.53,170.57 L532.92,168.94 L536.33,167.31 L539.77,165.69 L543.24,164.06 L546.73,162.43 L550.26,160.80 L553.80,159.18 L557.38,157.55 L560.98,155.92 L564.61,154.30 L568.27,152.67 L571.95,151.04 L575.65,149.41 L579.38,147.79 L583.13,146.16 L586.91,144.53 L590.71,142.91 L594.54,141.28 L598.39,139.65 L602.26,138.03 L606.16,136.40 L610.08,134.77 L614.02,133.15 L617.98,131.52 L621.97,129.89 L625.97,128.26 L630.00,126.64 L634.04,125.01 L638.11,123.38 L642.20,121.76 L646.31,120.13 L650.44,118.50 L654.58,116.88 L658.75,115.25 L662.93,113.62 L667.13,111.99 L671.35,110.37 L675.59,108.74 L679.85,107.11 L684.12,105.49 L688.41,103.86 L692.71,102.23 L697.03,100.60 L701.37,98.98 L705.72,97.35 L710.09,95.72 L714.47,94.10 L718.87,92.47 L723.28,90.84 L727.70,89.22 L732.14,87.59 L736.59,85.96 L741.05,84.34 L745.52,82.71 L750.01,81.08 L754.51,79.45 L759.02,77.83 L763.54,76.20 L768.07,74.57 L772.61,72.95 L777.16,71.32 L781.72,69.69 L786.29,68.06 L790.87,66.44 L795.46,64.81 L800.05,63.18 L804.66,61.56 L809.27,59.93 L813.88,58.30 L818.51,56.68 L823.14,55.05 L827.78,53.42 L832.42,51.80 L837.07,50.17 L841.72,48.54 L846.38,46.91 L851.04,45.29 L855.71,43.66 L860.37,42.03 L865.05,40.41 L869.72,38.78 L874.40,37.15 L879.08,35.52 L883.76,33.90 L888.45,32.27 L893.13,30.64 L897.81,29.02 L902.50,27.39"/>
<path d="M902.50,613.11 L897.39,611.48 L892.28,609.86 L887.17,608.23 L882.06,606.60 L876.95,604.98 L871.85,603.35 L866.74,601.72 L861.64,600.09 L856.54,598.47 L851.45,596.84 L846.36,595.21 L841.28,593.59 L836.19,591.96 L831.12,590.33 L826.05,588.70 L820.98,587.08 L815.93,585.45 L810.87,583.82 L805.83,582.20 L800.79,580.57 L795.76,578.94 L790.74,577.32 L785.73,575.69 L780.72,574.06 L775.73,572.43 L770.74,570.81 L765.77,569.18 L760.80,567.55 L755.85,565.93 L750.90,564.30 L745.97,562.67 L741.05,561.05 L736.15,559.42 L731.25,557.79 L726.37,556.16 L721.50,554.54 L716.65,552.91 L711.81,551.28 L706.98,549.66 L702.17,548.03 L697.38,546.40 L692.60,544.78 L687.83,543.15 L683.09,541.52 L678.35,539.89 L673.64,538.27 L668.94,536.64 L664.27,535.01 L659.61,533.39 L654.96,531.76 L650.34,530.13 L645.74,528.51 L641.15,526.88 L636.59,525.25 L632.04,523.62 L627.52,522.00 L623.02,520.37 L618.54,518.74 L614.08,517.12 L609.64,515.49 L605.22,513.86 L600.83,512.24 L596.46,510.61 L592.12,508.98 L587.79,507.36 L583.49,505.73 L579.22,504.10 L574.97,502.47 L570.74,500.85 L566.54,499.22 L562.37,497.59 L558.22,495.97 L554.10,494.34 L550.00,492.71 L545.94,491.09 L541.89,489.46 L537.88,487.83 L533.89,486.20 L529.94,484.58 L526.01,482.95 L522.11,481.32 L518.23,479.70 L514.39,478.07 L510.58,476.44 L506.79,474.81 L503.04,473.19 L499.32,471.56 L495.62,469.93 L491.96,468.31 L488.33,466.68 L484.73,465.05 L481.17,463.43 L477.63,461.80 L474.13,460.17 L470.66,458.54 L467.23,456.92 L463.82,455.29 L460.45,453.66 L457.12,452.04 L453.81,450.41 L450.54,448.78 L447.31,447.16 L444.11,445.53 L440.95,443.90 L437.82,442.27 L434.72,440.65 L431.66,439.02 L428.64,437.39 L425.66,435.77 L422.71,434.14 L419.79,432.51 L416.92,430.89 L414.08,429.26 L411.27,427.63 L408.51,426.00 L405.78,424.38 L403.09,422.75 L400.44,421.12 L397.83,419.50 L395.25,417.87 L392.72,416.24 L390.22,414.62 L387.76,412.99 L385.34,411.36 L382.96,409.74 L380.62,408.11 L378.32,406.48 L376.06,404.85 L373.84,403.23 L371.66,401.60 L369.52,399.97 L367.42,398.35 L365.36,396.72 L363.34,395.09 L361.37,393.47 L359.43,391.84 L357.54,390.21 L355.68,388.58 L353.87,386.96 L352.10,385.33 L350.38,383.70 L348.69,382.08 L347.05,380.45 L345.45,378.82 L343.89,377.19 L342.37,375.57 L340.90,373.94 L339.47,372.31 L338.08,370.69 L336.74,369.06 L335.44,367.43 L334.18,365.81 L332.96,364.18 L331.79,362.55 L330.66,360.93 L329.58,359.30 L328.54,357.67 L327.54,356.04 L326.59,354.42 L325.68,352.79 L324.81,351.16 L323.99,349.54 L323.21,347.91 L322.48,346.28 L321.79,344.65 L321.15,343.03 L320.55,341.40 L319.99,339.77 L319.48,338.15 L319.01,336.52 L318.59,334.89 L318.21,333.27 L317.87,331.64 L317.58,330.01 L317.34,328.38 L317.14,326.76 L316.98,325.13 L316.87,323.50 L316.80,321.88 L316.78,320.25 L316.80,318.62 L316.87,317.00 L316.98,315.37 L317.14,313.74 L317.34,312.12 L317.58,310.49 L317.87,308.86 L318.21,307.23 L318.59,305.61 L319.01,303.98 L319.48,302.35 L319.99,300.73 L320.55,299.10 L321.15,297.47 L321.79,295.85 L322.48,294.22 L323.21,292.59 L323.99,290.96 L324.81,289.34 L325.68,287.71 L326.59,286.08 L327.54,284.46 L328.54,282.83 L329.58,281.20 L330.66,279.57 L331.79,277.95 L332.96,276.32 L334.18,274.69 L335.44,273.07 L336.74,271.44 L338.08,269.81 L339.47,268.19 L340.90,266.56 L342.37,264.93 L343.89,263.31 L345.45,261.68 L347.05,260.05 L348.69,258.42 L350.38,256.80 L352.10,255.17 L353.87,253.54 L355.68,251.92 L357.54,250.29 L359.43,248.66 L361.37,247.03 L363.34,245.41 L365.36,243.78 L367.42,242.15 L369.52,240.53 L371.66,238.90 L373.84,237.27 L376.06,235.65 L378.32,234.02 L380.62,232.39 L382.96,230.76 L385.34,229.14 L387.76,227.51 L390.22,225.88 L392.72,224.26 L395.25,222.63 L397.83,221.00 L400.44,219.38 L403.09,217.75 L405.78,216.12 L408.51,214.50 L411.27,212.87 L414.08,211.24 L416.92,209.61 L419.79,207.99 L422.71,206.36 L425.66,204.73 L428.64,203.11 L431.66,201.48 L434.72,199.85 L437.82,198.22 L440.95,196.60 L444.11,194.97 L447.31,193.34 L450.54,191.72 L453.81,190.09 L457.12,188.46 L460.45,186.84 L463.82,185.21 L467.23,183.58 L470.66,181.96 L474.13,180.33 L477.63,178.70 L481.17,177.07 L484.73,175.45 L488.33,173.82 L491.96,172.19 L495.62,170.57 L499.32,168.94 L503.04,167.31 L506.79,165.69 L510.58,164.06 L514.39,162.43 L518.23,160.80 L522.11,159.18 L526.01,157.55 L529.94,155.92 L533.89,154.30 L537.88,152.67 L541.89,151.04 L545.94,149.41 L550.00,147.79 L554.10,146.16 L558.22,144.53 L562.37,142.91 L566.54,141.28 L570.74,139.65 L574.97,138.03 L579.22,136.40 L583.49,134.77 L587.79,133.15 L592.12,131.52 L596.46,129.89 L600.83,128.26 L605.22,126.64 L609.64,125.01 L614.08,123.38 L618.54,121.76 L623.02,120.13 L627.52,118.50 L632.04,116.88 L636.59,115.25 L641.15,113.62 L645.74,111.99 L650.34,110.37 L654.96,108.74 L659.61,107.11 L664.27,105.49 L668.94,103.86 L673.64,102.23 L678.35,100.60 L683.09,98.98 L687.83,97.35 L692.60,95.72 L697.38,94.10 L702.17,92.47 L706.98,90.84 L711.81,89.22 L716.65,87.59 L721.50,85.96 L726.37,84.34 L731.25,82.71 L736.15,81.08 L741.05,79.45 L745.97,77.83 L750.90,76.20 L755.85,74.57 L760.80,72.95 L765.77,71.32 L770.74,69.69 L775.73,68.06 L780.72,66.44 L785.73,64.81 L790.74,63.18 L795.76,61.56 L800.79,59.93 L805.83,58.30 L810.87,56.68 L815.93,55.05 L820.98,53.42 L826.05,51.80 L831.12,50.17 L836.19,48.54 L841.28,46.91 L846.36,45.29 L851.45,43.66 L856.54,42.03 L861.64,40.41 L866.74,38.78 L871.85,37.15 L876.95,35.52 L882.06,33.90 L887.17,32.27 L892.28,30.64 L897.39,29.02 L902.50,27.39"/>
<path d="M1054.10,564.30 L1053.25,564.30 L1052.41,564.30 L1051.57,564.30 L1050.73,564.30 L1049.88,564.30 L1049.04,564.30 L1048.20,564.30 L1047.36,564.30 L1046.52,564.30 L1045.67,564.30 L1044.83,564.30 L1043.99,564.30 L1043.15,564.30 L1042.30,564.30 L1041.46,564.30 L1040.62,564.30 L1039.78,564.30 L1038.94,564.30 L1038.09,564.30 L1037.25,564.30 L1036.41,564.30 L1035.57,564.30 L1034.72,564.30 L1033.88,564.30 L1033.04,564.30 L1032.20,564.30 L1031.36,564.30 L1030.51,564.30 L1029.67,564.30 L1028.83,564.30 L1027.99,564.30 L1027.15,564.30 L1026.30,564.30 L1025.46,564.30 L1024.62,564.30 L1023.78,564.30 L1022.93,564.30 L1022.09,564.30 L1021.25,564.30 L1020.41,564.30 L1019.57,564.30 L1018.72,564.30 L1017.88,564.30 L1017.04,564.30 L1016.20,564.30 L1015.35,564.30 L1014.51,564.30 L1013.67,564.30 L1012.83,564.30 L1011.99,564.30 L1011.14,564.30 L1010.30,564.30 L1009.46,564.30 L1008.62,564.30 L1007.77,564.30 L1006.93,564.30 L1006.09,564.30 L1005.25,564.30 L1004.41,564.30 L1003.56,564.30 L1002.72,564.30 L1001.88,564.30 L1001.04,564.30 L1000.19,564.30 L999.35,564.30 L998.51,564.30 L997.67,564.30 L996.83,564.30 L995.98,564.30 L995.14,564.30 L994.30,564.30 L993.46,564.30 L992.62,564.30 L991.77,564.30 L990.93,564.30 L990.09,564.30 L989.25,564.30 L988.40,564.30 L987.56,564.30 L986.72,564.30 L985.88,564.30 L985.04,564.30 L984.19,564.30 L983.35,564.30 L982.51,564.30 L981.67,564.30 L980.82,564.30 L979.98,564.30 L979.14,564.30 L978.30,564.30 L977.46,564.30 L976.61,564.30 L975.77,564.30 L974.93,564.30 L974.09,564.30 L973.24,564.30 L972.40,564.30 L971.56,564.30 L970.72,564.30 L969.88,564.30 L969.03,564.30 L968.19,564.30 L967.35,564.30 L966.51,564.30 L965.66,564.30 L964.82,564.30 L963.98,564.30 L963.14,564.30 L962.30,564.30 L961.45,564.30 L960.61,564.30 L959.77,564.30 L958.93,564.30 L958.09,564.30 L957.24,564.30 L956.40,564.30 L955.56,564.30 L954.72,564.30 L953.87,564.30 L953.03,564.30 L952.19,564.30 L951.35,564.30 L950.51,564.30 L949.66,564.30 L948.82,564.30 L947.98,564.30 L947.14,564.30 L946.29,564.30 L945.45,564.30 L944.61,564.30 L943.77,564.30 L942.93,564.30 L942.08,564.30 L941.24,564.30 L940.40,564.30 L939.56,564.30 L938.71,564.30 L937.87,564.30 L937.03,564.30 L936.19,564.30 L935.35,564.30 L934.50,564.30 L933.66,564.30 L932.82,564.30 L931.98,564.30 L931.13,564.30 L930.29,564.30 L929.45,564.30 L928.61,564.30 L927.77,564.30 L926.92,564.30 L926.08,564.30 L925.24,564.30 L924.40,564.30 L923.55,564.30 L922.71,564.30 L921.87,564.30 L921.03,564.30 L920.19,564.30 L919.34,564.30 L918.50,564.30 L917.66,564.30 L916.82,564.30 L915.98,564.30 L915.13,564.30 L914.29,564.30 L913.45,564.30 L912.61,564.30 L911.76,564.30 L910.92,564.30 L910.08,564.30 L909.24,564.30 L908.40,564.30 L907.55,564.30 L906.71,564.30 L905.87,564.30 L905.03,564.30 L904.18,564.30 L903.34,564.30 L902.50,564.30 L901.66,564.30 L900.82,564.30 L899.97,564.30 L899.13,564.30 L898.29,564.30 L897.45,564.30 L896.60,564.30 L895.76,564.30 L894.92,564.30 L894.08,564.30 L893.24,564.30 L892.39,564.30 L891.55,564.30 L890.71,564.30 L889.87,564.30 L889.02,564.30 L888.18,564.30 L887.34,564.30 L886.50,564.30 L885.66,564.30 L884.81,564.30 L883.97,564.30 L883.13,564.30 L882.29,564.30 L881.45,564.30 L880.60,564.30 L879.76,564.30 L878.92,564.30 L878.08,564.30 L877.23,564.30 L876.39,564.30 L875.55,564.30 L874.71,564.30 L873.87,564.30 L873.02,564.30 L872.18,564.30 L871.34,564.30 L870.50,564.30 L869.65,564.30 L868.81,564.30 L867.97,564.30 L867.13,564.30 L866.29,564.30 L865.44,564.30 L864.60,564.30 L863.76,564.30 L862.92,564.30 L862.07,564.30 L861.23,564.30 L860.39,564.30 L859.55,564.30 L858.71,564.30 L857.86,564.30 L857.02,564.30 L856.18,564.30 L855.34,564.30 L854.49,564.30 L853.65,564.30 L852.81,564.30 L851.97,564.30 L851.13,564.30 L850.28,564.30 L849.44,564.30 L848.60,564.30 L847.76,564.30 L846.91,564.30 L846.07,564.30 L845.23,564.30 L844.39,564.30 L843.55,564.30 L842.70,564.30 L841.86,564.30 L841.02,564.30 L840.18,564.30 L839.34,564.30 L838.49,564.30 L837.65,564.30 L836.81,564.30 L835.97,564.30 L835.12,564.30 L834.28,564.30 L833.44,564.30 L832.60,564.30 L831.76,564.30 L830.91,564.30 L830.07,564.30 L829.23,564.30 L828.39,564.30 L827.54,564.30 L826.70,564.30 L825.86,564.30 L825.02,564.30 L824.18,564.30 L823.33,564.30 L822.49,564.30 L821.65,564.30 L820.81,564.30 L819.96,564.30 L819.12,564.30 L818.28,564.30 L817.44,564.30 L816.60,564.30 L815.75,564.30 L814.91,564.30 L814.07,564.30 L813.23,564.30 L812.38,564.30 L811.54,564.30 L810.70,564.30 L809.86,564.30 L809.02,564.30 L808.17,564.30 L807.33,564.30 L806.49,564.30 L805.65,564.30 L804.81,564.30 L803.96,564.30 L803.12,564.30 L802.28,564.30 L801.44,564.30 L800.59,564.30 L799.75,564.30 L798.91,564.30 L798.07,564.30 L797.23,564.30 L796.38,564.30 L795.54,564.30 L794.70,564.30 L793.86,564.30 L793.01,564.30 L792.17,564.30 L791.33,564.30 L790.49,564.30 L789.65,564.30 L788.80,564.30 L787.96,564.30 L787.12,564.30 L786.28,564.30 L785.43,564.30 L784.59,564.30 L783.75,564.30 L782.91,564.30 L782.07,564.30 L781.22,564.30 L780.38,564.30 L779.54,564.30 L778.70,564.30 L777.85,564.30 L777.01,564.30 L776.17,564.30 L775.33,564.30 L774.49,564.30 L773.64,564.30 L772.80,564.30 L771.96,564.30 L771.12,564.30 L770.28,564.30 L769.43,564.30 L768.59,564.30 L767.75,564.30 L766.91,564.30 L766.06,564.30 L765.22,564.30 L764.38,564.30 L763.54,564.30 L762.70,564.30 L761.85,564.30 L761.01,564.30 L760.17,564.30 L759.33,564.30 L758.48,564.30 L757.64,564.30 L756.80,564.30 L755.96,564.30 L755.12,564.30 L754.27,564.30 L753.43,564.30 L752.59,564.30 L751.75,564.30 L750.90,564.30"/>
<path d="M1195.36,515.49 L1193.73,515.49 L1192.11,515.49 L1190.48,515.49 L1188.85,515.49 L1187.23,515.49 L1185.60,515.49 L1183.97,515.49 L1182.34,515.49 L1180.72,515.49 L1179.09,515.49 L1177.46,515.49 L1175.84,515.49 L1174.21,515.49 L1172.58,515.49 L1170.95,515.49 L1169.33,515.49 L1167.70,515.49 L1166.07,515.49 L1164.45,515.49 L1162.82,515.49 L1161.19,515.49 L1159.57,515.49 L1157.94,515.49 L1156.31,515.49 L1154.68,515.49 L1153.06,515.49 L1151.43,515.49 L1149.80,515.49 L1148.18,515.49 L1146.55,515.49 L1144.92,515.49 L1143.30,515.49 L1141.67,515.49 L1140.04,515.49 L1138.41,515.49 L1136.79,515.49 L1135.16,515.49 L1133.53,515.49 L1131.91,515.49 L1130.28,515.49 L1128.65,515.49 L1127.03,515.49 L1125.40,515.49 L1123.77,515.49 L1122.14,515.49 L1120.52,515.49 L1118.89,515.49 L1117.26,515.49 L1115.64,515.49 L1114.01,515.49 L1112.38,515.49 L1110.76,515.49 L1109.13,515.49 L1107.50,515.49 L1105.88,515.49 L1104.25,515.49 L1102.62,515.49 L1100.99,515.49 L1099.37,515.49 L1097.74,515.49 L1096.11,515.49 L1094.49,515.49 L1092.86,515.49 L1091.23,515.49 L1089.61,515.49 L1087.98,515.49 L1086.35,515.49 L1084.72,515.49 L1083.10,515.49 L1081.47,515.49 L1079.84,515.49 L1078.22,515.49 L1076.59,515.49 L1074.96,515.49 L1073.34,515.49 L1071.71,515.49 L1070.08,515.49 L1068.45,515.49 L1066.83,515.49 L1065.20,515.49 L1063.57,515.49 L1061.95,515.49 L1060.32,515.49 L1058.69,515.49 L1057.07,515.49 L1055.44,515.49 L1053.81,515.49 L1052.18,515.49 L1050.56,515.49 L1048.93,515.49 L1047.30,515.49 L1045.68,515.49 L1044.05,515.49 L1042.42,515.49 L1040.80,515.49 L1039.17,515.49 L1037.54,515.49 L1035.91,515.49 L1034.29,515.49 L1032.66,515.49 L1031.03,515.49 L1029.41,515.49 L1027.78,515.49 L1026.15,515.49 L1024.53,515.49 L1022.90,515.49 L1021.27,515.49 L1019.64,515.49 L1018.02,515.49 L1016.39,515.49 L1014.76,515.49 L1013.14,515.49 L1011.51,515.49 L1009.88,515.49 L1008.25,515.49 L1006.63,515.49 L1005.00,515.49 L1003.37,515.49 L1001.75,515.49 L1000.12,515.49 L998.49,515.49 L996.87,515.49 L995.24,515.49 L993.61,515.49 L991.99,515.49 L990.36,515.49 L988.73,515.49 L987.10,515.49 L985.48,515.49 L983.85,515.49 L982.22,515.49 L980.60,515.49 L978.97,515.49 L977.34,515.49 L975.72,515.49 L974.09,515.49 L972.46,515.49 L970.83,515.49 L969.21,515.49 L967.58,515.49 L965.95,515.49 L964.33,515.49 L962.70,515.49 L961.07,515.49 L959.45,515.49 L957.82,515.49 L956.19,515.49 L954.56,515.49 L952.94,515.49 L951.31,515.49 L949.68,515.49 L948.06,515.49 L946.43,515.49 L944.80,515.49 L943.17,515.49 L941.55,515.49 L939.92,515.49 L938.29,515.49 L936.67,515.49 L935.04,515.49 L933.41,515.49 L931.79,515.49 L930.16,515.49 L928.53,515.49 L926.90,515.49 L925.28,515.49 L923.65,515.49 L922.02,515.49 L920.40,515.49 L918.77,515.49 L917.14,515.49 L915.52,515.49 L913.89,515.49 L912.26,515.49 L910.63,515.49 L909.01,515.49 L907.38,515.49 L905.75,515.49 L904.13,515.49 L902.50,515.49 L900.87,515.49 L899.25,515.49 L897.62,515.49 L895.99,515.49 L894.37,515.49 L892.74,515.49 L891.11,515.49 L889.48,515.49 L887.86,515.49 L886.23,515.49 L884.60,515.49 L882.98,515.49 L881.35,515.49 L879.72,515.49 L878.10,515.49 L876.47,515.49 L874.84,515.49 L873.21,515.49 L871.59,515.49 L869.96,515.49 L868.33,515.49 L866.71,515.49 L865.08,515.49 L863.45,515.49 L861.83,515.49 L860.20,515.49 L858.57,515.49 L856.94,515.49 L855.32,515.49 L853.69,515.49 L852.06,515.49 L850.44,515.49 L848.81,515.49 L847.18,515.49 L845.55,515.49 L843.93,515.49 L842.30,515.49 L840.67,515.49 L839.05,515.49 L837.42,515.49 L835.79,515.49 L834.17,515.49 L832.54,515.49 L830.91,515.49 L829.28,515.49 L827.66,515.49 L826.03,515.49 L824.40,515.49 L822.78,515.49 L821.15,515.49 L819.52,515.49 L817.90,515.49 L816.27,515.49 L814.64,515.49 L813.01,515.49 L811.39,515.49 L809.76,515.49 L808.13,515.49 L806.51,515.49 L804.88,515.49 L803.25,515.49 L801.63,515.49 L800.00,515.49 L798.37,515.49 L796.75,515.49 L795.12,515.49 L793.49,515.49 L791.86,515.49 L790.24,515.49 L788.61,515.49 L786.98,515.49 L785.36,515.49 L783.73,515.49 L782.10,515.49 L780.47,515.49 L778.85,515.49 L777.22,515.49 L775.59,515.49 L773.97,515.49 L772.34,515.49 L770.71,515.49 L769.09,515.49 L767.46,515.49 L765.83,515.49 L764.20,515.49 L762.58,515.49 L760.95,515.49 L759.32,515.49 L757.70,515.49 L756.07,515.49 L754.44,515.49 L752.82,515.49 L751.19,515.49 L749.56,515.49 L747.93,515.49 L746.31,515.49 L744.68,515.49 L743.05,515.49 L741.43,515.49 L739.80,515.49 L738.17,515.49 L736.55,515.49 L734.92,515.49 L733.29,515.49 L731.66,515.49 L730.04,515.49 L728.41,515.49 L726.78,515.49 L725.16,515.49 L723.53,515.49 L721.90,515.49 L720.28,515.49 L718.65,515.49 L717.02,515.49 L715.39,515.49 L713.77,515.49 L712.14,515.49 L710.51,515.49 L708.89,515.49 L707.26,515.49 L705.63,515.49 L704.01,515.49 L702.38,515.49 L700.75,515.49 L699.12,515.49 L697.50,515.49 L695.87,515.49 L694.24,515.49 L692.62,515.49 L690.99,515.49 L689.36,515.49 L687.74,515.49 L686.11,515.49 L684.48,515.49 L682.85,515.49 L681.23,515.49 L679.60,515.49 L677.97,515.49 L676.35,515.49 L674.72,515.49 L673.09,515.49 L671.47,515.49 L669.84,515.49 L668.21,515.49 L666.58,515.49 L664.96,515.49 L663.33,515.49 L661.70,515.49 L660.08,515.49 L658.45,515.49 L656.82,515.49 L655.20,515.49 L653.57,515.49 L651.94,515.49 L650.31,515.49 L648.69,515.49 L647.06,515.49 L645.43,515.49 L643.81,515.49 L642.18,515.49 L640.55,515.49 L638.93,515.49 L637.30,515.49 L635.67,515.49 L634.04,515.49 L632.42,515.49 L630.79,515.49 L629.16,515.49 L627.54,515.49 L625.91,515.49 L624.28,515.49 L622.66,515.49 L621.03,515.49 L619.40,515.49 L617.77,515.49 L616.15,515.49 L614.52,515.49 L612.89,515.49 L611.27,515.49 L609.64,515.49"/>
<path d="M1316.67,466.68 L1314.37,466.68 L1312.06,466.68 L1309.76,466.68 L1307.46,466.68 L1305.16,466.68 L1302.86,466.68 L1300.56,466.68 L1298.26,466.68 L1295.96,466.68 L1293.66,466.68 L1291.36,466.68 L1289.06,466.68 L1286.75,466.68 L1284.45,466.68 L1282.15,466.68 L1279.85,466.68 L1277.55,466.68 L1275.25,466.68 L1272.95,466.68 L1270.65,466.68 L1268.35,466.68 L1266.05,466.68 L1263.75,466.68 L1261.44,466.68 L1259.14,466.68 L1256.84,466.68 L1254.54,466.68 L1252.24,466.68 L1249.94,466.68 L1247.64,466.68 L1245.34,466.68 L1243.04,466.68 L1240.74,466.68 L1238.44,466.68 L1236.13,466.68 L1233.83,466.68 L1231.53,466.68 L1229.23,466.68 L1226.93,466.68 L1224.63,466.68 L1222.33,466.68 L1220.03,466.68 L1217.73,466.68 L1215.43,466.68 L1213.12,466.68 L1210.82,466.68 L1208.52,466.68 L1206.22,466.68 L1203.92,466.68 L1201.62,466.68 L1199.32,466.68 L1197.02,466.68 L1194.72,466.68 L1192.42,466.68 L1190.12,466.68 L1187.81,466.68 L1185.51,466.68 L1183.21,466.68 L1180.91,466.68 L1178.61,466.68 L1176.31,466.68 L1174.01,466.68 L1171.71,466.68 L1169.41,466.68 L1167.11,466.68 L1164.81,466.68 L1162.50,466.68 L1160.20,466.68 L1157.90,466.68 L1155.60,466.68 L1153.30,466.68 L1151.00,466.68 L1148.70,466.68 L1146.40,466.68 L1144.10,466.68 L1141.80,466.68 L1139.50,466.68 L1137.19,466.68 L1134.89,466.68 L1132.59,466.68 L1130.29,466.68 L1127.99,466.68 L1125.69,466.68 L1123.39,466.68 L1121.09,466.68 L1118.79,466.68 L1116.49,466.68 L1114.19,466.68 L1111.88,466.68 L1109.58,466.68 L1107.28,466.68 L1104.98,466.68 L1102.68,466.68 L1100.38,466.68 L1098.08,466.68 L1095.78,466.68 L1093.48,466.68 L1091.18,466.68 L1088.87,466.68 L1086.57,466.68 L1084.27,466.68 L1081.97,466.68 L1079.67,466.68 L1077.37,466.68 L1075.07,466.68 L1072.77,466.68 L1070.47,466.68 L1068.17,466.68 L1065.87,466.68 L1063.56,466.68 L1061.26,466.68 L1058.96,466.68 L1056.66,466.68 L1054.36,466.68 L1052.06,466.68 L1049.76,466.68 L1047.46,466.68 L1045.16,466.68 L1042.86,466.68 L1040.56,466.68 L1038.25,466.68 L1035.95,466.68 L1033.65,466.68 L1031.35,466.68 L1029.05,466.68 L1026.75,466.68 L1024.45,466.68 L1022.15,466.68 L1019.85,466.68 L1017.55,466.68 L1015.25,466.68 L1012.94,466.68 L1010.64,466.68 L1008.34,466.68 L1006.04,466.68 L1003.74,466.68 L1001.44,466.68 L999.14,466.68 L996.84,466.68 L994.54,466.68 L992.24,466.68 L989.94,466.68 L987.63,466.68 L985.33,466.68 L983.03,466.68 L980.73,466.68 L978.43,466.68 L976.13,466.68 L973.83,466.68 L971.53,466.68 L969.23,466.68 L966.93,466.68 L964.62,466.68 L962.32,466.68 L960.02,466.68 L957.72,466.68 L955.42,466.68 L953.12,466.68 L950.82,466.68 L948.52,466.68 L946.22,466.68 L943.92,466.68 L941.62,466.68 L939.31,466.68 L937.01,466.68 L934.71,466.68 L932.41,466.68 L930.11,466.68 L927.81,466.68 L925.51,466.68 L923.21,466.68 L920.91,466.68 L918.61,466.68 L916.31,466.68 L914.00,466.68 L911.70,466.68 L909.40,466.68 L907.10,466.68 L904.80,466.68 L902.50,466.68 L900.20,466.68 L897.90,466.68 L895.60,466.68 L893.30,466.68 L891.00,466.68 L888.69,466.68 L886.39,466.68 L884.09,466.68 L881.79,466.68 L879.49,466.68 L877.19,466.68 L874.89,466.68 L872.59,466.68 L870.29,466.68 L867.99,466.68 L865.69,466.68 L863.38,466.68 L861.08,466.68 L858.78,466.68 L856.48,466.68 L854.18,466.68 L851.88,466.68 L849.58,466.68 L847.28,466.68 L844.98,466.68 L842.68,466.68 L840.38,466.68 L838.07,466.68 L835.77,466.68 L833.47,466.68 L831.17,466.68 L828.87,466.68 L826.57,466.68 L824.27,466.68 L821.97,466.68 L819.67,466.68 L817.37,466.68 L815.06,466.68 L812.76,466.68 L810.46,466.68 L808.16,466.68 L805.86,466.68 L803.56,466.68 L801.26,466.68 L798.96,466.68 L796.66,466.68 L794.36,466.68 L792.06,466.68 L789.75,466.68 L787.45,466.68 L785.15,466.68 L782.85,466.68 L780.55,466.68 L778.25,466.68 L775.95,466.68 L773.65,466.68 L771.35,466.68 L769.05,466.68 L766.75,466.68 L764.44,466.68 L762.14,466.68 L759.84,466.68 L757.54,466.68 L755.24,466.68 L752.94,466.68 L750.64,466.68 L748.34,466.68 L746.04,466.68 L743.74,466.68 L741.44,466.68 L739.13,466.68 L736.83,466.68 L734.53,466.68 L732.23,466.68 L729.93,466.68 L727.63,466.68 L725.33,466.68 L723.03,466.68 L720.73,466.68 L718.43,466.68 L716.13,466.68 L713.82,466.68 L711.52,466.68 L709.22,466.68 L706.92,466.68 L704.62,466.68 L702.32,466.68 L700.02,466.68 L697.72,466.68 L695.42,466.68 L693.12,466.68 L690.81,466.68 L688.51,466.68 L686.21,466.68 L683.91,466.68 L681.61,466.68 L679.31,466.68 L677.01,466.68 L674.71,466.68 L672.41,466.68 L670.11,466.68 L667.81,466.68 L665.50,466.68 L663.20,466.68 L660.90,466.68 L658.60,466.68 L656.30,466.68 L654.00,466.68 L651.70,466.68 L649.40,466.68 L647.10,466.68 L644.80,466.68 L642.50,466.68 L640.19,466.68 L637.89,466.68 L635.59,466.68 L633.29,466.68 L630.99,466.68 L628.69,466.68 L626.39,466.68 L624.09,466.68 L621.79,466.68 L619.49,466.68 L617.19,466.68 L614.88,466.68 L612.58,466.68 L610.28,466.68 L607.98,466.68 L605.68,466.68 L603.38,466.68 L601.08,466.68 L598.78,466.68 L596.48,466.68 L594.18,466.68 L591.88,466.68 L589.57,466.68 L587.27,466.68 L584.97,466.68 L582.67,466.68 L580.37,466.68 L578.07,466.68 L575.77,466.68 L573.47,466.68 L571.17,466.68 L568.87,466.68 L566.56,466.68 L564.26,466.68 L561.96,466.68 L559.66,466.68 L557.36,466.68 L555.06,466.68 L552.76,466.68 L550.46,466.68 L548.16,466.68 L545.86,466.68 L543.56,466.68 L541.25,466.68 L538.95,466.68 L536.65,466.68 L534.35,466.68 L532.05,466.68 L529.75,466.68 L527.45,466.68 L525.15,466.68 L522.85,466.68 L520.55,466.68 L518.25,466.68 L515.94,466.68 L513.64,466.68 L511.34,466.68 L509.04,466.68 L506.74,466.68 L504.44,466.68 L502.14,466.68 L499.84,466.68 L497.54,466.68 L495.24,466.68 L492.94,466.68 L490.63,466.68 L488.33,466.68"/>
<path d="M1409.75,417.87 L1406.93,417.87 L1404.11,417.87 L1401.29,417.87 L1398.48,417.87 L1395.66,417.87 L1392.84,417.87 L1390.02,417.87 L1387.20,417.87 L1384.39,417.87 L1381.57,417.87 L1378.75,417.87 L1375.93,417.87 L1373.11,417.87 L1370.30,417.87 L1367.48,417.87 L1364.66,417.87 L1361.84,417.87 L1359.02,417.87 L1356.21,417.87 L1353.39,417.87 L1350.57,417.87 L1347.75,417.87 L1344.93,417.87 L1342.12,417.87 L1339.30,417.87 L1336.48,417.87 L1333.66,417.87 L1330.84,417.87 L1328.03,417.87 L1325.21,417.87 L1322.39,417.87 L1319.57,417.87 L1316.75,417.87 L1313.93,417.87 L1311.12,417.87 L1308.30,417.87 L1305.48,417.87 L1302.66,417.87 L1299.84,417.87 L1297.03,417.87 L1294.21,417.87 L1291.39,417.87 L1288.57,417.87 L1285.75,417.87 L1282.94,417.87 L1280.12,417.87 L1277.30,417.87 L1274.48,417.87 L1271.66,417.87 L1268.85,417.87 L1266.03,417.87 L1263.21,417.87 L1260.39,417.87 L1257.57,417.87 L1254.76,417.87 L1251.94,417.87 L1249.12,417.87 L1246.30,417.87 L1243.48,417.87 L1240.67,417.87 L1237.85,417.87 L1235.03,417.87 L1232.21,417.87 L1229.39,417.87 L1226.58,417.87 L1223.76,417.87 L1220.94,417.87 L1218.12,417.87 L1215.30,417.87 L1212.49,417.87 L1209.67,417.87 L1206.85,417.87 L1204.03,417.87 L1201.21,417.87 L1198.39,417.87 L1195.58,417.87 L1192.76,417.87 L1189.94,417.87 L1187.12,417.87 L1184.30,417.87 L1181.49,417.87 L1178.67,417.87 L1175.85,417.87 L1173.03,417.87 L1170.21,417.87 L1167.40,417.87 L1164.58,417.87 L1161.76,417.87 L1158.94,417.87 L1156.12,417.87 L1153.31,417.87 L1150.49,417.87 L1147.67,417.87 L1144.85,417.87 L1142.03,417.87 L1139.22,417.87 L1136.40,417.87 L1133.58,417.87 L1130.76,417.87 L1127.94,417.87 L1125.13,417.87 L1122.31,417.87 L1119.49,417.87 L1116.67,417.87 L1113.85,417.87 L1111.04,417.87 L1108.22,417.87 L1105.40,417.87 L1102.58,417.87 L1099.76,417.87 L1096.95,417.87 L1094.13,417.87 L1091.31,417.87 L1088.49,417.87 L1085.67,417.87 L1082.85,417.87 L1080.04,417.87 L1077.22,417.87 L1074.40,417.87 L1071.58,417.87 L1068.76,417.87 L1065.95,417.87 L1063.13,417.87 L1060.31,417.87 L1057.49,417.87 L1054.67,417.87 L1051.86,417.87 L1049.04,417.87 L1046.22,417.87 L1043.40,417.87 L1040.58,417.87 L1037.77,417.87 L1034.95,417.87 L1032.13,417.87 L1029.31,417.87 L1026.49,417.87 L1023.68,417.87 L1020.86,417.87 L1018.04,417.87 L1015.22,417.87 L1012.40,417.87 L1009.59,417.87 L1006.77,417.87 L1003.95,417.87 L1001.13,417.87 L998.31,417.87 L995.50,417.87 L992.68,417.87 L989.86,417.87 L987.04,417.87 L984.22,417.87 L981.41,417.87 L978.59,417.87 L975.77,417.87 L972.95,417.87 L970.13,417.87 L967.32,417.87 L964.50,417.87 L961.68,417.87 L958.86,417.87 L956.04,417.87 L953.22,417.87 L950.41,417.87 L947.59,417.87 L944.77,417.87 L941.95,417.87 L939.13,417.87 L936.32,417.87 L933.50,417.87 L930.68,417.87 L927.86,417.87 L925.04,417.87 L922.23,417.87 L919.41,417.87 L916.59,417.87 L913.77,417.87 L910.95,417.87 L908.14,417.87 L905.32,417.87 L902.50,417.87 L899.68,417.87 L896.86,417.87 L894.05,417.87 L891.23,417.87 L888.41,417.87 L885.59,417.87 L882.77,417.87 L879.96,417.87 L877.14,417.87 L874.32,417.87 L871.50,417.87 L868.68,417.87 L865.87,417.87 L863.05,417.87 L860.23,417.87 L857.41,417.87 L854.59,417.87 L851.78,417.87 L848.96,417.87 L846.14,417.87 L843.32,417.87 L840.50,417.87 L837.68,417.87 L834.87,417.87 L832.05,417.87 L829.23,417.87 L826.41,417.87 L823.59,417.87 L820.78,417.87 L817.96,417.87 L815.14,417.87 L812.32,417.87 L809.50,417.87 L806.69,417.87 L803.87,417.87 L801.05,417.87 L798.23,417.87 L795.41,417.87 L792.60,417.87 L789.78,417.87 L786.96,417.87 L784.14,417.87 L781.32,417.87 L778.51,417.87 L775.69,417.87 L772.87,417.87 L770.05,417.87 L767.23,417.87 L764.42,417.87 L761.60,417.87 L758.78,417.87 L755.96,417.87 L753.14,417.87 L750.33,417.87 L747.51,417.87 L744.69,417.87 L741.87,417.87 L739.05,417.87 L736.24,417.87 L733.42,417.87 L730.60,417.87 L727.78,417.87 L724.96,417.87 L722.15,417.87 L719.33,417.87 L716.51,417.87 L713.69,417.87 L710.87,417.87 L708.05,417.87 L705.24,417.87 L702.42,417.87 L699.60,417.87 L696.78,417.87 L693.96,417.87 L691.15,417.87 L688.33,417.87 L685.51,417.87 L682.69,417.87 L679.87,417.87 L677.06,417.87 L674.24,417.87 L671.42,417.87 L668.60,417.87 L665.78,417.87 L662.97,417.87 L660.15,417.87 L657.33,417.87 L654.51,417.87 L651.69,417.87 L648.88,417.87 L646.06,417.87 L643.24,417.87 L640.42,417.87 L637.60,417.87 L634.79,417.87 L631.97,417.87 L629.15,417.87 L626.33,417.87 L623.51,417.87 L620.70,417.87 L617.88,417.87 L615.06,417.87 L612.24,417.87 L609.42,417.87 L606.61,417.87 L603.79,417.87 L600.97,417.87 L598.15,417.87 L595.33,417.87 L592.51,417.87 L589.70,417.87 L586.88,417.87 L584.06,417.87 L581.24,417.87 L578.42,417.87 L575.61,417.87 L572.79,417.87 L569.97,417.87 L567.15,417.87 L564.33,417.87 L561.52,417.87 L558.70,417.87 L555.88,417.87 L553.06,417.87 L550.24,417.87 L547.43,417.87 L544.61,417.87 L541.79,417.87 L538.97,417.87 L536.15,417.87 L533.34,417.87 L530.52,417.87 L527.70,417.87 L524.88,417.87 L522.06,417.87 L519.25,417.87 L516.43,417.87 L513.61,417.87 L510.79,417.87 L507.97,417.87 L505.16,417.87 L502.34,417.87 L499.52,417.87 L496.70,417.87 L493.88,417.87 L491.07,417.87 L488.25,417.87 L485.43,417.87 L482.61,417.87 L479.79,417.87 L476.97,417.87 L474.16,417.87 L471.34,417.87 L468.52,417.87 L465.70,417.87 L462.88,417.87 L460.07,417.87 L457.25,417.87 L454.43,417.87 L451.61,417.87 L448.79,417.87 L445.98,417.87 L443.16,417.87 L440.34,417.87 L437.52,417.87 L434.70,417.87 L431.89,417.87 L429.07,417.87 L426.25,417.87 L423.43,417.87 L420.61,417.87 L417.80,417.87 L414.98,417.87 L412.16,417.87 L409.34,417.87 L406.52,417.87 L403.71,417.87 L400.89,417.87 L398.07,417.87 L395.25,417.87"/>
<path d="M1468.26,369.06 L1465.12,369.06 L1461.98,369.06 L1458.83,369.06 L1455.69,369.06 L1452.55,369.06 L1449.40,369.06 L1446.26,369.06 L1443.12,369.06 L1439.97,369.06 L1436.83,369.06 L1433.69,369.06 L1430.54,369.06 L1427.40,369.06 L1424.26,369.06 L1421.12,369.06 L1417.97,369.06 L1414.83,369.06 L1411.69,369.06 L1408.54,369.06 L1405.40,369.06 L1402.26,369.06 L1399.11,369.06 L1395.97,369.06 L1392.83,369.06 L1389.68,369.06 L1386.54,369.06 L1383.40,369.06 L1380.25,369.06 L1377.11,369.06 L1373.97,369.06 L1370.83,369.06 L1367.68,369.06 L1364.54,369.06 L1361.40,369.06 L1358.25,369.06 L1355.11,369.06 L1351.97,369.06 L1348.82,369.06 L1345.68,369.06 L1342.54,369.06 L1339.39,369.06 L1336.25,369.06 L1333.11,369.06 L1329.96,369.06 L1326.82,369.06 L1323.68,369.06 L1320.54,369.06 L1317.39,369.06 L1314.25,369.06 L1311.11,369.06 L1307.96,369.06 L1304.82,369.06 L1301.68,369.06 L1298.53,369.06 L1295.39,369.06 L1292.25,369.06 L1289.10,369.06 L1285.96,369.06 L1282.82,369.06 L1279.67,369.06 L1276.53,369.06 L1273.39,369.06 L1270.25,369.06 L1267.10,369.06 L1263.96,369.06 L1260.82,369.06 L1257.67,369.06 L1254.53,369.06 L1251.39,369.06 L1248.24,369.06 L1245.10,369.06 L1241.96,369.06 L1238.81,369.06 L1235.67,369.06 L1232.53,369.06 L1229.38,369.06 L1226.24,369.06 L1223.10,369.06 L1219.96,369.06 L1216.81,369.06 L1213.67,369.06 L1210.53,369.06 L1207.38,369.06 L1204.24,369.06 L1201.10,369.06 L1197.95,369.06 L1194.81,369.06 L1191.67,369.06 L1188.52,369.06 L1185.38,369.06 L1182.24,369.06 L1179.09,369.06 L1175.95,369.06 L1172.81,369.06 L1169.67,369.06 L1166.52,369.06 L1163.38,369.06 L1160.24,369.06 L1157.09,369.06 L1153.95,369.06 L1150.81,369.06 L1147.66,369.06 L1144.52,369.06 L1141.38,369.06 L1138.23,369.06 L1135.09,369.06 L1131.95,369.06 L1128.80,369.06 L1125.66,369.06 L1122.52,369.06 L1119.38,369.06 L1116.23,369.06 L1113.09,369.06 L1109.95,369.06 L1106.80,369.06 L1103.66,369.06 L1100.52,369.06 L1097.37,369.06 L1094.23,369.06 L1091.09,369.06 L1087.94,369.06 L1084.80,369.06 L1081.66,369.06 L1078.51,369.06 L1075.37,369.06 L1072.23,369.06 L1069.09,369.06 L1065.94,369.06 L1062.80,369.06 L1059.66,369.06 L1056.51,369.06 L1053.37,369.06 L1050.23,369.06 L1047.08,369.06 L1043.94,369.06 L1040.80,369.06 L1037.65,369.06 L1034.51,369.06 L1031.37,369.06 L1028.22,369.06 L1025.08,369.06 L1021.94,369.06 L1018.80,369.06 L1015.65,369.06 L1012.51,369.06 L1009.37,369.06 L1006.22,369.06 L1003.08,369.06 L999.94,369.06 L996.79,369.06 L993.65,369.06 L990.51,369.06 L987.36,369.06 L984.22,369.06 L981.08,369.06 L977.93,369.06 L974.79,369.06 L971.65,369.06 L968.51,369.06 L965.36,369.06 L962.22,369.06 L959.08,369.06 L955.93,369.06 L952.79,369.06 L949.65,369.06 L946.50,369.06 L943.36,369.06 L940.22,369.06 L937.07,369.06 L933.93,369.06 L930.79,369.06 L927.64,369.06 L924.50,369.06 L921.36,369.06 L918.22,369.06 L915.07,369.06 L911.93,369.06 L908.79,369.06 L905.64,369.06 L902.50,369.06 L899.36,369.06 L896.21,369.06 L893.07,369.06 L889.93,369.06 L886.78,369.06 L883.64,369.06 L880.50,369.06 L877.36,369.06 L874.21,369.06 L871.07,369.06 L867.93,369.06 L864.78,369.06 L861.64,369.06 L858.50,369.06 L855.35,369.06 L852.21,369.06 L849.07,369.06 L845.92,369.06 L842.78,369.06 L839.64,369.06 L836.49,369.06 L833.35,369.06 L830.21,369.06 L827.07,369.06 L823.92,369.06 L820.78,369.06 L817.64,369.06 L814.49,369.06 L811.35,369.06 L808.21,369.06 L805.06,369.06 L801.92,369.06 L798.78,369.06 L795.63,369.06 L792.49,369.06 L789.35,369.06 L786.20,369.06 L783.06,369.06 L779.92,369.06 L776.78,369.06 L773.63,369.06 L770.49,369.06 L767.35,369.06 L764.20,369.06 L761.06,369.06 L757.92,369.06 L754.77,369.06 L751.63,369.06 L748.49,369.06 L745.34,369.06 L742.20,369.06 L739.06,369.06 L735.91,369.06 L732.77,369.06 L729.63,369.06 L726.49,369.06 L723.34,369.06 L720.20,369.06 L717.06,369.06 L713.91,369.06 L710.77,369.06 L707.63,369.06 L704.48,369.06 L701.34,369.06 L698.20,369.06 L695.05,369.06 L691.91,369.06 L688.77,369.06 L685.62,369.06 L682.48,369.06 L679.34,369.06 L676.20,369.06 L673.05,369.06 L669.91,369.06 L666.77,369.06 L663.62,369.06 L660.48,369.06 L657.34,369.06 L654.19,369.06 L651.05,369.06 L647.91,369.06 L644.76,369.06 L641.62,369.06 L638.48,369.06 L635.33,369.06 L632.19,369.06 L629.05,369.06 L625.91,369.06 L622.76,369.06 L619.62,369.06 L616.48,369.06 L613.33,369.06 L610.19,369.06 L607.05,369.06 L603.90,369.06 L600.76,369.06 L597.62,369.06 L594.47,369.06 L591.33,369.06 L588.19,369.06 L585.04,369.06 L581.90,369.06 L578.76,369.06 L575.62,369.06 L572.47,369.06 L569.33,369.06 L566.19,369.06 L563.04,369.06 L559.90,369.06 L556.76,369.06 L553.61,369.06 L550.47,369.06 L547.33,369.06 L544.18,369.06 L541.04,369.06 L537.90,369.06 L534.75,369.06 L531.61,369.06 L528.47,369.06 L525.33,369.06 L522.18,369.06 L519.04,369.06 L515.90,369.06 L512.75,369.06 L509.61,369.06 L506.47,369.06 L503.32,369.06 L500.18,369.06 L497.04,369.06 L493.89,369.06 L490.75,369.06 L487.61,369.06 L484.46,369.06 L481.32,369.06 L478.18,369.06 L475.04,369.06 L471.89,369.06 L468.75,369.06 L465.61,369.06 L462.46,369.06 L459.32,369.06 L456.18,369.06 L453.03,369.06 L449.89,369.06 L446.75,369.06 L443.60,369.06 L440.46,369.06 L437.32,369.06 L434.17,369.06 L431.03,369.06 L427.89,369.06 L424.75,369.06 L421.60,369.06 L418.46,369.06 L415.32,369.06 L412.17,369.06 L409.03,369.06 L405.89,369.06 L402.74,369.06 L399.60,369.06 L396.46,369.06 L393.31,369.06 L390.17,369.06 L387.03,369.06 L383.88,369.06 L380.74,369.06 L377.60,369.06 L374.46,369.06 L371.31,369.06 L368.17,369.06 L365.03,369.06 L361.88,369.06 L358.74,369.06 L355.60,369.06 L352.45,369.06 L349.31,369.06 L346.17,369.06 L343.02,369.06 L339.88,369.06 L336.74,369.06"/>
<path d="M1488.22,320.25 L1484.97,320.25 L1481.71,320.25 L1478.46,320.25 L1475.20,320.25 L1471.95,320.25 L1468.70,320.25 L1465.44,320.25 L1462.19,320.25 L1458.93,320.25 L1455.68,320.25 L1452.43,320.25 L1449.17,320.25 L1445.92,320.25 L1442.66,320.25 L1439.41,320.25 L1436.16,320.25 L1432.90,320.25 L1429.65,320.25 L1426.39,320.25 L1423.14,320.25 L1419.89,320.25 L1416.63,320.25 L1413.38,320.25 L1410.12,320.25 L1406.87,320.25 L1403.62,320.25 L1400.36,320.25 L1397.11,320.25 L1393.85,320.25 L1390.60,320.25 L1387.35,320.25 L1384.09,320.25 L1380.84,320.25 L1377.58,320.25 L1374.33,320.25 L1371.08,320.25 L1367.82,320.25 L1364.57,320.25 L1361.31,320.25 L1358.06,320.25 L1354.81,320.25 L1351.55,320.25 L1348.30,320.25 L1345.04,320.25 L1341.79,320.25 L1338.54,320.25 L1335.28,320.25 L1332.03,320.25 L1328.77,320.25 L1325.52,320.25 L1322.27,320.25 L1319.01,320.25 L1315.76,320.25 L1312.50,320.25 L1309.25,320.25 L1306.00,320.25 L1302.74,320.25 L1299.49,320.25 L1296.23,320.25 L1292.98,320.25 L1289.73,320.25 L1286.47,320.25 L1283.22,320.25 L1279.96,320.25 L1276.71,320.25 L1273.46,320.25 L1270.20,320.25 L1266.95,320.25 L1263.69,320.25 L1260.44,320.25 L1257.19,320.25 L1253.93,320.25 L1250.68,320.25 L1247.42,320.25 L1244.17,320.25 L1240.92,320.25 L1237.66,320.25 L1234.41,320.25 L1231.15,320.25 L1227.90,320.25 L1224.65,320.25 L1221.39,320.25 L1218.14,320.25 L1214.88,320.25 L1211.63,320.25 L1208.38,320.25 L1205.12,320.25 L1201.87,320.25 L1198.61,320.25 L1195.36,320.25 L1192.11,320.25 L1188.85,320.25 L1185.60,320.25 L1182.34,320.25 L1179.09,320.25 L1175.84,320.25 L1172.58,320.25 L1169.33,320.25 L1166.07,320.25 L1162.82,320.25 L1159.57,320.25 L1156.31,320.25 L1153.06,320.25 L1149.80,320.25 L1146.55,320.25 L1143.30,320.25 L1140.04,320.25 L1136.79,320.25 L1133.53,320.25 L1130.28,320.25 L1127.03,320.25 L1123.77,320.25 L1120.52,320.25 L1117.26,320.25 L1114.01,320.25 L1110.76,320.25 L1107.50,320.25 L1104.25,320.25 L1100.99,320.25 L1097.74,320.25 L1094.49,320.25 L1091.23,320.25 L1087.98,320.25 L1084.72,320.25 L1081.47,320.25 L1078.22,320.25 L1074.96,320.25 L1071.71,320.25 L1068.45,320.25 L1065.20,320.25 L1061.95,320.25 L1058.69,320.25 L1055.44,320.25 L1052.18,320.25 L1048.93,320.25 L1045.68,320.25 L1042.42,320.25 L1039.17,320.25 L1035.91,320.25 L1032.66,320.25 L1029.41,320.25 L1026.15,320.25 L1022.90,320.25 L1019.64,320.25 L1016.39,320.25 L1013.14,320.25 L1009.88,320.25 L1006.63,320.25 L1003.37,320.25 L1000.12,320.25 L996.87,320.25 L993.61,320.25 L990.36,320.25 L987.10,320.25 L983.85,320.25 L980.60,320.25 L977.34,320.25 L974.09,320.25 L970.83,320.25 L967.58,320.25 L964.33,320.25 L961.07,320.25 L957.82,320.25 L954.56,320.25 L951.31,320.25 L948.06,320.25 L944.80,320.25 L941.55,320.25 L938.29,320.25 L935.04,320.25 L931.79,320.25 L928.53,320.25 L925.28,320.25 L922.02,320.25 L918.77,320.25 L915.52,320.25 L912.26,320.25 L909.01,320.25 L905.75,320.25 L902.50,320.25 L899.25,320.25 L895.99,320.25 L892.74,320.25 L889.48,320.25 L886.23,320.25 L882.98,320.25 L879.72,320.25 L876.47,320.25 L873.21,320.25 L869.96,320.25 L866.71,320.25 L863.45,320.25 L860.20,320.25 L856.94,320.25 L853.69,320.25 L850.44,320.25 L847.18,320.25 L843.93,320.25 L840.67,320.25 L837.42,320.25 L834.17,320.25 L830.91,320.25 L827.66,320.25 L824.40,320.25 L821.15,320.25 L817.90,320.25 L814.64,320.25 L811.39,320.25 L808.13,320.25 L804.88,320.25 L801.63,320.25 L798.37,320.25 L795.12,320.25 L791.86,320.25 L788.61,320.25 L785.36,320.25 L782.10,320.25 L778.85,320.25 L775.59,320.25 L772.34,320.25 L769.09,320.25 L765.83,320.25 L762.58,320.25 L759.32,320.25 L756.07,320.25 L752.82,320.25 L749.56,320.25 L746.31,320.25 L743.05,320.25 L739.80,320.25 L736.55,320.25 L733.29,320.25 L730.04,320.25 L726.78,320.25 L723.53,320.25 L720.28,320.25 L717.02,320.25 L713.77,320.25 L710.51,320.25 L707.26,320.25 L704.01,320.25 L700.75,320.25 L697.50,320.25 L694.24,320.25 L690.99,320.25 L687.74,320.25 L684.48,320.25 L681.23,320.25 L677.97,320.25 L674.72,320.25 L671.47,320.25 L668.21,320.25 L664.96,320.25 L661.70,320.25 L658.45,320.25 L655.20,320.25 L651.94,320.25 L648.69,320.25 L645.43,320.25 L642.18,320.25 L638.93,320.25 L635.67,320.25 L632.42,320.25 L629.16,320.25 L625.91,320.25 L622.66,320.25 L619.40,320.25 L616.15,320.25 L612.89,320.25 L609.64,320.25 L606.39,320.25 L603.13,320.25 L599.88,320.25 L596.62,320.25 L593.37,320.25 L590.12,320.25 L586.86,320.25 L583.61,320.25 L580.35,320.25 L577.10,320.25 L573.85,320.25 L570.59,320.25 L567.34,320.25 L564.08,320.25 L560.83,320.25 L557.58,320.25 L554.32,320.25 L551.07,320.25 L547.81,320.25 L544.56,320.25 L541.31,320.25 L538.05,320.25 L534.80,320.25 L531.54,320.25 L528.29,320.25 L525.04,320.25 L521.78,320.25 L518.53,320.25 L515.27,320.25 L512.02,320.25 L508.77,320.25 L505.51,320.25 L502.26,320.25 L499.00,320.25 L495.75,320.25 L492.50,320.25 L489.24,320.25 L485.99,320.25 L482.73,320.25 L479.48,320.25 L476.23,320.25 L472.97,320.25 L469.72,320.25 L466.46,320.25 L463.21,320.25 L459.96,320.25 L456.70,320.25 L453.45,320.25 L450.19,320.25 L446.94,320.25 L443.69,320.25 L440.43,320.25 L437.18,320.25 L433.92,320.25 L430.67,320.25 L427.42,320.25 L424.16,320.25 L420.91,320.25 L417.65,320.25 L414.40,320.25 L411.15,320.25 L407.89,320.25 L404.64,320.25 L401.38,320.25 L398.13,320.25 L394.88,320.25 L391.62,320.25 L388.37,320.25 L385.11,320.25 L381.86,320.25 L378.61,320.25 L375.35,320.25 L372.10,320.25 L368.84,320.25 L365.59,320.25 L362.34,320.25 L359.08,320.25 L355.83,320.25 L352.57,320.25 L349.32,320.25 L346.07,320.25 L342.81,320.25 L339.56,320.25 L336.30,320.25 L333.05,320.25 L329.80,320.25 L326.54,320.25 L323.29,320.25 L320.03,320.25 L316.78,320.25"/>
<path d="M1468.26,271.44 L1465.12,271.44 L1461.98,271.44 L1458.83,271.44 L1455.69,271.44 L1452.55,271.44 L1449.40,271.44 L1446.26,271.44 L1443.12,271.44 L1439.97,271.44 L1436.83,271.44 L1433.69,271.44 L1430.54,271.44 L1427.40,271.44 L1424.26,271.44 L1421.12,271.44 L1417.97,271.44 L1414.83,271.44 L1411.69,271.44 L1408.54,271.44 L1405.40,271.44 L1402.26,271.44 L1399.11,271.44 L1395.97,271.44 L1392.83,271.44 L1389.68,271.44 L1386.54,271.44 L1383.40,271.44 L1380.25,271.44 L1377.11,271.44 L1373.97,271.44 L1370.83,271.44 L1367.68,271.44 L1364.54,271.44 L1361.40,271.44 L1358.25,271.44 L1355.11,271.44 L1351.97,271.44 L1348.82,271.44 L1345.68,271.44 L1342.54,271.44 L1339.39,271.44 L1336.25,271.44 L1333.11,271.44 L1329.96,271.44 L1326.82,271.44 L1323.68,271.44 L1320.54,271.44 L1317.39,271.44 L1314.25,271.44 L1311.11,271.44 L1307.96,271.44 L1304.82,271.44 L1301.68,271.44 L1298.53,271.44 L1295.39,271.44 L1292.25,271.44 L1289.10,271.44 L1285.96,271.44 L1282.82,271.44 L1279.67,271.44 L1276.53,271.44 L1273.39,271.44 L1270.25,271.44 L1267.10,271.44 L1263.96,271.44 L1260.82,271.44 L1257.67,271.44 L1254.53,271.44 L1251.39,271.44 L1248.24,271.44 L1245.10,271.44 L1241.96,271.44 L1238.81,271.44 L1235.67,271.44 L1232.53,271.44 L1229.38,271.44 L1226.24,271.44 L1223.10,271.44 L1219.96,271.44 L1216.81,271.44 L1213.67,271.44 L1210.53,271.44 L1207.38,271.44 L1204.24,271.44 L1201.10,271.44 L1197.95,271.44 L1194.81,271.44 L1191.67,271.44 L1188.52,271.44 L1185.38,271.44 L1182.24,271.44 L1179.09,271.44 L1175.95,271.44 L1172.81,271.44 L1169.67,271.44 L1166.52,271.44 L1163.38,271.44 L1160.24,271.44 L1157.09,271.44 L1153.95,271.44 L1150.81,271.44 L1147.66,271.44 L1144.52,271.44 L1141.38,271.44 L1138.23,271.44 L1135.09,271.44 L1131.95,271.44 L1128.80,271.44 L1125.66,271.44 L1122.52,271.44 L1119.38,271.44 L1116.23,271.44 L1113.09,271.44 L1109.95,271.44 L1106.80,271.44 L1103.66,271.44 L1100.52,271.44 L1097.37,271.44 L1094.23,271.44 L1091.09,271.44 L1087.94,271.44 L1084.80,271.44 L1081.66,271.44 L1078.51,271.44 L1075.37,271.44 L1072.23,271.44 L1069.09,271.44 L1065.94,271.44 L1062.80,271.44 L1059.66,271.44 L1056.51,271.44 L1053.37,271.44 L1050.23,271.44 L1047.08,271.44 L1043.94,271.44 L1040.80,271.44 L1037.65,271.44 L1034.51,271.44 L1031.37,271.44 L1028.22,271.44 L1025.08,271.44 L1021.94,271.44 L1018.80,271.44 L1015.65,271.44 L1012.51,271.44 L1009.37,271.44 L1006.22,271.44 L1003.08,271.44 L999.94,271.44 L996.79,271.44 L993.65,271.44 L990.51,271.44 L987.36,271.44 L984.22,271.44 L981.08,271.44 L977.93,271.44 L974.79,271.44 L971.65,271.44 L968.51,271.44 L965.36,271.44 L962.22,271.44 L959.08,271.44 L955.93,271.44 L952.79,271.44 L949.65,271.44 L946.50,271.44 L943.36,271.44 L940.22,271.44 L937.07,271.44 L933.93,271.44 L930.79,271.44 L927.64,271.44 L924.50,271.44 L921.36,271.44 L918.22,271.44 L915.07,271.44 L911.93,271.44 L908.79,271.44 L905.64,271.44 L902.50,271.44 L899.36,271.44 L896.21,271.44 L893.07,271.44 L889.93,271.44 L886.78,271.44 L883.64,271.44 L880.50,271.44 L877.36,271.44 L874.21,271.44 L871.07,271.44 L867.93,271.44 L864.78,271.44 L861.64,271.44 L858.50,271.44 L855.35,271.44 L852.21,271.44 L849.07,271.44 L845.92,271.44 L842.78,271.44 L839.64,271.44 L836.49,271.44 L833.35,271.44 L830.21,271.44 L827.07,271.44 L823.92,271.44 L820.78,271.44 L817.64,271.44 L814.49,271.44 L811.35,271.44 L808.21,271.44 L805.06,271.44 L801.92,271.44 L798.78,271.44 L795.63,271.44 L792.49,271.44 L789.35,271.44 L786.20,271.44 L783.06,271.44 L779.92,271.44 L776.78,271.44 L773.63,271.44 L770.49,271.44 L767.35,271.44 L764.20,271.44 L761.06,271.44 L757.92,271.44 L754.77,271.44 L751.63,271.44 L748.49,271.44 L745.34,271.44 L742.20,271.44 L739.06,271.44 L735.91,271.44 L732.77,271.44 L729.63,271.44 L726.49,271.44 L723.34,271.44 L720.20,271.44 L717.06,271.44 L713.91,271.44 L710.77,271.44 L707.63,271.44 L704.48,271.44 L701.34,271.44 L698.20,271.44 L695.05,271.44 L691.91,271.44 L688.77,271.44 L685.62,271.44 L682.48,271.44 L679.34,271.44 L676.20,271.44 L673.05,271.44 L669.91,271.44 L666.77,271.44 L663.62,271.44 L660.48,271.44 L657.34,271.44 L654.19,271.44 L651.05,271.44 L647.91,271.44 L644.76,271.44 L641.62,271.44 L638.48,271.44 L635.33,271.44 L632.19,271.44 L629.05,271.44 L625.91,271.44 L622.76,271.44 L619.62,271.44 L616.48,271.44 L613.33,271.44 L610.19,271.44 L607.05,271.44 L603.90,271.44 L600.76,271.44 L597.62,271.44 L594.47,271.44 L591.33,271.44 L588.19,271.44 L585.04,271.44 L581.90,271.44 L578.76,271.44 L575.62,271.44 L572.47,271.44 L569.33,271.44 L566.19,271.44 L563.04,271.44 L559.90,271.44 L556.76,271.44 L553.61,271.44 L550.47,271.44 L547.33,271.44 L544.18,271.44 L541.04,271.44 L537.90,271.44 L534.75,271.44 L531.61,271.44 L528.47,271.44 L525.33,271.44 L522.18,271.44 L519.04,271.44 L515.90,271.44 L512.75,271.44 L509.61,271.44 L506.47,271.44 L503.32,271.44 L500.18,271.44 L497.04,271.44 L493.89,271.44 L490.75,271.44 L487.61,271.44 L484.46,271.44 L481.32,271.44 L478.18,271.44 L475.04,271.44 L471.89,271.44 L468.75,271.44 L465.61,271.44 L462.46,271.44 L459.32,271.44 L456.18,271.44 L453.03,271.44 L449.89,271.44 L446.75,271.44 L443.60,271.44 L440.46,271.44 L437.32,271.44 L434.17,271.44 L431.03,271.44 L427.89,271.44 L424.75,271.44 L421.60,271.44 L418.46,271.44 L415.32,271.44 L412.17,271.44 L409.03,271.44 L405.89,271.44 L402.74,271.44 L399.60,271.44 L396.46,271.44 L393.31,271.44 L390.17,271.44 L387.03,271.44 L383.88,271.44 L380.74,271.44 L377.60,271.44 L374.46,271.44 L371.31,271.44 L368.17,271.44 L365.03,271.44 L361.88,271.44 L358.74,271.44 L355.60,271.44 L352.45,271.44 L349.31,271.44 L346.17,271.44 L343.02,271.44 L339.88,271.44 L336.74,271.44"/>
<path d="M1409.75,222.63 L1406.93,222.63 L1404.11,222.63 L1401.29,222.63 L1398.48,222.63 L1395.66,222.63 L1392.84,222.63 L1390.02,222.63 L1387.20,222.63 L1384.39,222.63 L1381.57,222.63 L1378.75,222.63 L1375.93,222.63 L1373.11,222.63 L1370.30,222.63 L1367.48,222.63 L1364.66,222.63 L1361.84,222.63 L1359.02,222.63 L1356.21,222.63 L1353.39,222.63 L1350.57,222.63 L1347.75,222.63 L1344.93,222.63 L1342.12,222.63 L1339.30,222.63 L1336.48,222.63 L1333.66,222.63 L1330.84,222.63 L1328.03,222.63 L1325.21,222.63 L1322.39,222.63 L1319.57,222.63 L1316.75,222.63 L1313.93,222.63 L1311.12,222.63 L1308.30,222.63 L1305.48,222.63 L1302.66,222.63 L1299.84,222.63 L1297.03,222.63 L1294.21,222.63 L1291.39,222.63 L1288.57,222.63 L1285.75,222.63 L1282.94,222.63 L1280.12,222.63 L1277.30,222.63 L1274.48,222.63 L1271.66,222.63 L1268.85,222.63 L1266.03,222.63 L1263.21,222.63 L1260.39,222.63 L1257.57,222.63 L1254.76,222.63 L1251.94,222.63 L1249.12,222.63 L1246.30,222.63 L1243.48,222.63 L1240.67,222.63 L1237.85,222.63 L1235.03,222.63 L1232.21,222.63 L1229.39,222.63 L1226.58,222.63 L1223.76,222.63 L1220.94,222.63 L1218.12,222.63 L1215.30,222.63 L1212.49,222.63 L1209.67,222.63 L1206.85,222.63 L1204.03,222.63 L1201.21,222.63 L1198.39,222.63 L1195.58,222.63 L1192.76,222.63 L1189.94,222.63 L1187.12,222.63 L1184.30,222.63 L1181.49,222.63 L1178.67,222.63 L1175.85,222.63 L1173.03,222.63 L1170.21,222.63 L1167.40,222.63 L1164.58,222.63 L1161.76,222.63 L1158.94,222.63 L1156.12,222.63 L1153.31,222.63 L1150.49,222.63 L1147.67,222.63 L1144.85,222.63 L1142.03,222.63 L1139.22,222.63 L1136.40,222.63 L1133.58,222.63 L1130.76,222.63 L1127.94,222.63 L1125.13,222.63 L1122.31,222.63 L1119.49,222.63 L1116.67,222.63 L1113.85,222.63 L1111.04,222.63 L1108.22,222.63 L1105.40,222.63 L1102.58,222.63 L1099.76,222.63 L1096.95,222.63 L1094.13,222.63 L1091.31,222.63 L1088.49,222.63 L1085.67,222.63 L1082.85,222.63 L1080.04,222.63 L1077.22,222.63 L1074.40,222.63 L1071.58,222.63 L1068.76,222.63 L1065.95,222.63 L1063.13,222.63 L1060.31,222.63 L1057.49,222.63 L1054.67,222.63 L1051.86,222.63 L1049.04,222.63 L1046.22,222.63 L1043.40,222.63 L1040.58,222.63 L1037.77,222.63 L1034.95,222.63 L1032.13,222.63 L1029.31,222.63 L1026.49,222.63 L1023.68,222.63 L1020.86,222.63 L1018.04,222.63 L1015.22,222.63 L1012.40,222.63 L1009.59,222.63 L1006.77,222.63 L1003.95,222.63 L1001.13,222.63 L998.31,222.63 L995.50,222.63 L992.68,222.63 L989.86,222.63 L987.04,222.63 L984.22,222.63 L981.41,222.63 L978.59,222.63 L975.77,222.63 L972.95,222.63 L970.13,222.63 L967.32,222.63 L964.50,222.63 L961.68,222.63 L958.86,222.63 L956.04,222.63 L953.22,222.63 L950.41,222.63 L947.59,222.63 L944.77,222.63 L941.95,222.63 L939.13,222.63 L936.32,222.63 L933.50,222.63 L930.68,222.63 L927.86,222.63 L925.04,222.63 L922.23,222.63 L919.41,222.63 L916.59,222.63 L913.77,222.63 L910.95,222.63 L908.14,222.63 L905.32,222.63 L902.50,222.63 L899.68,222.63 L896.86,222.63 L894.05,222.63 L891.23,222.63 L888.41,222.63 L885.59,222.63 L882.77,222.63 L879.96,222.63 L877.14,222.63 L874.32,222.63 L871.50,222.63 L868.68,222.63 L865.87,222.63 L863.05,222.63 L860.23,222.63 L857.41,222.63 L854.59,222.63 L851.78,222.63 L848.96,222.63 L846.14,222.63 L843.32,222.63 L840.50,222.63 L837.68,222.63 L834.87,222.63 L832.05,222.63 L829.23,222.63 L826.41,222.63 L823.59,222.63 L820.78,222.63 L817.96,222.63 L815.14,222.63 L812.32,222.63 L809.50,222.63 L806.69,222.63 L803.87,222.63 L801.05,222.63 L798.23,222.63 L795.41,222.63 L792.60,222.63 L789.78,222.63 L786.96,222.63 L784.14,222.63 L781.32,222.63 L778.51,222.63 L775.69,222.63 L772.87,222.63 L770.05,222.63 L767.23,222.63 L764.42,222.63 L761.60,222.63 L758.78,222.63 L755.96,222.63 L753.14,222.63 L750.33,222.63 L747.51,222.63 L744.69,222.63 L741.87,222.63 L739.05,222.63 L736.24,222.63 L733.42,222.63 L730.60,222.63 L727.78,222.63 L724.96,222.63 L722.15,222.63 L719.33,222.63 L716.51,222.63 L713.69,222.63 L710.87,222.63 L708.05,222.63 L705.24,222.63 L702.42,222.63 L699.60,222.63 L696.78,222.63 L693.96,222.63 L691.15,222.63 L688.33,222.63 L685.51,222.63 L682.69,222.63 L679.87,222.63 L677.06,222.63 L674.24,222.63 L671.42,222.63 L668.60,222.63 L665.78,222.63 L662.97,222.63 L660.15,222.63 L657.33,222.63 L654.51,222.63 L651.69,222.63 L648.88,222.63 L646.06,222.63 L643.24,222.63 L640.42,222.63 L637.60,222.63 L634.79,222.63 L631.97,222.63 L629.15,222.63 L626.33,222.63 L623.51,222.63 L620.70,222.63 L617.88,222.63 L615.06,222.63 L612.24,222.63 L609.42,222.63 L606.61,222.63 L603.79,222.63 L600.97,222.63 L598.15,222.63 L595.33,222.63 L592.51,222.63 L589.70,222.63 L586.88,222.63 L584.06,222.63 L581.24,222.63 L578.42,222.63 L575.61,222.63 L572.79,222.63 L569.97,222.63 L567.15,222.63 L564.33,222.63 L561.52,222.63 L558.70,222.63 L555.88,222.63 L553.06,222.63 L550.24,222.63 L547.43,222.63 L544.61,222.63 L541.79,222.63 L538.97,222.63 L536.15,222.63 L533.34,222.63 L530.52,222.63 L527.70,222.63 L524.88,222.63 L522.06,222.63 L519.25,222.63 L516.43,222.63 L513.61,222.63 L510.79,222.63 L507.97,222.63 L505.16,222.63 L502.34,222.63 L499.52,222.63 L496.70,222.63 L493.88,222.63 L491.07,222.63 L488.25,222.63 L485.43,222.63 L482.61,222.63 L479.79,222.63 L476.97,222.63 L474.16,222.63 L471.34,222.63 L468.52,222.63 L465.70,222.63 L462.88,222.63 L460.07,222.63 L457.25,222.63 L454.43,222.63 L451.61,222.63 L448.79,222.63 L445.98,222.63 L443.16,222.63 L440.34,222.63 L437.52,222.63 L434.70,222.63 L431.89,222.63 L429.07,222.63 L426.25,222.63 L423.43,222.63 L420.61,222.63 L417.80,222.63 L414.98,222.63 L412.16,222.63 L409.34,222.63 L406.52,222.63 L403.71,222.63 L400.89,222.63 L398.07,222.63 L395.25,222.63"/>
<path d="M1316.67,173.82 L1314.37,173.82 L1312.06,173.82 L1309.76,173.82 L1307.46,173.82 L1305.16,173.82 L1302.86,173.82 L1300.56,173.82 L1298.26,173.82 L1295.96,173.82 L1293.66,173.82 L1291.36,173.82 L1289.06,173.82 L1286.75,173.82 L1284.45,173.82 L1282.15,173.82 L1279.85,173.82 L1277.55,173.82 L1275.25,173.82 L1272.95,173.82 L1270.65,173.82 L1268.35,173.82 L1266.05,173.82 L1263.75,173.82 L1261.44,173.82 L1259.14,173.82 L1256.84,173.82 L1254.54,173.82 L1252.24,173.82 L1249.94,173.82 L1247.64,173.82 L1245.34,173.82 L1243.04,173.82 L1240.74,173.82 L1238.44,173.82 L1236.13,173.82 L1233.83,173.82 L1231.53,173.82 L1229.23,173.82 L1226.93,173.82 L1224.63,173.82 L1222.33,173.82 L1220.03,173.82 L1217.73,173.82 L1215.43,173.82 L1213.12,173.82 L1210.82,173.82 L1208.52,173.82 L1206.22,173.82 L1203.92,173.82 L1201.62,173.82 L1199.32,173.82 L1197.02,173.82 L1194.72,173.82 L1192.42,173.82 L1190.12,173.82 L1187.81,173.82 L1185.51,173.82 L1183.21,173.82 L1180.91,173.82 L1178.61,173.82 L1176.31,173.82 L1174.01,173.82 L1171.71,173.82 L1169.41,173.82 L1167.11,173.82 L1164.81,173.82 L1162.50,173.82 L1160.20,173.82 L1157.90,173.82 L1155.60,173.82 L1153.30,173.82 L1151.00,173.82 L1148.70,173.82 L1146.40,173.82 L1144.10,173.82 L1141.80,173.82 L1139.50,173.82 L1137.19,173.82 L1134.89,173.82 L1132.59,173.82 L1130.29,173.82 L1127.99,173.82 L1125.69,173.82 L1123.39,173.82 L1121.09,173.82 L1118.79,173.82 L1116.49,173.82 L1114.19,173.82 L1111.88,173.82 L1109.58,173.82 L1107.28,173.82 L1104.98,173.82 L1102.68,173.82 L1100.38,173.82 L1098.08,173.82 L1095.78,173.82 L1093.48,173.82 L1091.18,173.82 L1088.87,173.82 L1086.57,173.82 L1084.27,173.82 L1081.97,173.82 L1079.67,173.82 L1077.37,173.82 L1075.07,173.82 L1072.77,173.82 L1070.47,173.82 L1068.17,173.82 L1065.87,173.82 L1063.56,173.82 L1061.26,173.82 L1058.96,173.82 L1056.66,173.82 L1054.36,173.82 L1052.06,173.82 L1049.76,173.82 L1047.46,173.82 L1045.16,173.82 L1042.86,173.82 L1040.56,173.82 L1038.25,173.82 L1035.95,173.82 L1033.65,173.82 L1031.35,173.82 L1029.05,173.82 L1026.75,173.82 L1024.45,173.82 L1022.15,173.82 L1019.85,173.82 L1017.55,173.82 L1015.25,173.82 L1012.94,173.82 L1010.64,173.82 L1008.34,173.82 L1006.04,173.82 L1003.74,173.82 L1001.44,173.82 L999.14,173.82 L996.84,173.82 L994.54,173.82 L992.24,173.82 L989.94,173.82 L987.63,173.82 L985.33,173.82 L983.03,173.82 L980.73,173.82 L978.43,173.82 L976.13,173.82 L973.83,173.82 L971.53,173.82 L969.23,173.82 L966.93,173.82 L964.62,173.82 L962.32,173.82 L960.02,173.82 L957.72,173.82 L955.42,173.82 L953.12,173.82 L950.82,173.82 L948.52,173.82 L946.22,173.82 L943.92,173.82 L941.62,173.82 L939.31,173.82 L937.01,173.82 L934.71,173.82 L932.41,173.82 L930.11,173.82 L927.81,173.82 L925.51,173.82 L923.21,173.82 L920.91,173.82 L918.61,173.82 L916.31,173.82 L914.00,173.82 L911.70,173.82 L909.40,173.82 L907.10,173.82 L904.80,173.82 L902.50,173.82 L900.20,173.82 L897.90,173.82 L895.60,173.82 L893.30,173.82 L891.00,173.82 L888.69,173.82 L886.39,173.82 L884.09,173.82 L881.79,173.82 L879.49,173.82 L877.19,173.82 L874.89,173.82 L872.59,173.82 L870.29,173.82 L867.99,173.82 L865.69,173.82 L863.38,173.82 L861.08,173.82 L858.78,173.82 L856.48,173.82 L854.18,173.82 L851.88,173.82 L849.58,173.82 L847.28,173.82 L844.98,173.82 L842.68,173.82 L840.38,173.82 L838.07,173.82 L835.77,173.82 L833.47,173.82 L831.17,173.82 L828.87,173.82 L826.57,173.82 L824.27,173.82 L821.97,173.82 L819.67,173.82 L817.37,173.82 L815.06,173.82 L812.76,173.82 L810.46,173.82 L808.16,173.82 L805.86,173.82 L803.56,173.82 L801.26,173.82 L798.96,173.82 L796.66,173.82 L794.36,173.82 L792.06,173.82 L789.75,173.82 L787.45,173.82 L785.15,173.82 L782.85,173.82 L780.55,173.82 L778.25,173.82 L775.95,173.82 L773.65,173.82 L771.35,173.82 L769.05,173.82 L766.75,173.82 L764.44,173.82 L762.14,173.82 L759.84,173.82 L757.54,173.82 L755.24,173.82 L752.94,173.82 L750.64,173.82 L748.34,173.82 L746.04,173.82 L743.74,173.82 L741.44,173.82 L739.13,173.82 L736.83,173.82 L734.53,173.82 L732.23,173.82 L729.93,173.82 L727.63,173.82 L725.33,173.82 L723.03,173.82 L720.73,173.82 L718.43,173.82 L716.13,173.82 L713.82,173.82 L711.52,173.82 L709.22,173.82 L706.92,173.82 L704.62,173.82 L702.32,173.82 L700.02,173.82 L697.72,173.82 L695.42,173.82 L693.12,173.82 L690.81,173.82 L688.51,173.82 L686.21,173.82 L683.91,173.82 L681.61,173.82 L679.31,173.82 L677.01,173.82 L674.71,173.82 L672.41,173.82 L670.11,173.82 L667.81,173.82 L665.50,173.82 L663.20,173.82 L660.90,173.82 L658.60,173.82 L656.30,173.82 L654.00,173.82 L651.70,173.82 L649.40,173.82 L647.10,173.82 L644.80,173.82 L642.50,173.82 L640.19,173.82 L637.89,173.82 L635.59,173.82 L633.29,173.82 L630.99,173.82 L628.69,173.82 L626.39,173.82 L624.09,173.82 L621.79,173.82 L619.49,173.82 L617.19,173.82 L614.88,173.82 L612.58,173.82 L610.28,173.82 L607.98,173.82 L605.68,173.82 L603.38,173.82 L601.08,173.82 L598.78,173.82 L596.48,173.82 L594.18,173.82 L591.88,173.82 L589.57,173.82 L587.27,173.82 L584.97,173.82 L582.67,173.82 L580.37,173.82 L578.07,173.82 L575.77,173.82 L573.47,173.82 L571.17,173.82 L568.87,173.82 L566.56,173.82 L564.26,173.82 L561.96,173.82 L559.66,173.82 L557.36,173.82 L555.06,173.82 L552.76,173.82 L550.46,173.82 L548.16,173.82 L545.86,173.82 L543.56,173.82 L541.25,173.82 L538.95,173.82 L536.65,173.82 L534.35,173.82 L532.05,173.82 L529.75,173.82 L527.45,173.82 L525.15,173.82 L522.85,173.82 L520.55,173.82 L518.25,173.82 L515.94,173.82 L513.64,173.82 L511.34,173.82 L509.04,173.82 L506.74,173.82 L504.44,173.82 L502.14,173.82 L499.84,173.82 L497.54,173.82 L495.24,173.82 L492.94,173.82 L490.63,173.82 L488.33,173.82"/>
<path d="M1195.36,125.01 L1193.73,125.01 L1192.11,125.01 L1190.48,125.01 L1188.85,125.01 L1187.23,125.01 L1185.60,125.01 L1183.97,125.01 L1182.34,125.01 L1180.72,125.01 L1179.09,125.01 L1177.46,125.01 L1175.84,125.01 L1174.21,125.01 L1172.58,125.01 L1170.95,125.01 L1169.33,125.01 L1167.70,125.01 L1166.07,125.01 L1164.45,125.01 L1162.82,125.01 L1161.19,125.01 L1159.57,125.01 L1157.94,125.01 L1156.31,125.01 L1154.68,125.01 L1153.06,125.01 L1151.43,125.01 L1149.80,125.01 L1148.18,125.01 L1146.55,125.01 L1144.92,125.01 L1143.30,125.01 L1141.67,125.01 L1140.04,125.01 L1138.41,125.01 L1136.79,125.01 L1135.16,125.01 L1133.53,125.01 L1131.91,125.01 L1130.28,125.01 L1128.65,125.01 L1127.03,125.01 L1125.40,125.01 L1123.77,125.01 L1122.14,125.01 L1120.52,125.01 L1118.89,125.01 L1117.26,125.01 L1115.64,125.01 L1114.01,125.01 L1112.38,125.01 L1110.76,125.01 L1109.13,125.01 L1107.50,125.01 L1105.88,125.01 L1104.25,125.01 L1102.62,125.01 L1100.99,125.01 L1099.37,125.01 L1097.74,125.01 L1096.11,125.01 L1094.49,125.01 L1092.86,125.01 L1091.23,125.01 L1089.61,125.01 L1087.98,125.01 L1086.35,125.01 L1084.72,125.01 L1083.10,125.01 L1081.47,125.01 L1079.84,125.01 L1078.22,125.01 L1076.59,125.01 L1074.96,125.01 L1073.34,125.01 L1071.71,125.01 L1070.08,125.01 L1068.45,125.01 L1066.83,125.01 L1065.20,125.01 L1063.57,125.01 L1061.95,125.01 L1060.32,125.01 L1058.69,125.01 L1057.07,125.01 L1055.44,125.01 L1053.81,125.01 L1052.18,125.01 L1050.56,125.01 L1048.93,125.01 L1047.30,125.01 L1045.68,125.01 L1044.05,125.01 L1042.42,125.01 L1040.80,125.01 L1039.17,125.01 L1037.54,125.01 L1035.91,125.01 L1034.29,125.01 L1032.66,125.01 L1031.03,125.01 L1029.41,125.01 L1027.78,125.01 L1026.15,125.01 L1024.53,125.01 L1022.90,125.01 L1021.27,125.01 L1019.64,125.01 L1018.02,125.01 L1016.39,125.01 L1014.76,125.01 L1013.14,125.01 L1011.51,125.01 L1009.88,125.01 L1008.25,125.01 L1006.63,125.01 L1005.00,125.01 L1003.37,125.01 L1001.75,125.01 L1000.12,125.01 L998.49,125.01 L996.87,125.01 L995.24,125.01 L993.61,125.01 L991.99,125.01 L990.36,125.01 L988.73,125.01 L987.10,125.01 L985.48,125.01 L983.85,125.01 L982.22,125.01 L980.60,125.01 L978.97,125.01 L977.34,125.01 L975.72,125.01 L974.09,125.01 L972.46,125.01 L970.83,125.01 L969.21,125.01 L967.58,125.01 L965.95,125.01 L964.33,125.01 L962.70,125.01 L961.07,125.01 L959.45,125.01 L957.82,125.01 L956.19,125.01 L954.56,125.01 L952.94,125.01 L951.31,125.01 L949.68,125.01 L948.06,125.01 L946.43,125.01 L944.80,125.01 L943.17,125.01 L941.55,125.01 L939.92,125.01 L938.29,125.01 L936.67,125.01 L935.04,125.01 L933.41,125.01 L931.79,125.01 L930.16,125.01 L928.53,125.01 L926.90,125.01 L925.28,125.01 L923.65,125.01 L922.02,125.01 L920.40,125.01 L918.77,125.01 L917.14,125.01 L915.52,125.01 L913.89,125.01 L912.26,125.01 L910.63,125.01 L909.01,125.01 L907.38,125.01 L905.75,125.01 L904.13,125.01 L902.50,125.01 L900.87,125.01 L899.25,125.01 L897.62,125.01 L895.99,125.01 L894.37,125.01 L892.74,125.01 L891.11,125.01 L889.48,125.01 L887.86,125.01 L886.23,125.01 L884.60,125.01 L882.98,125.01 L881.35,125.01 L879.72,125.01 L878.10,125.01 L876.47,125.01 L874.84,125.01 L873.21,125.01 L871.59,125.01 L869.96,125.01 L868.33,125.01 L866.71,125.01 L865.08,125.01 L863.45,125.01 L861.83,125.01 L860.20,125.01 L858.57,125.01 L856.94,125.01 L855.32,125.01 L853.69,125.01 L852.06,125.01 L850.44,125.01 L848.81,125.01 L847.18,125.01 L845.55,125.01 L843.93,125.01 L842.30,125.01 L840.67,125.01 L839.05,125.01 L837.42,125.01 L835.79,125.01 L834.17,125.01 L832.54,125.01 L830.91,125.01 L829.28,125.01 L827.66,125.01 L826.03,125.01 L824.40,125.01 L822.78,125.01 L821.15,125.01 L819.52,125.01 L817.90,125.01 L816.27,125.01 L814.64,125.01 L813.01,125.01 L811.39,125.01 L809.76,125.01 L808.13,125.01 L806.51,125.01 L804.88,125.01 L803.25,125.01 L801.63,125.01 L800.00,125.01 L798.37,125.01 L796.75,125.01 L795.12,125.01 L793.49,125.01 L791.86,125.01 L790.24,125.01 L788.61,125.01 L786.98,125.01 L785.36,125.01 L783.73,125.01 L782.10,125.01 L780.47,125.01 L778.85,125.01 L777.22,125.01 L775.59,125.01 L773.97,125.01 L772.34,125.01 L770.71,125.01 L769.09,125.01 L767.46,125.01 L765.83,125.01 L764.20,125.01 L762.58,125.01 L760.95,125.01 L759.32,125.01 L757.70,125.01 L756.07,125.01 L754.44,125.01 L752.82,125.01 L751.19,125.01 L749.56,125.01 L747.93,125.01 L746.31,125.01 L744.68,125.01 L743.05,125.01 L741.43,125.01 L739.80,125.01 L738.17,125.01 L736.55,125.01 L734.92,125.01 L733.29,125.01 L731.66,125.01 L730.04,125.01 L728.41,125.01 L726.78,125.01 L725.16,125.01 L723.53,125.01 L721.90,125.01 L720.28,125.01 L718.65,125.01 L717.02,125.01 L715.39,125.01 L713.77,125.01 L712.14,125.01 L710.51,125.01 L708.89,125.01 L707.26,125.01 L705.63,125.01 L704.01,125.01 L702.38,125.01 L700.75,125.01 L699.12,125.01 L697.50,125.01 L695.87,125.01 L694.24,125.01 L692.62,125.01 L690.99,125.01 L689.36,125.01 L687.74,125.01 L686.11,125.01 L684.48,125.01 L682.85,125.01 L681.23,125.01 L679.60,125.01 L677.97,125.01 L676.35,125.01 L674.72,125.01 L673.09,125.01 L671.47,125.01 L669.84,125.01 L668.21,125.01 L666.58,125.01 L664.96,125.01 L663.33,125.01 L661.70,125.01 L660.08,125.01 L658.45,125.01 L656.82,125.01 L655.20,125.01 L653.57,125.01 L651.94,125.01 L650.31,125.01 L648.69,125.01 L647.06,125.01 L645.43,125.01 L643.81,125.01 L642.18,125.01 L640.55,125.01 L638.93,125.01 L637.30,125.01 L635.67,125.01 L634.04,125.01 L632.42,125.01 L630.79,125.01 L629.16,125.01 L627.54,125.01 L625.91,125.01 L624.28,125.01 L622.66,125.01 L621.03,125.01 L619.40,125.01 L617.77,125.01 L616.15,125.01 L614.52,125.01 L612.89,125.01 L611.27,125.01 L609.64,125.01"/>
<path d="M1054.10,76.20 L1053.25,76.20 L1052.41,76.20 L1051.57,76.20 L1050.73,76.20 L1049.88,76.20 L1049.04,76.20 L1048.20,76.20 L1047.36,76.20 L1046.52,76.20 L1045.67,76.20 L1044.83,76.20 L1043.99,76.20 L1043.15,76.20 L1042.30,76.20 L1041.46,76.20 L1040.62,76.20 L1039.78,76.20 L1038.94,76.20 L1038.09,76.20 L1037.25,76.20 L1036.41,76.20 L1035.57,76.20 L1034.72,76.20 L1033.88,76.20 L1033.04,76.20 L1032.20,76.20 L1031.36,76.20 L1030.51,76.20 L1029.67,76.20 L1028.83,76.20 L1027.99,76.20 L1027.15,76.20 L1026.30,76.20 L1025.46,76.20 L1024.62,76.20 L1023.78,76.20 L1022.93,76.20 L1022.09,76.20 L1021.25,76.20 L1020.41,76.20 L1019.57,76.20 L1018.72,76.20 L1017.88,76.20 L1017.04,76.20 L1016.20,76.20 L1015.35,76.20 L1014.51,76.20 L1013.67,76.20 L1012.83,76.20 L1011.99,76.20 L1011.14,76.20 L1010.30,76.20 L1009.46,76.20 L1008.62,76.20 L1007.77,76.20 L1006.93,76.20 L1006.09,76.20 L1005.25,76.20 L1004.41,76.20 L1003.56,76.20 L1002.72,76.20 L1001.88,76.20 L1001.04,76.20 L1000.19,76.20 L999.35,76.20 L998.51,76.20 L997.67,76.20 L996.83,76.20 L995.98,76.20 L995.14,76.20 L994.30,76.20 L993.46,76.20 L992.62,76.20 L991.77,76.20 L990.93,76.20 L990.09,76.20 L989.25,76.20 L988.40,76.20 L987.56,76.20 L986.72,76.20 L985.88,76.20 L985.04,76.20 L984.19,76.20 L983.35,76.20 L982.51,76.20 L981.67,76.20 L980.82,76.20 L979.98,76.20 L979.14,76.20 L978.30,76.20 L977.46,76.20 L976.61,76.20 L975.77,76.20 L974.93,76.20 L974.09,76.20 L973.24,76.20 L972.40,76.20 L971.56,76.20 L970.72,76.20 L969.88,76.20 L969.03,76.20 L968.19,76.20 L967.35,76.20 L966.51,76.20 L965.66,76.20 L964.82,76.20 L963.98,76.20 L963.14,76.20 L962.30,76.20 L961.45,76.20 L960.61,76.20 L959.77,76.20 L958.93,76.20 L958.09,76.20 L957.24,76.20 L956.40,76.20 L955.56,76.20 L954.72,76.20 L953.87,76.20 L953.03,76.20 L952.19,76.20 L951.35,76.20 L950.51,76.20 L949.66,76.20 L948.82,76.20 L947.98,76.20 L947.14,76.20 L946.29,76.20 L945.45,76.20 L944.61,76.20 L943.77,76.20 L942.93,76.20 L942.08,76.20 L941.24,76.20 L940.40,76.20 L939.56,76.20 L938.71,76.20 L937.87,76.20 L937.03,76.20 L936.19,76.20 L935.35,76.20 L934.50,76.20 L933.66,76.20 L932.82,76.20 L931.98,76.20 L931.13,76.20 L930.29,76.20 L929.45,76.20 L928.61,76.20 L927.77,76.20 L926.92,76.20 L926.08,76.20 L925.24,76.20 L924.40,76.20 L923.55,76.20 L922.71,76.20 L921.87,76.20 L921.03,76.20 L920.19,76.20 L919.34,76.20 L918.50,76.20 L917.66,76.20 L916.82,76.20 L915.98,76.20 L915.13,76.20 L914.29,76.20 L913.45,76.20 L912.61,76.20 L911.76,76.20 L910.92,76.20 L910.08,76.20 L909.24,76.20 L908.40,76.20 L907.55,76.20 L906.71,76.20 L905.87,76.20 L905.03,76.20 L904.18,76.20 L903.34,76.20 L902.50,76.20 L901.66,76.20 L900.82,76.20 L899.97,76.20 L899.13,76.20 L898.29,76.20 L897.45,76.20 L896.60,76.20 L895.76,76.20 L894.92,76.20 L894.08,76.20 L893.24,76.20 L892.39,76.20 L891.55,76.20 L890.71,76.20 L889.87,76.20 L889.02,76.20 L888.18,76.20 L887.34,76.20 L886.50,76.20 L885.66,76.20 L884.81,76.20 L883.97,76.20 L883.13,76.20 L882.29,76.20 L881.45,76.20 L880.60,76.20 L879.76,76.20 L878.92,76.20 L878.08,76.20 L877.23,76.20 L876.39,76.20 L875.55,76.20 L874.71,76.20 L873.87,76.20 L873.02,76.20 L872.18,76.20 L871.34,76.20 L870.50,76.20 L869.65,76.20 L868.81,76.20 L867.97,76.20 L867.13,76.20 L866.29,76.20 L865.44,76.20 L864.60,76.20 L863.76,76.20 L862.92,76.20 L862.07,76.20 L861.23,76.20 L860.39,76.20 L859.55,76.20 L858.71,76.20 L857.86,76.20 L857.02,76.20 L856.18,76.20 L855.34,76.20 L854.49,76.20 L853.65,76.20 L852.81,76.20 L851.97,76.20 L851.13,76.20 L850.28,76.20 L849.44,76.20 L848.60,76.20 L847.76,76.20 L846.91,76.20 L846.07,76.20 L845.23,76.20 L844.39,76.20 L843.55,76.20 L842.70,76.20 L841.86,76.20 L841.02,76.20 L840.18,76.20 L839.34,76.20 L838.49,76.20 L837.65,76.20 L836.81,76.20 L835.97,76.20 L835.12,76.20 L834.28,76.20 L833.44,76.20 L832.60,76.20 L831.76,76.20 L830.91,76.20 L830.07,76.20 L829.23,76.20 L828.39,76.20 L827.54,76.20 L826.70,76.20 L825.86,76.20 L825.02,76.20 L824.18,76.20 L823.33,76.20 L822.49,76.20 L821.65,76.20 L820.81,76.20 L819.96,76.20 L819.12,76.20 L818.28,76.20 L817.44,76.20 L816.60,76.20 L815.75,76.20 L814.91,76.20 L814.07,76.20 L813.23,76.20 L812.38,76.20 L811.54,76.20 L810.70,76.20 L809.86,76.20 L809.02,76.20 L808.17,76.20 L807.33,76.20 L806.49,76.20 L805.65,76.20 L804.81,76.20 L803.96,76.20 L803.12,76.20 L802.28,76.20 L801.44,76.20 L800.59,76.20 L799.75,76.20 L798.91,76.20 L798.07,76.20 L797.23,76.20 L796.38,76.20 L795.54,76.20 L794.70,76.20 L793.86,76.20 L793.01,76.20 L792.17,76.20 L791.33,76.20 L790.49,76.20 L789.65,76.20 L788.80,76.20 L787.96,76.20 L787.12,76.20 L786.28,76.20 L785.43,76.20 L784.59,76.20 L783.75,76.20 L782.91,76.20 L782.07,76.20 L781.22,76.20 L780.38,76.20 L779.54,76.20 L778.70,76.20 L777.85,76.20 L777.01,76.20 L776.17,76.20 L775.33,76.20 L774.49,76.20 L773.64,76.20 L772.80,76.20 L771.96,76.20 L771.12,76.20 L770.28,76.20 L769.43,76.20 L768.59,76.20 L767.75,76.20 L766.91,76.20 L766.06,76.20 L765.22,76.20 L764.38,76.20 L763.54,76.20 L762.70,76.20 L761.85,76.20 L761.01,76.20 L760.17,76.20 L759.33,76.20 L758.48,76.20 L757.64,76.20 L756.80,76.20 L755.96,76.20 L755.12,76.20 L754.27,76.20 L753.43,76.20 L752.59,76.20 L751.75,76.20 L750.90,76.20"/>
</g>
<g fill="#8c8c8c" font-size="11" text-anchor="middle">
<text x="312.9" y="330.0">+180</text>
<circle cx="329.5" cy="322.7" r="1.1" fill="none" stroke="#8c8c8c" stroke-width="0.7"/>
<text x="410.8" y="330.0">+150</text>
<circle cx="427.4" cy="322.7" r="1.1" fill="none" stroke="#8c8c8c" stroke-width="0.7"/>
<text x="508.7" y="330.0">+120</text>
<circle cx="525.3" cy="322.7" r="1.1" fill="none" stroke="#8c8c8c" stroke-width="0.7"/>
<text x="606.6" y="330.0">+90</text>
<circle cx="620.1" cy="322.7" r="1.1" fill="none" stroke="#8c8c8c" stroke-width="0.7"/>
<text x="704.5" y="330.0">+60</text>
<circle cx="718.0" cy="322.7" r="1.1" fill="none" stroke="#8c8c8c" stroke-width="0.7"/>
<text x="802.4" y="330.0">+30</text>
<circle cx="815.9" cy="322.7" r="1.1" fill="none" stroke="#8c8c8c" stroke-width="0.7"/>
<text x="900.3" y="330.0">+0</text>
<circle cx="910.8" cy="322.7" r="1.1" fill="none" stroke="#8c8c8c" stroke-width="0.7"/>
<text x="998.2" y="330.0">+330</text>
<circle cx="1014.8" cy="322.7" r="1.1" fill="none" stroke="#8c8c8c" stroke-width="0.7"/>
<text x="1096.1" y="330.0">+300</text>
<circle cx="1112.7" cy="322.7" r="1.1" fill="none" stroke="#8c8c8c" stroke-width="0.7"/>
<text x="1194.0" y="330.0">+270</text>
<circle cx="1210.6" cy="322.7" r="1.1" fill="none" stroke="#8c8c8c" stroke-width="0.7"/>
<text x="1291.9" y="330.0">+240</text>
<circle cx="1308.5" cy="322.7" r="1.1" fill="none" stroke="#8c8c8c" stroke-width="0.7"/>
<text x="1389.8" y="330.0">+210</text>
<circle cx="1406.4" cy="322.7" r="1.1" fill="none" stroke="#8c8c8c" stroke-width="0.7"/>
<text x="1487.7" y="330.0">+180</text>
<circle cx="1504.3" cy="322.7" r="1.1" fill="none" stroke="#8c8c8c" stroke-width="0.7"/>
<text x="901.0" y="25.7">+90</text>
<circle cx="914.5" cy="18.4" r="1.1" fill="none" stroke="#8c8c8c" stroke-width="0.7"/>
<text x="901.0" y="123.3">+60</text>
<circle cx="914.5" cy="116.0" r="1.1" fill="none" stroke="#8c8c8c" stroke-width="0.7"/>
<text x="901.0" y="220.9">+30</text>
<circle cx="914.5" cy="213.6" r="1.1" fill="none" stroke="#8c8c8c" stroke-width="0.7"/>
<text x="901.0" y="429.2">−30</text>
<circle cx="914.5" cy="421.9" r="1.1" fill="none" stroke="#8c8c8c" stroke-width="0.7"/>
<text x="901.0" y="526.8">−60</text>
<circle cx="914.5" cy="519.5" r="1.1" fill="none" stroke="#8c8c8c" stroke-width="0.7"/>
<text x="901.0" y="624.4">−90</text>
<circle cx="914.5" cy="617.1" r="1.1" fill="none" stroke="#8c8c8c" stroke-width="0.7"/>
</g>
<g fill="none" stroke="#7a7a7a" stroke-width="1" stroke-dasharray="1 2.4">
<path d="M366.00,242.00 C372.83,239.67 391.83,232.17 407.00,228.00 C422.17,223.83 440.33,220.50 457.00,217.00 C473.67,213.50 489.33,210.17 507.00,207.00 C524.67,203.83 542.67,200.83 563.00,198.00 C583.33,195.17 608.83,193.67 629.00,190.00 C649.17,186.33 663.67,180.33 684.00,176.00 C704.33,171.67 731.17,165.00 751.00,164.00 C770.83,163.00 783.17,166.83 803.00,170.00 C822.83,173.17 852.17,178.67 870.00,183.00 C887.83,187.33 903.33,193.83 910.00,196.00"/>
<path d="M440.00,198.00 C447.33,195.67 465.50,189.67 484.00,184.00 C502.50,178.33 528.67,170.00 551.00,164.00 C573.33,158.00 597.67,152.00 618.00,148.00 C638.33,144.00 660.00,141.17 673.00,140.00 C686.00,138.83 688.50,139.50 696.00,141.00 C703.50,142.50 709.83,145.83 718.00,149.00 C726.17,152.17 740.50,158.17 745.00,160.00"/>
<path d="M700.00,172.00 C704.83,170.17 720.17,164.17 729.00,161.00 C737.83,157.83 743.33,154.55 753.00,153.00 C762.67,151.45 773.00,150.53 787.00,151.70 C801.00,152.87 823.67,156.45 837.00,160.00 C850.33,163.55 858.17,168.00 867.00,173.00 C875.83,178.00 886.17,187.17 890.00,190.00"/>
<path d="M700.00,156.00 C706.67,152.83 726.67,143.00 740.00,137.00 C753.33,131.00 766.67,125.00 780.00,120.00 C793.33,115.00 807.67,109.83 820.00,107.00 C832.33,104.17 844.00,103.17 854.00,103.00 C864.00,102.83 870.67,102.83 880.00,106.00 C889.33,109.17 901.67,116.33 910.00,122.00 C918.33,127.67 923.33,134.33 930.00,140.00 C936.67,145.67 943.33,149.67 950.00,156.00 C956.67,162.33 963.33,170.33 970.00,178.00 C976.67,185.67 983.33,194.00 990.00,202.00 C996.67,210.00 1003.33,218.33 1010.00,226.00 C1016.67,233.67 1025.67,243.00 1030.00,248.00 C1034.33,253.00 1035.00,254.67 1036.00,256.00"/>
<path d="M834.00,181.00 C840.00,184.17 859.00,194.50 870.00,200.00 C881.00,205.50 889.83,209.50 900.00,214.00 C910.17,218.50 925.83,224.83 931.00,227.00"/>
<path d="M900.00,199.00 C903.67,204.83 914.67,222.83 922.00,234.00 C929.33,245.17 937.17,257.17 944.00,266.00 C950.83,274.83 959.83,283.50 963.00,287.00"/>
<path d="M656.00,408.00 C663.33,404.00 682.67,393.33 700.00,384.00 C717.33,374.67 740.00,362.17 760.00,352.00 C780.00,341.83 803.00,331.33 820.00,323.00 C837.00,314.67 848.67,309.00 862.00,302.00 C875.33,295.00 883.83,288.90 900.00,281.00 C916.17,273.10 944.00,261.00 959.00,254.60 C974.00,248.20 984.83,244.60 990.00,242.60"/>
<path d="M684.00,437.00 C688.50,428.83 702.00,403.17 711.00,388.00 C720.00,372.83 729.83,357.83 738.00,346.00 C746.17,334.17 749.67,328.83 760.00,317.00 C770.33,305.17 786.67,287.83 800.00,275.00 C813.33,262.17 825.67,252.17 840.00,240.00 C854.33,227.83 878.33,208.33 886.00,202.00"/>
<path d="M687.00,259.00 C683.67,266.83 673.33,290.83 667.00,306.00 C660.67,321.17 652.83,337.17 649.00,350.00 C645.17,362.83 643.67,370.00 644.00,383.00 C644.33,396.00 649.33,418.50 651.00,428.00 C652.67,437.50 653.50,438.00 654.00,440.00"/>
<path d="M451.60,284.20 C456.90,280.58 470.88,270.22 483.40,262.50 C495.92,254.78 513.47,245.13 526.70,237.90 C539.93,230.67 550.75,224.63 562.80,219.10 C574.85,213.57 586.13,208.78 599.00,204.70 C611.87,200.62 623.17,198.22 640.00,194.60 C656.83,190.98 690.00,184.93 700.00,183.00"/>
<path d="M503.60,292.80 C509.83,286.78 529.93,266.83 541.00,256.70 C552.07,246.57 560.33,239.22 570.00,232.00 C579.67,224.78 587.33,218.90 599.00,213.40 C610.67,207.90 623.17,203.57 640.00,199.00 C656.83,194.43 690.00,188.17 700.00,186.00"/>
</g>
<g stroke="#8a8a8a" stroke-width="1.5">
<line x1="886.0" y1="202.0" x2="891.5" y2="198.0"/>
<line x1="931.1" y1="226.7" x2="944.4" y2="236.7"/>
<line x1="963.3" y1="286.7" x2="972.2" y2="295.6"/>
<line x1="1035.6" y1="255.6" x2="1044.4" y2="266.7"/>
<line x1="687.3" y1="240.3" x2="698.4" y2="249.3"/>
<line x1="720.4" y1="233.3" x2="729.3" y2="225.3"/>
<line x1="744.4" y1="242.0" x2="747.0" y2="246.2"/>
</g>
<path d="M456.00,231.00 C458.83,230.50 466.33,229.50 473.00,228.00 C479.67,226.50 486.17,225.33 496.00,222.00 C505.83,218.67 520.83,212.17 532.00,208.00 C543.17,203.83 552.17,201.00 563.00,197.00 C573.83,193.00 587.17,187.33 597.00,184.00 C606.83,180.67 609.83,180.33 622.00,177.00 C634.17,173.67 653.67,167.33 670.00,164.00 C686.33,160.67 706.17,158.28 720.00,157.00 C733.83,155.72 743.33,155.30 753.00,156.30 C762.67,157.30 769.67,159.05 778.00,163.00 C786.33,166.95 794.67,173.33 803.00,180.00 C811.33,186.67 819.83,194.67 828.00,203.00 C836.17,211.33 845.67,222.75 852.00,230.00 C858.33,237.25 862.83,242.83 866.00,246.50 C869.17,250.17 870.17,251.08 871.00,252.00" fill="none" stroke="#2f6c8e" stroke-width="1.39" stroke-dasharray="1.39 2.29"/>
<path d="M442.00,242.00 C446.33,241.00 459.00,238.50 468.00,236.00 C477.00,233.50 485.67,230.83 496.00,227.00 C506.33,223.17 517.00,217.17 530.00,213.00 C543.00,208.83 561.00,205.17 574.00,202.00 C587.00,198.83 596.83,196.17 608.00,194.00 C619.17,191.83 629.33,190.28 641.00,189.00 C652.67,187.72 666.17,186.00 678.00,186.30 C689.83,186.60 703.67,189.22 712.00,190.80 C720.33,192.38 722.92,193.93 728.00,195.80 C733.08,197.67 740.08,200.97 742.50,202.00" fill="none" stroke="#2f6c8e" stroke-width="1.39" stroke-dasharray="1.39 2.29"/>
<path d="M455.00,232.00 C458.00,231.83 460.17,231.00 473.00,231.00 C485.83,231.00 519.00,231.23 532.00,232.00 C545.00,232.77 544.33,234.03 551.00,235.60 C557.67,237.17 565.83,239.73 572.00,241.40 C578.17,243.07 583.00,244.37 588.00,245.60 C593.00,246.83 598.00,247.73 602.00,248.80 C606.00,249.87 610.33,251.47 612.00,252.00" fill="none" stroke="#2f6c8e" stroke-width="1.39" stroke-dasharray="1.39 2.29"/>
<path d="M442.00,242.00 C447.17,241.17 458.33,237.83 473.00,237.00 C487.67,236.17 517.00,236.80 530.00,237.00 C543.00,237.20 544.00,237.12 551.00,238.20 C558.00,239.28 565.00,241.57 572.00,243.50 C579.00,245.43 585.92,247.33 593.00,249.80 C600.08,252.27 607.40,254.93 614.50,258.30 C621.60,261.67 628.57,266.30 635.60,270.00 C642.63,273.70 649.67,276.73 656.70,280.50 C663.73,284.27 672.70,289.68 677.80,292.60 C682.90,295.52 685.72,297.10 687.30,298.00" fill="none" stroke="#2f6c8e" stroke-width="1.39" stroke-dasharray="1.39 2.29"/>
<path d="M714.00,242.00 C715.67,241.22 718.93,238.90 724.00,237.30 C729.07,235.70 736.55,234.17 744.40,232.40 C752.25,230.63 762.20,228.32 771.10,226.70 C780.00,225.08 788.92,223.67 797.80,222.70 C806.68,221.73 819.03,221.18 824.40,220.90 C829.77,220.62 829.07,220.98 830.00,221.00" fill="none" stroke="#7ad151" stroke-width="1.39" stroke-dasharray="1.39 2.29"/>
<path d="M720.00,255.00 C720.50,254.72 718.93,254.92 723.00,253.30 C727.07,251.68 736.38,247.82 744.40,245.30 C752.42,242.78 762.20,240.48 771.10,238.20 C780.00,235.92 788.92,233.67 797.80,231.60 C806.68,229.53 814.03,227.28 824.40,225.80 C834.77,224.32 849.23,223.37 860.00,222.70 C870.77,222.03 877.17,221.52 889.00,221.80 C900.83,222.08 920.80,223.23 931.00,224.40 C941.20,225.57 947.00,228.07 950.20,228.80" fill="none" stroke="#7ad151" stroke-width="1.39" stroke-dasharray="1.39 2.29"/>
<path d="M720.00,261.30 C720.50,260.87 718.93,260.40 723.00,258.70 C727.07,257.00 736.38,253.77 744.40,251.10 C752.42,248.43 762.20,245.15 771.10,242.70 C780.00,240.25 788.92,238.48 797.80,236.40 C806.68,234.32 814.03,231.97 824.40,230.20 C834.77,228.43 845.57,226.83 860.00,225.80 C874.43,224.77 896.83,223.55 911.00,224.00 C925.17,224.45 934.83,226.67 945.00,228.50 C955.17,230.33 967.50,233.92 972.00,235.00" fill="none" stroke="#7ad151" stroke-width="1.39" stroke-dasharray="1.39 2.29"/>
<path d="M706.70,332.00 C708.42,330.83 709.78,329.17 717.00,325.00 C724.22,320.83 738.33,312.67 750.00,307.00 C761.67,301.33 775.33,295.33 787.00,291.00 C798.67,286.67 808.67,284.67 820.00,281.00 C831.33,277.33 841.17,273.50 855.00,269.00 C868.83,264.50 888.00,257.83 903.00,254.00 C918.00,250.17 931.83,248.23 945.00,246.00 C958.17,243.77 974.67,241.65 982.00,240.60 C989.33,239.55 987.83,239.85 989.00,239.70" fill="none" stroke="#cbe120" stroke-width="1.39" stroke-dasharray="1.39 2.29"/>
<path d="M529.60,310.00 C533.17,306.50 543.93,295.00 551.00,289.00 C558.07,283.00 565.00,278.17 572.00,274.00 C579.00,269.83 585.92,267.50 593.00,264.00 C600.08,260.50 607.40,256.77 614.50,253.00 C621.60,249.23 627.73,245.23 635.60,241.40 C643.47,237.57 650.42,234.95 661.70,230.00 C672.98,225.05 689.42,217.12 703.30,211.70 C717.18,206.28 731.10,201.82 745.00,197.50 C758.90,193.18 772.82,188.58 786.70,185.80 C800.58,183.02 815.80,181.35 828.30,180.80 C840.80,180.25 850.58,180.68 861.70,182.50 C872.82,184.32 885.28,188.78 895.00,191.70 C904.72,194.62 911.67,196.95 920.00,200.00 C928.33,203.05 936.17,205.93 945.00,210.00 C953.83,214.07 965.33,220.13 973.00,224.40 C980.67,228.67 988.00,233.73 991.00,235.60" fill="none" stroke="#27ad81" stroke-width="2.5" stroke-dasharray="1.39 2.29"/>
<line x1="866.0" y1="246.5" x2="871.0" y2="252.0" stroke="#2f6c8e" stroke-width="1.25"/>
<line x1="728.0" y1="195.8" x2="742.5" y2="202.0" stroke="#2f6c8e" stroke-width="1.25"/>
<line x1="602.0" y1="248.8" x2="612.0" y2="252.0" stroke="#2f6c8e" stroke-width="1.25"/>
<line x1="677.8" y1="292.6" x2="687.3" y2="298.0" stroke="#2f6c8e" stroke-width="1.25"/>
<line x1="830.0" y1="221.0" x2="837.0" y2="221.1" stroke="#7ad151" stroke-width="1.25"/>
<line x1="950.2" y1="228.8" x2="1008.9" y2="243.9" stroke="#7ad151" stroke-width="1.25"/>
<line x1="972.0" y1="235.0" x2="1000.0" y2="244.1" stroke="#7ad151" stroke-width="1.25"/>
<line x1="991.0" y1="236.3" x2="1002.0" y2="239.0" stroke="#27ad81" stroke-width="1.25"/>
<line x1="1001.0" y1="241.7" x2="1004.0" y2="244.1" stroke="#27ad81" stroke-width="1.25"/>
<line x1="989.0" y1="239.7" x2="1002.0" y2="239.0" stroke="#cbe120" stroke-width="1.25"/>
<g fill="#ff6a45">
<rect x="869.9" y="250.9" width="2.2" height="2.2"/>
<rect x="741.4" y="200.9" width="2.2" height="2.2"/>
<rect x="610.9" y="250.9" width="2.2" height="2.2"/>
<rect x="686.2" y="296.9" width="2.2" height="2.2"/>
<rect x="835.9" y="220.0" width="2.2" height="2.2"/>
<rect x="1007.8" y="242.8" width="2.2" height="2.2"/>
<rect x="998.9" y="243.0" width="2.2" height="2.2"/>
<rect x="1002.9" y="243.0" width="2.2" height="2.2"/>
<rect x="1000.9" y="237.9" width="2.2" height="2.2"/>
<rect x="997.8" y="240.6" width="2.2" height="2.2"/>
</g>
<g fill="none" stroke-width="2">
<ellipse cx="438.5" cy="247.5" rx="39.3" ry="14.4" transform="rotate(-31.3 438.5 247.5)" stroke="#2f6c8e"/>
<ellipse cx="714.8" cy="237.7" rx="30.9" ry="18.9" transform="rotate(-38.5 714.8 237.7)" stroke="#7ad151"/>
<circle cx="534.5" cy="314.5" r="24.5" stroke="#27ad81"/>
<circle cx="697.8" cy="310.6" r="24.6" stroke="#cbe120"/>
</g>
<g stroke="#ff0000" stroke-width="1.35">
<path d="M452.1,231.3h7M455.6,227.8v7"/>
<path d="M438.7,242.2h7M442.2,238.7v7"/>
<path d="M434.8,251.1h7M438.3,247.6v7"/>
<path d="M710.7,241.8h7M714.2,238.3v7"/>
<path d="M716.5,255.1h7M720.0,251.6v7"/>
<path d="M716.5,261.3h7M720.0,257.8v7"/>
<path d="M526.1,310.0h7M529.6,306.5v7"/>
<path d="M703.2,332.2h7M706.7,328.7v7"/>
</g>
<g fill="#fff" font-size="11" text-anchor="middle">
<text x="435.4" y="251.7">LEO</text>
<text x="713.5" y="240.9">NTA</text>
<text x="533.4" y="316.8">AMO</text>
<text x="698.2" y="314.2">OER</text>
</g>
<g fill="#fff" font-size="13.9" class="mono">
<text class="mono" x="316.5" y="30.0" xml:space="preserve">DE000J</text>
<text class="mono" x="316.5" y="43.2" xml:space="preserve">Beg: 20251117 21:12:56 (sol = 235.42°)</text>
<text class="mono" x="316.5" y="56.8" xml:space="preserve">End: 20251118 04:33:31 (sol = 235.73°)</text>
<text class="mono" x="316.5" y="68.5" xml:space="preserve">--------------------------------------</text>
<text class="mono" x="316.5" y="81.8" xml:space="preserve">...: 8</text>
<text class="mono" x="316.5" y="94.8" xml:space="preserve">LEO: 4</text>
<text class="mono" x="316.5" y="108.0" xml:space="preserve">NTA: 3</text>
<text class="mono" x="316.5" y="121.3" xml:space="preserve">AMO: 2</text>
<text class="mono" x="316.5" y="134.7" xml:space="preserve">OER: 1</text>
</g>
<g fill="#5c5c5c" font-size="31">
<text transform="translate(149.30,643.06) rotate(-90) scale(0.8352,0.97)" text-anchor="end">APR</text>
<text transform="translate(294.90,644.53) rotate(-90) scale(0.8715,0.97)" text-anchor="end">MAY</text>
<text transform="translate(436.00,641.76) rotate(-90) scale(0.8209,0.97)" text-anchor="end">JUN</text>
<text transform="translate(576.70,641.71) rotate(-90) scale(0.7944,0.97)" text-anchor="end">JUL</text>
<text transform="translate(724.40,642.25) rotate(-90) scale(0.8264,0.97)" text-anchor="end">AUG</text>
<text transform="translate(872.20,644.19) rotate(-90) scale(0.8101,0.97)" text-anchor="end">SEP</text>
<text transform="translate(1017.30,643.90) rotate(-90) scale(0.8740,0.97)" text-anchor="end">OCT</text>
<text transform="translate(1170.70,645.00) rotate(-90) scale(0.8837,0.97)" text-anchor="end">NOV</text>
<text transform="translate(1320.00,645.23) rotate(-90) scale(0.8667,0.97)" text-anchor="end">DEC</text>
<text transform="translate(1469.30,641.12) rotate(-90) scale(0.8396,0.97)" text-anchor="end">JAN</text>
<text transform="translate(1628.20,646.37) rotate(-90) scale(0.8265,0.97)" text-anchor="end">FEB</text>
<text transform="translate(1766.20,644.83) rotate(-90) scale(0.8718,0.97)" text-anchor="end">MAR</text>
</g>
<g stroke="#c3e023" stroke-width="4">
<line x1="106.0" y1="834.0" x2="130.0" y2="834.0"/>
<line x1="165.0" y1="834.0" x2="344.9" y2="834.0"/>
<line x1="365.9" y1="834.0" x2="624.9" y2="834.0"/>
<line x1="636.0" y1="834.0" x2="787.0" y2="834.0"/>
<line x1="807.0" y1="834.0" x2="900.0" y2="834.0"/>
<line x1="920.0" y1="834.0" x2="972.9" y2="834.0"/>
<line x1="984.0" y1="834.0" x2="1066.0" y2="834.0"/>
<line x1="1082.0" y1="834.0" x2="1203.8" y2="834.0"/>
<line x1="1244.1" y1="834.0" x2="1326.0" y2="834.0"/>
<line x1="1337.1" y1="834.0" x2="1356.0" y2="834.0"/>
<line x1="1380.9" y1="834.0" x2="1444.0" y2="834.0"/>
<line x1="1459.1" y1="834.0" x2="1512.0" y2="834.0"/>
<line x1="1523.1" y1="834.0" x2="1547.0" y2="834.0"/>
<line x1="1724.3" y1="834.0" x2="1747.9" y2="834.0"/>
<line x1="1758.2" y1="834.0" x2="1781.8" y2="834.0"/>
</g>
<g stroke="#86d449" stroke-width="4">
<line x1="165.0" y1="817.7" x2="189.0" y2="817.7"/>
<line x1="223.9" y1="817.7" x2="286.9" y2="817.7"/>
<line x1="312.0" y1="817.7" x2="341.0" y2="817.7"/>
<line x1="365.9" y1="817.7" x2="493.0" y2="817.7"/>
<line x1="508.0" y1="817.7" x2="654.0" y2="817.7"/>
<line x1="704.0" y1="817.7" x2="738.0" y2="817.7"/>
<line x1="773.0" y1="817.7" x2="845.9" y2="817.7"/>
<line x1="871.2" y1="817.7" x2="987.9" y2="817.7"/>
<line x1="1003.2" y1="817.7" x2="1016.9" y2="817.7"/>
<line x1="1062.0" y1="817.7" x2="1213.0" y2="817.7"/>
<line x1="1244.1" y1="817.7" x2="1267.1" y2="817.7"/>
<line x1="1293.0" y1="817.7" x2="1316.1" y2="817.7"/>
<line x1="1342.0" y1="817.7" x2="1365.1" y2="817.7"/>
<line x1="1385.9" y1="817.7" x2="1429.0" y2="817.7"/>
<line x1="1459.1" y1="817.7" x2="1483.0" y2="817.7"/>
<line x1="1548.2" y1="817.7" x2="1571.0" y2="817.7"/>
</g>
<g stroke="#52c468" stroke-width="4">
<line x1="165.0" y1="801.4" x2="189.0" y2="801.4"/>
<line x1="258.0" y1="801.4" x2="488.1" y2="801.4"/>
<line x1="508.0" y1="801.4" x2="615.0" y2="801.4"/>
<line x1="625.9" y1="801.4" x2="717.9" y2="801.4"/>
<line x1="728.9" y1="801.4" x2="825.9" y2="801.4"/>
<line x1="949.0" y1="801.4" x2="1150.0" y2="801.4"/>
<line x1="1160.0" y1="801.4" x2="1248.0" y2="801.4"/>
<line x1="1258.0" y1="801.4" x2="1444.0" y2="801.4"/>
<line x1="1459.1" y1="801.4" x2="1483.0" y2="801.4"/>
<line x1="1553.0" y1="801.4" x2="1576.0" y2="801.4"/>
</g>
<g stroke="#2bb17e" stroke-width="4">
<line x1="193.9" y1="785.0" x2="218.2" y2="785.0"/>
<line x1="322.0" y1="785.0" x2="507.0" y2="785.0"/>
<line x1="518.0" y1="785.0" x2="542.0" y2="785.0"/>
<line x1="557.1" y1="785.0" x2="684.0" y2="785.0"/>
<line x1="807.0" y1="785.0" x2="830.9" y2="785.0"/>
<line x1="954.0" y1="785.0" x2="972.9" y2="785.0"/>
<line x1="989.0" y1="785.0" x2="1124.9" y2="785.0"/>
<line x1="1155.0" y1="785.0" x2="1218.0" y2="785.0"/>
<line x1="1244.1" y1="785.0" x2="1267.1" y2="785.0"/>
<line x1="1316.9" y1="785.0" x2="1341.0" y2="785.0"/>
<line x1="1396.0" y1="785.0" x2="1419.2" y2="785.0"/>
<line x1="1464.2" y1="785.0" x2="1650.0" y2="785.0"/>
</g>
<g stroke="#1e9b89" stroke-width="4">
<line x1="341.0" y1="768.7" x2="370.0" y2="768.7"/>
<line x1="410.1" y1="768.7" x2="448.0" y2="768.7"/>
<line x1="469.0" y1="768.7" x2="493.0" y2="768.7"/>
<line x1="528.0" y1="768.7" x2="545.9" y2="768.7"/>
<line x1="562.0" y1="768.7" x2="591.0" y2="768.7"/>
<line x1="616.0" y1="768.7" x2="648.8" y2="768.7"/>
<line x1="959.0" y1="768.7" x2="987.9" y2="768.7"/>
<line x1="1062.2" y1="768.7" x2="1085.8" y2="768.7"/>
<line x1="1101.1" y1="768.7" x2="1124.9" y2="768.7"/>
<line x1="1160.0" y1="768.7" x2="1193.9" y2="768.7"/>
<line x1="1249.0" y1="768.7" x2="1272.0" y2="768.7"/>
<line x1="1424.9" y1="768.7" x2="1512.0" y2="768.7"/>
</g>
<g stroke="#25858e" stroke-width="4">
<line x1="420.0" y1="752.4" x2="444.0" y2="752.4"/>
<line x1="533.2" y1="752.4" x2="556.0" y2="752.4"/>
<line x1="566.9" y1="752.4" x2="591.0" y2="752.4"/>
<line x1="621.0" y1="752.4" x2="743.0" y2="752.4"/>
<line x1="969.0" y1="752.4" x2="1135.0" y2="752.4"/>
<line x1="1185.0" y1="752.4" x2="1345.9" y2="752.4"/>
<line x1="1469.0" y1="752.4" x2="1493.0" y2="752.4"/>
</g>
<g stroke="#2e6f8e" stroke-width="4">
<line x1="430.1" y1="736.1" x2="452.9" y2="736.1"/>
<line x1="577.0" y1="736.1" x2="733.0" y2="736.1"/>
<line x1="993.9" y1="736.1" x2="1105.0" y2="736.1"/>
<line x1="1116.1" y1="736.1" x2="1223.0" y2="736.1"/>
<line x1="1263.2" y1="736.1" x2="1292.0" y2="736.1"/>
<line x1="1489.1" y1="736.1" x2="1512.0" y2="736.1"/>
</g>
<g stroke="#38588c" stroke-width="4">
<line x1="592.0" y1="719.8" x2="615.0" y2="719.8"/>
<line x1="655.0" y1="719.8" x2="771.9" y2="719.8"/>
<line x1="1072.2" y1="719.8" x2="1243.0" y2="719.8"/>
<line x1="1263.2" y1="719.8" x2="1287.0" y2="719.8"/>
</g>
<g stroke="#433e84" stroke-width="4">
<line x1="596.0" y1="703.4" x2="733.0" y2="703.4"/>
<line x1="1092.0" y1="703.4" x2="1120.0" y2="703.4"/>
<line x1="1199.9" y1="703.4" x2="1223.0" y2="703.4"/>
<line x1="1273.1" y1="703.4" x2="1326.0" y2="703.4"/>
</g>
<g stroke="#482172" stroke-width="4">
<line x1="1111.2" y1="687.1" x2="1135.0" y2="687.1"/>
</g>
<g stroke="#fff" stroke-opacity="0.34" stroke-width="2.08" stroke-dasharray="2.08 3.44" fill="none">
<line x1="75.1" y1="842.2" x2="75.1" y2="641.2"/>
<line x1="218.9" y1="842.2" x2="218.9" y2="641.2"/>
<line x1="364.9" y1="842.2" x2="364.9" y2="641.2"/>
<line x1="506.0" y1="842.2" x2="506.0" y2="641.2"/>
<line x1="651.1" y1="842.2" x2="651.1" y2="641.2"/>
<line x1="796.8" y1="842.2" x2="796.8" y2="641.2"/>
<line x1="940.0" y1="842.2" x2="940.0" y2="641.2"/>
<line x1="1091.0" y1="842.2" x2="1091.0" y2="641.2"/>
<line x1="1238.9" y1="842.2" x2="1238.9" y2="641.2"/>
<line x1="1393.9" y1="842.2" x2="1393.9" y2="641.2"/>
<line x1="1547.8" y1="842.2" x2="1547.8" y2="641.2"/>
<line x1="1687.2" y1="842.2" x2="1687.2" y2="641.2"/>
</g>
<g stroke="#fff" stroke-width="2">
<path d="M113.7,834.0h8M117.7,830.0v8"/>
<path d="M240.7,834.0h8M244.7,830.0v8"/>
<path d="M510.7,834.0h8M514.7,830.0v8"/>
<path d="M706.9,834.0h8M710.9,830.0v8"/>
<path d="M833.7,834.0h8M837.7,830.0v8"/>
<path d="M961.9,834.0h8M965.9,830.0v8"/>
<path d="M986.8,834.0h8M990.8,830.0v8"/>
<path d="M1117.0,834.0h8M1121.0,830.0v8"/>
<path d="M1295.8,834.0h8M1299.8,830.0v8"/>
<path d="M1341.9,834.0h8M1345.9,830.0v8"/>
<path d="M1412.8,834.0h8M1416.8,830.0v8"/>
<path d="M1481.6,834.0h8M1485.6,830.0v8"/>
<path d="M1530.8,834.0h8M1534.8,830.0v8"/>
<path d="M1731.7,834.0h8M1735.7,830.0v8"/>
<path d="M1765.9,834.0h8M1769.9,830.0v8"/>
<path d="M172.6,817.7h8M176.6,813.7v8"/>
<path d="M255.9,817.7h8M259.9,813.7v8"/>
<path d="M323.8,817.7h8M327.8,813.7v8"/>
<path d="M437.8,817.7h8M441.8,813.7v8"/>
<path d="M598.9,817.7h8M602.9,813.7v8"/>
<path d="M717.0,817.7h8M721.0,813.7v8"/>
<path d="M793.8,817.7h8M797.8,813.7v8"/>
<path d="M939.9,817.7h8M943.9,813.7v8"/>
<path d="M1006.0,817.7h8M1010.0,813.7v8"/>
<path d="M1153.0,817.7h8M1157.0,813.7v8"/>
<path d="M1251.0,817.7h8M1255.0,813.7v8"/>
<path d="M1300.0,817.7h8M1304.0,813.7v8"/>
<path d="M1349.6,817.7h8M1353.6,813.7v8"/>
<path d="M1402.7,817.7h8M1406.7,813.7v8"/>
<path d="M1466.6,817.7h8M1470.6,813.7v8"/>
<path d="M1554.9,817.7h8M1558.9,813.7v8"/>
<path d="M174.5,801.4h8M178.5,797.4v8"/>
<path d="M378.8,801.4h8M382.8,797.4v8"/>
<path d="M544.8,801.4h8M548.8,797.4v8"/>
<path d="M682.9,801.4h8M686.9,797.4v8"/>
<path d="M741.9,801.4h8M745.9,797.4v8"/>
<path d="M1074.8,801.4h8M1078.8,797.4v8"/>
<path d="M1216.8,801.4h8M1220.8,797.4v8"/>
<path d="M1304.9,801.4h8M1308.9,797.4v8"/>
<path d="M1466.6,801.4h8M1470.6,797.4v8"/>
<path d="M1560.0,801.4h8M1564.0,797.4v8"/>
<path d="M201.8,785.0h8M205.8,781.0v8"/>
<path d="M400.7,785.0h8M404.7,781.0v8"/>
<path d="M525.7,785.0h8M529.7,781.0v8"/>
<path d="M638.8,785.0h8M642.8,781.0v8"/>
<path d="M814.9,785.0h8M818.9,781.0v8"/>
<path d="M959.8,785.0h8M963.8,781.0v8"/>
<path d="M1040.7,785.0h8M1044.7,781.0v8"/>
<path d="M1188.0,785.0h8M1192.0,781.0v8"/>
<path d="M1251.0,785.0h8M1255.0,781.0v8"/>
<path d="M1324.4,785.0h8M1328.4,781.0v8"/>
<path d="M1402.7,785.0h8M1406.7,781.0v8"/>
<path d="M1545.7,785.0h8M1549.7,781.0v8"/>
<path d="M355.9,768.7h8M359.9,764.7v8"/>
<path d="M426.7,768.7h8M430.7,764.7v8"/>
<path d="M476.7,768.7h8M480.7,764.7v8"/>
<path d="M535.6,768.7h8M539.6,764.7v8"/>
<path d="M570.6,768.7h8M574.6,764.7v8"/>
<path d="M630.6,768.7h8M634.6,764.7v8"/>
<path d="M973.6,768.7h8M977.6,764.7v8"/>
<path d="M1069.9,768.7h8M1073.9,764.7v8"/>
<path d="M1108.8,768.7h8M1112.8,764.7v8"/>
<path d="M1177.8,768.7h8M1181.8,764.7v8"/>
<path d="M1255.7,768.7h8M1259.7,764.7v8"/>
<path d="M1466.6,768.7h8M1470.6,764.7v8"/>
<path d="M427.7,752.4h8M431.7,748.4v8"/>
<path d="M539.9,752.4h8M543.9,748.4v8"/>
<path d="M574.5,752.4h8M578.5,748.4v8"/>
<path d="M703.9,752.4h8M707.9,748.4v8"/>
<path d="M1094.8,752.4h8M1098.8,748.4v8"/>
<path d="M1270.9,752.4h8M1274.9,748.4v8"/>
<path d="M1476.7,752.4h8M1480.7,748.4v8"/>
<path d="M437.4,736.1h8M441.4,732.1v8"/>
<path d="M630.6,736.1h8M634.6,732.1v8"/>
<path d="M1038.8,736.1h8M1042.8,732.1v8"/>
<path d="M1167.7,736.1h8M1171.7,732.1v8"/>
<path d="M1274.8,736.1h8M1278.8,732.1v8"/>
<path d="M1496.7,736.1h8M1500.7,732.1v8"/>
<path d="M598.8,719.8h8M602.8,715.8v8"/>
<path d="M726.9,719.8h8M730.9,715.8v8"/>
<path d="M1188.0,719.8h8M1192.0,715.8v8"/>
<path d="M1270.9,719.8h8M1274.9,715.8v8"/>
<path d="M687.8,703.4h8M691.8,699.4v8"/>
<path d="M1101.6,703.4h8M1105.6,699.4v8"/>
<path d="M1206.6,703.4h8M1210.6,699.4v8"/>
<path d="M1300.0,703.4h8M1304.0,699.4v8"/>
<path d="M1118.9,687.1h8M1122.9,683.1v8"/>
</g>
<g fill="#fff" font-size="10.6" text-anchor="middle">
<text x="118.0" y="831.4">KSE</text>
<text x="254.9" y="831.4">ETA</text>
<text x="495.4" y="831.4">NZC</text>
<text x="711.5" y="831.4">NDA</text>
<text x="853.5" y="831.4">SPE</text>
<text x="946.5" y="831.4">ARD</text>
<text x="1025.0" y="831.4">EGE</text>
<text x="1142.9" y="831.4">NTA</text>
<text x="1285.0" y="831.4">MON</text>
<text x="1346.5" y="831.4">URS</text>
<text x="1412.5" y="831.4">AHY</text>
<text x="1485.5" y="831.4">GUM</text>
<text x="1535.0" y="831.4">OHY</text>
<text x="1736.1" y="831.4">XHE</text>
<text x="1770.0" y="831.4">EVI</text>
<text x="177.0" y="815.1">AVB</text>
<text x="255.4" y="815.1">ELY</text>
<text x="326.5" y="815.1">CAM</text>
<text x="429.4" y="815.1">SSG</text>
<text x="581.0" y="815.1">PCA</text>
<text x="721.0" y="815.1">AUD</text>
<text x="809.5" y="815.1">AUR</text>
<text x="929.5" y="815.1">DSX</text>
<text x="1010.0" y="815.1">OCU</text>
<text x="1137.5" y="815.1">OER</text>
<text x="1255.6" y="815.1">DKD</text>
<text x="1304.5" y="815.1">DSV</text>
<text x="1353.5" y="815.1">ALY</text>
<text x="1407.5" y="815.1">JLE</text>
<text x="1471.0" y="815.1">SCC</text>
<text x="1559.6" y="815.1">FEV</text>
<text x="177.0" y="798.8">LYR</text>
<text x="373.1" y="798.8">JMC</text>
<text x="561.5" y="798.8">JPE</text>
<text x="671.9" y="798.8">PAU</text>
<text x="777.4" y="798.8">NIA</text>
<text x="1049.5" y="798.8">STA</text>
<text x="1204.0" y="798.8">NOO</text>
<text x="1351.0" y="798.8">COM</text>
<text x="1471.0" y="798.8">NCC</text>
<text x="1564.5" y="798.8">FED</text>
<text x="206.1" y="782.4">HVI</text>
<text x="414.5" y="782.4">ARI</text>
<text x="530.0" y="782.4">SZC</text>
<text x="620.5" y="782.4">CAP</text>
<text x="819.0" y="782.4">NUE</text>
<text x="963.5" y="782.4">OCT</text>
<text x="1057.0" y="782.4">ORI</text>
<text x="1186.5" y="782.4">AMO</text>
<text x="1255.6" y="782.4">DPC</text>
<text x="1329.0" y="782.4">XVI</text>
<text x="1407.6" y="782.4">QUA</text>
<text x="1557.1" y="782.4">AAN</text>
<text x="355.5" y="766.1">TAH</text>
<text x="429.1" y="766.1">JEA</text>
<text x="481.0" y="766.1">JIP</text>
<text x="537.0" y="766.1">PPS</text>
<text x="576.5" y="766.1">ZCS</text>
<text x="632.4" y="766.1">GDR</text>
<text x="973.5" y="766.1">DRA</text>
<text x="1074.0" y="766.1">LUM</text>
<text x="1113.0" y="766.1">RPU</text>
<text x="1177.0" y="766.1">THA</text>
<text x="1260.5" y="766.1">PSU</text>
<text x="1468.5" y="766.1">XCB</text>
<text x="432.0" y="749.8">JRC</text>
<text x="544.6" y="749.8">CAN</text>
<text x="579.0" y="749.8">FAN</text>
<text x="682.0" y="749.8">PER</text>
<text x="1052.0" y="749.8">CTA</text>
<text x="1265.5" y="749.8">HYD</text>
<text x="1481.0" y="749.8">XUM</text>
<text x="441.5" y="733.5">COR</text>
<text x="655.0" y="733.5">SDA</text>
<text x="1049.5" y="733.5">LMI</text>
<text x="1169.5" y="733.5">LEO</text>
<text x="1277.6" y="733.5">EHY</text>
<text x="1500.5" y="733.5">ECV</text>
<text x="603.5" y="717.2">JXA</text>
<text x="713.5" y="717.2">KCG</text>
<text x="1157.6" y="717.2">AND</text>
<text x="1275.1" y="717.2">DAD</text>
<text x="664.5" y="700.8">ERI</text>
<text x="1106.0" y="700.8">SLD</text>
<text x="1211.5" y="700.8">ORS</text>
<text x="1299.5" y="700.8">GEM</text>
<text x="1123.1" y="684.5">KUM</text>
</g>
<g stroke="#ff0000" stroke-width="1.45" stroke-dasharray="5.1 2.2" stroke-dashoffset="2.2">
<line x1="1174.45" y1="641.2" x2="1174.45" y2="842.2"/>
<line x1="1176.45" y1="641.2" x2="1176.45" y2="842.2"/>
</g>
<rect x="20.4" y="641.2" width="1764.6" height="201.0" fill="none" stroke="#fff" stroke-width="1.1"/>
<g stroke="#fff" stroke-width="1.1">
<line x1="20.40" y1="842.2" x2="20.40" y2="846.7"/>
<line x1="265.40" y1="842.2" x2="265.40" y2="846.7"/>
<line x1="510.40" y1="842.2" x2="510.40" y2="846.7"/>
<line x1="755.40" y1="842.2" x2="755.40" y2="846.7"/>
<line x1="1000.40" y1="842.2" x2="1000.40" y2="846.7"/>
<line x1="1245.40" y1="842.2" x2="1245.40" y2="846.7"/>
<line x1="1490.40" y1="842.2" x2="1490.40" y2="846.7"/>
<line x1="1735.40" y1="842.2" x2="1735.40" y2="846.7"/>
</g>
<g fill="#fff" font-size="13.9" text-anchor="middle">
<text x="20.40" y="862.2">0</text>
<text x="265.40" y="862.2">50</text>
<text x="510.40" y="862.2">100</text>
<text x="755.40" y="862.2">150</text>
<text x="1000.40" y="862.2">200</text>
<text x="1245.40" y="862.2">250</text>
<text x="1490.40" y="862.2">300</text>
<text x="1735.40" y="862.2">350</text>
<text transform="translate(902.4,882.1) scale(1.106,1)" font-size="14.4">Solar longitude (deg)</text>
</g>
</svg></body></html>
